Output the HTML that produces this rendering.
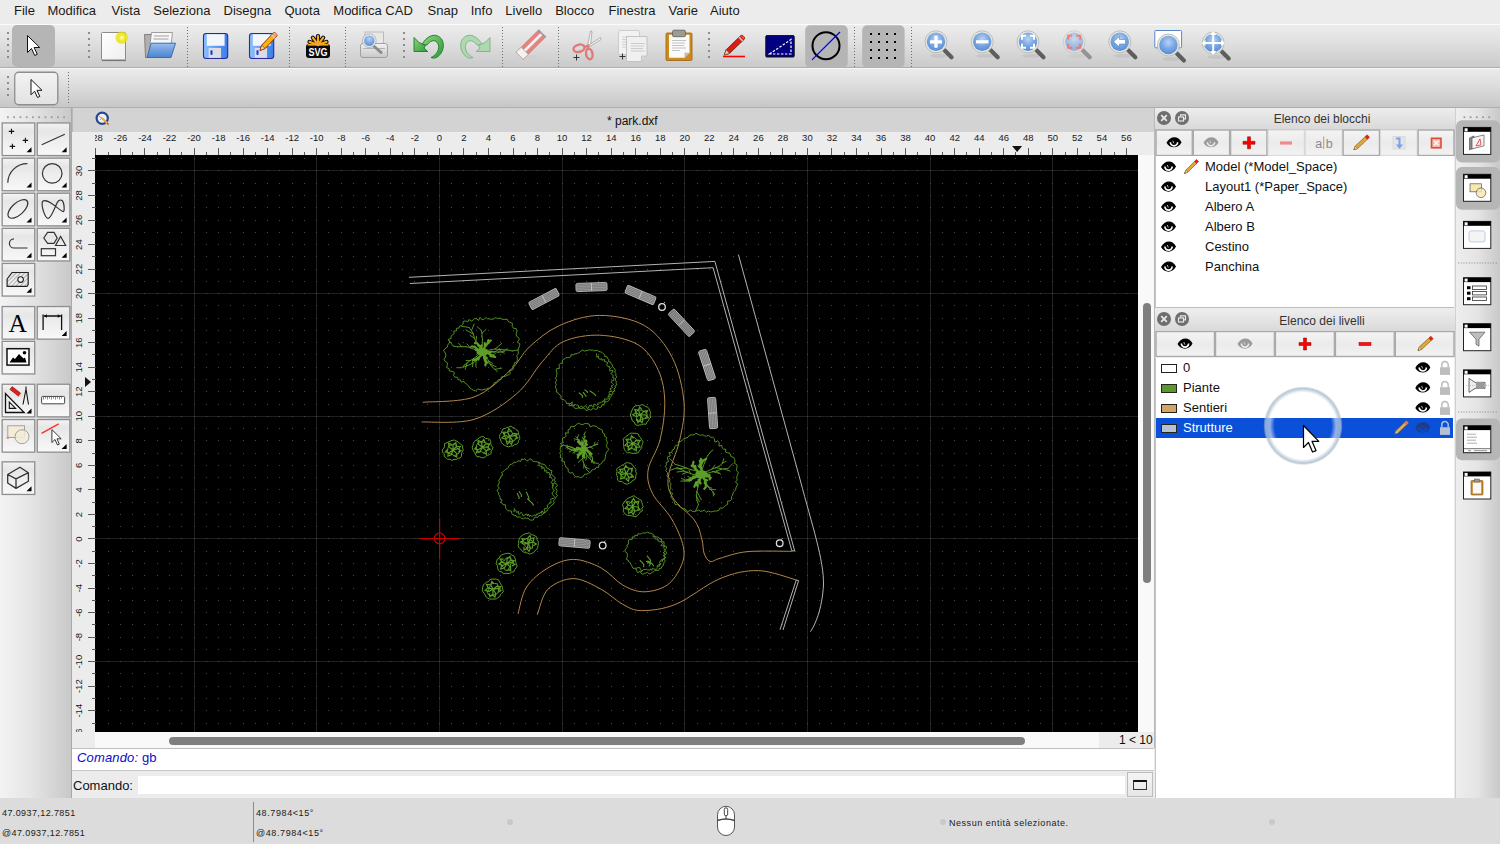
<!DOCTYPE html><html><head><meta charset="utf-8"><style>
*{margin:0;padding:0;box-sizing:border-box}
html,body{width:1500px;height:844px;overflow:hidden;background:#ececec;font-family:"Liberation Sans", sans-serif;color:#000}
.a{position:absolute}
.t{position:absolute;white-space:nowrap;line-height:1}
svg{position:absolute;overflow:visible}
</style></head><body><div class="a" style="left:0;top:0;width:1500px;height:24px;background:#ececec"></div><div class="t" style="left:14px;top:4px;font-size:13px;color:#1a1a1a">File</div><div class="t" style="left:47.5px;top:4px;font-size:13px;color:#1a1a1a">Modifica</div><div class="t" style="left:111.5px;top:4px;font-size:13px;color:#1a1a1a">Vista</div><div class="t" style="left:153.3px;top:4px;font-size:13px;color:#1a1a1a">Seleziona</div><div class="t" style="left:223.5px;top:4px;font-size:13px;color:#1a1a1a">Disegna</div><div class="t" style="left:284.5px;top:4px;font-size:13px;color:#1a1a1a">Quota</div><div class="t" style="left:333.3px;top:4px;font-size:13px;color:#1a1a1a">Modifica CAD</div><div class="t" style="left:427.5px;top:4px;font-size:13px;color:#1a1a1a">Snap</div><div class="t" style="left:470.7px;top:4px;font-size:13px;color:#1a1a1a">Info</div><div class="t" style="left:505.3px;top:4px;font-size:13px;color:#1a1a1a">Livello</div><div class="t" style="left:555.2px;top:4px;font-size:13px;color:#1a1a1a">Blocco</div><div class="t" style="left:608.5px;top:4px;font-size:13px;color:#1a1a1a">Finestra</div><div class="t" style="left:668.5px;top:4px;font-size:13px;color:#1a1a1a">Varie</div><div class="t" style="left:710px;top:4px;font-size:13px;color:#1a1a1a">Aiuto</div><div class="a" style="left:0;top:24px;width:1500px;height:44px;background:linear-gradient(#ececec,#e2e2e2 35%,#cacaca);border-top:1px solid #fbfbfb;border-bottom:1px solid #adadad"></div><div class="a" style="left:0;top:68px;width:1500px;height:40px;background:linear-gradient(#ebebeb,#dedede 40%,#c7c7c7);border-top:1px solid #f8f8f8;border-bottom:1px solid #adadad"></div><svg style="left:0;top:0" width="1500" height="108" viewBox="0 0 1500 108"><defs><linearGradient id="gpage" x1="0" y1="0" x2="1" y2="1"><stop offset="0" stop-color="#ffffff"/><stop offset="1" stop-color="#eeeeee"/></linearGradient><radialGradient id="gglow"><stop offset="0" stop-color="#ffffff"/><stop offset="0.35" stop-color="#f4ee30"/><stop offset="0.75" stop-color="#e8e000" stop-opacity="0.8"/><stop offset="1" stop-color="#e8e000" stop-opacity="0"/></radialGradient><linearGradient id="gblue" x1="0" y1="0" x2="0" y2="1"><stop offset="0" stop-color="#9cc0ec"/><stop offset="0.5" stop-color="#6f9fdc"/><stop offset="1" stop-color="#4f86d0"/></linearGradient><linearGradient id="gfloppy" x1="0" y1="0" x2="1" y2="0"><stop offset="0" stop-color="#8fc0ff"/><stop offset="0.5" stop-color="#5a9cf4"/><stop offset="1" stop-color="#3c7ee8"/></linearGradient><radialGradient id="gmag" cx="0.5" cy="0.35" r="0.7"><stop offset="0" stop-color="#b9d3f3"/><stop offset="0.5" stop-color="#7aa8e4"/><stop offset="1" stop-color="#4f88d6"/></radialGradient><linearGradient id="ggreen" x1="0" y1="0" x2="1" y2="1"><stop offset="0" stop-color="#8fd47a"/><stop offset="1" stop-color="#2e9a3a"/></linearGradient><linearGradient id="gprn" x1="0" y1="0" x2="0" y2="1"><stop offset="0" stop-color="#f2f2f2"/><stop offset="1" stop-color="#c8c8c8"/></linearGradient></defs><rect x="7" y="32" width="2" height="2" fill="#8c8c8c"/><rect x="7" y="38" width="2" height="2" fill="#8c8c8c"/><rect x="7" y="44" width="2" height="2" fill="#8c8c8c"/><rect x="7" y="50" width="2" height="2" fill="#8c8c8c"/><rect x="7" y="56" width="2" height="2" fill="#8c8c8c"/><rect x="403" y="32" width="2" height="2" fill="#8c8c8c"/><rect x="403" y="38" width="2" height="2" fill="#8c8c8c"/><rect x="403" y="44" width="2" height="2" fill="#8c8c8c"/><rect x="403" y="50" width="2" height="2" fill="#8c8c8c"/><rect x="403" y="56" width="2" height="2" fill="#8c8c8c"/><rect x="708" y="32" width="2" height="2" fill="#8c8c8c"/><rect x="708" y="38" width="2" height="2" fill="#8c8c8c"/><rect x="708" y="44" width="2" height="2" fill="#8c8c8c"/><rect x="708" y="50" width="2" height="2" fill="#8c8c8c"/><rect x="708" y="56" width="2" height="2" fill="#8c8c8c"/><rect x="7" y="76" width="2" height="2" fill="#8c8c8c"/><rect x="7" y="82" width="2" height="2" fill="#8c8c8c"/><rect x="7" y="88" width="2" height="2" fill="#8c8c8c"/><rect x="7" y="94" width="2" height="2" fill="#8c8c8c"/><rect x="88" y="32" width="2" height="2" fill="#8c8c8c"/><rect x="88" y="38" width="2" height="2" fill="#8c8c8c"/><rect x="88" y="44" width="2" height="2" fill="#8c8c8c"/><rect x="88" y="50" width="2" height="2" fill="#8c8c8c"/><rect x="88" y="56" width="2" height="2" fill="#8c8c8c"/><path d="M187 27.0h1v1h-1zM187 30.0h1v1h-1zM187 33.0h1v1h-1zM187 36.0h1v1h-1zM187 39.0h1v1h-1zM187 42.0h1v1h-1zM187 45.0h1v1h-1zM187 48.0h1v1h-1zM187 51.0h1v1h-1zM187 54.0h1v1h-1zM187 57.0h1v1h-1zM187 60.0h1v1h-1zM187 63.0h1v1h-1zM187 66.0h1v1h-1z" fill="#6e6e6e"/><path d="M289 27.0h1v1h-1zM289 30.0h1v1h-1zM289 33.0h1v1h-1zM289 36.0h1v1h-1zM289 39.0h1v1h-1zM289 42.0h1v1h-1zM289 45.0h1v1h-1zM289 48.0h1v1h-1zM289 51.0h1v1h-1zM289 54.0h1v1h-1zM289 57.0h1v1h-1zM289 60.0h1v1h-1zM289 63.0h1v1h-1zM289 66.0h1v1h-1z" fill="#6e6e6e"/><path d="M345 27.0h1v1h-1zM345 30.0h1v1h-1zM345 33.0h1v1h-1zM345 36.0h1v1h-1zM345 39.0h1v1h-1zM345 42.0h1v1h-1zM345 45.0h1v1h-1zM345 48.0h1v1h-1zM345 51.0h1v1h-1zM345 54.0h1v1h-1zM345 57.0h1v1h-1zM345 60.0h1v1h-1zM345 63.0h1v1h-1zM345 66.0h1v1h-1z" fill="#6e6e6e"/><path d="M502 27.0h1v1h-1zM502 30.0h1v1h-1zM502 33.0h1v1h-1zM502 36.0h1v1h-1zM502 39.0h1v1h-1zM502 42.0h1v1h-1zM502 45.0h1v1h-1zM502 48.0h1v1h-1zM502 51.0h1v1h-1zM502 54.0h1v1h-1zM502 57.0h1v1h-1zM502 60.0h1v1h-1zM502 63.0h1v1h-1zM502 66.0h1v1h-1z" fill="#6e6e6e"/><path d="M558 27.0h1v1h-1zM558 30.0h1v1h-1zM558 33.0h1v1h-1zM558 36.0h1v1h-1zM558 39.0h1v1h-1zM558 42.0h1v1h-1zM558 45.0h1v1h-1zM558 48.0h1v1h-1zM558 51.0h1v1h-1zM558 54.0h1v1h-1zM558 57.0h1v1h-1zM558 60.0h1v1h-1zM558 63.0h1v1h-1zM558 66.0h1v1h-1z" fill="#6e6e6e"/><path d="M854 27.0h1v1h-1zM854 30.0h1v1h-1zM854 33.0h1v1h-1zM854 36.0h1v1h-1zM854 39.0h1v1h-1zM854 42.0h1v1h-1zM854 45.0h1v1h-1zM854 48.0h1v1h-1zM854 51.0h1v1h-1zM854 54.0h1v1h-1zM854 57.0h1v1h-1zM854 60.0h1v1h-1zM854 63.0h1v1h-1zM854 66.0h1v1h-1z" fill="#6e6e6e"/><path d="M911 27.0h1v1h-1zM911 30.0h1v1h-1zM911 33.0h1v1h-1zM911 36.0h1v1h-1zM911 39.0h1v1h-1zM911 42.0h1v1h-1zM911 45.0h1v1h-1zM911 48.0h1v1h-1zM911 51.0h1v1h-1zM911 54.0h1v1h-1zM911 57.0h1v1h-1zM911 60.0h1v1h-1zM911 63.0h1v1h-1zM911 66.0h1v1h-1z" fill="#6e6e6e"/><path d="M68 72.0h1v1h-1zM68 75.0h1v1h-1zM68 78.0h1v1h-1zM68 81.0h1v1h-1zM68 84.0h1v1h-1zM68 87.0h1v1h-1zM68 90.0h1v1h-1zM68 93.0h1v1h-1zM68 96.0h1v1h-1zM68 99.0h1v1h-1zM68 102.0h1v1h-1z" fill="#6e6e6e"/><rect x="12" y="25" width="43" height="42" rx="5" fill="#b5b5b5"/><path d="M27.5 35.5l0 17.0l4.0 -4.0l3.2 7.0l2.6 -1.2l-3.2 -6.8l5.6 0z" fill="#fff" stroke="#111" stroke-width="1" stroke-linejoin="round"/><rect x="14.8" y="72.3" width="43" height="32.5" rx="4" fill="url(#gprn)" stroke="#8e8e8e" stroke-width="1.4"/><rect x="15.5" y="73" width="41.6" height="31" rx="3.5" fill="#f4f4f4" opacity="0.6"/><path d="M31 79.5l0 15.3l3.6 -3.6l2.8800000000000003 6.3l2.3400000000000003 -1.08l-2.8800000000000003 -6.12l5.04 0z" fill="#fff" stroke="#111" stroke-width="1" stroke-linejoin="round"/><rect x="101.5" y="32.5" width="24" height="27.5" rx="1" fill="url(#gpage)" stroke="#8c8c8c" stroke-width="1"/><path d="M102 60.5h24" stroke="#777" stroke-width="1.2"/><circle cx="121.8" cy="37.7" r="7" fill="url(#gglow)"/><path d="M144.5 34.5h7l5 0v23h-11z" fill="#b0b0b0" stroke="#6e6e6e" stroke-width="0.8"/><path d="M151.5 32.5h21l-3 25h-21z" fill="#f7f7f7" stroke="#8a8a8a" stroke-width="0.8"/><path d="M154 36h15M153.5 39h15" stroke="#bdbdbd" stroke-width="1.5"/><path d="M151.2 43.2h24.3l-4.5 14.3h-24z" fill="url(#gblue)" stroke="#3a6cb4" stroke-width="1"/><rect x="203.5" y="33.5" width="24.2" height="25" rx="2.5" fill="url(#gfloppy)" stroke="#2a2aa0" stroke-width="1.1"/><rect x="206.8" y="34.2" width="17.8" height="11.6" fill="#f4f6fc"/><rect x="208.6" y="47.9" width="12.4" height="10" fill="#dcdce4"/><rect x="210.5" y="50.3" width="2" height="4.5" fill="#0a3ad8"/><rect x="249.5" y="33.5" width="24.2" height="25" rx="2.5" fill="url(#gfloppy)" stroke="#2a2aa0" stroke-width="1.1"/><rect x="252.8" y="34.2" width="17.8" height="11.6" fill="#f4f6fc"/><rect x="254.6" y="47.9" width="12.4" height="10" fill="#dcdce4"/><rect x="256.5" y="50.3" width="2" height="4.5" fill="#0a3ad8"/><g transform="translate(260 50.5) rotate(-46.7)"><path d="M0 0L5 -2.4H21.845235059857504Q23.345235059857504 -2.4 23.345235059857504 0Q23.345235059857504 2.4 21.845235059857504 2.4H5Z" fill="#f7b500" stroke="#9a2200" stroke-width="0.9"/><path d="M0 0L5 -2.4V2.4Z" fill="#f0d8b0" stroke="#9a2200" stroke-width="0.6"/><path d="M19.345235059857504 -2.4V2.4" stroke="#c8c8c8" stroke-width="1.6"/><path d="M21.145235059857505 -2.0Q23.345235059857504 -2.4 23.345235059857504 0Q23.345235059857504 2.4 21.145235059857505 2.0Z" fill="#e8a0a0"/></g><rect x="306" y="43.7" width="24" height="14.2" rx="3" fill="#0a0a0a"/><path d="M318 45L309.5 41.9M318 45L312.8 37.6M318 45L318.0 36.0M318 45L323.2 37.6M318 45L326.5 41.9" stroke="#0a0a0a" stroke-width="4.2" stroke-linecap="round"/><path d="M318 45L309.5 41.9M318 45L312.8 37.6M318 45L318.0 36.0M318 45L323.2 37.6M318 45L326.5 41.9" stroke="#f5a623" stroke-width="2.2" stroke-linecap="round"/><path d="M307.5 44.8H328.5" stroke="#f5a623" stroke-width="1.6"/><text x="318" y="56.3" font-size="10" font-weight="bold" text-anchor="middle" fill="#fff" font-family="Liberation Sans" textLength="19" lengthAdjust="spacingAndGlyphs">SVG</text><rect x="365" y="32" width="18.5" height="13" fill="#e8e8e8" stroke="#b0b0b0" stroke-width="0.8"/><rect x="360.5" y="43.5" width="27" height="14" rx="2.5" fill="url(#gprn)" stroke="#9a9a9a" stroke-width="0.9"/><path d="M363 48.5h22" stroke="#a8a8a8" stroke-width="0.8"/><path d="M372.5 45L381 52.5" stroke="#8a8a8a" stroke-width="3" stroke-linecap="round"/><circle cx="369.3" cy="40.7" r="6" fill="url(#gmag)" stroke="#e8e8e8" stroke-width="1.6"/><circle cx="369.3" cy="40.7" r="6.9" fill="none" stroke="#9a9a9a" stroke-width="0.6"/><g transform="translate(428.5 0) scale(1 1)" opacity="1.0"><path d="M-6.5 44.5C-2 36 6 33 11 37C17 41 16 53 8 57.5C6 58.5 3.5 58 2.5 57.5C7 55.5 11 51 10 45.5C9 40 3 38.5 -1.5 45Z" fill="url(#ggreen)" stroke="#1a7a2a" stroke-width="0.9"/><path d="M-14.5 37.5V51.5H-0.8L-4.5 48L-3 45.5L-9.5 42.5Z" fill="url(#ggreen)" stroke="#1a7a2a" stroke-width="0.9"/></g><g transform="translate(475.5 0) scale(-1 1)" opacity="0.85"><path d="M-6.5 44.5C-2 36 6 33 11 37C17 41 16 53 8 57.5C6 58.5 3.5 58 2.5 57.5C7 55.5 11 51 10 45.5C9 40 3 38.5 -1.5 45Z" fill="#a8d8a8" stroke="#6aaa7a" stroke-width="0.9"/><path d="M-14.5 37.5V51.5H-0.8L-4.5 48L-3 45.5L-9.5 42.5Z" fill="#a8d8a8" stroke="#6aaa7a" stroke-width="0.9"/></g><ellipse cx="531" cy="57" rx="12" ry="1.8" fill="#cfcfcf" opacity="0.8"/><g transform="translate(531 44.5) rotate(-45)"><rect x="-16" y="-5" width="32" height="10" fill="#e58282" stroke="#cc6a6a" stroke-width="0.6"/><rect x="-9" y="-1.4" width="25" height="2.8" fill="#f0f0f0"/><rect x="-16" y="-5" width="7" height="10" fill="#f2f2f2" stroke="#aaa" stroke-width="0.6"/><rect x="14.5" y="-5" width="1.5" height="10" fill="#9a9a9a"/></g><path d="M587.5 46L590.5 31L592 31.5L590.5 46Z" fill="#f4f4f4" stroke="#9a9a9a" stroke-width="0.7"/><path d="M589 45L600.5 37.5L601 39.5L590 46.5Z" fill="#f4f4f4" stroke="#9a9a9a" stroke-width="0.7"/><ellipse cx="579" cy="48.3" rx="5.6" ry="3.6" transform="rotate(-15 579 48.3)" fill="none" stroke="#e07a7a" stroke-width="2.4"/><ellipse cx="589.3" cy="54" rx="3.2" ry="5.3" transform="rotate(-10 589.3 54)" fill="none" stroke="#e07a7a" stroke-width="2.4"/><path d="M584 47.5L588 45.5L588.5 49" fill="none" stroke="#e07a7a" stroke-width="2"/><path d="M573.5 57.5h6M576.5 54.5v6" stroke="#333" stroke-width="1"/><rect x="618.5" y="30.5" width="21" height="24" rx="1" fill="#f2f2f2" stroke="#c4c4c4" stroke-width="0.8"/><path d="M622 37h9M622 39.5h9M622 42h9M622 44.5h9M622 47h9" stroke="#d0d0d0" stroke-width="1"/><path d="M626.5 36.5h20.5v19.5l-5.5 5.5h-15z" fill="#f0f0f0" stroke="#bdbdbd" stroke-width="0.9"/><path d="M641.5 61.5v-5.5h5.5" fill="#d8d8d8" stroke="#bdbdbd" stroke-width="0.8"/><path d="M631 43.5h14M631 46h13M631 48.5h12M631 51h14" stroke="#cacaca" stroke-width="1"/><path d="M619.5 56.5h6M622.5 53.5v6" stroke="#333" stroke-width="1"/><rect x="666" y="33" width="26" height="27.5" rx="1.2" fill="#cf8a1c" stroke="#9a6010" stroke-width="0.8"/><path d="M669 34.8h20.5v18l-5 5h-15.5z" fill="#fafafa"/><path d="M684.5 57.8v-5h5" fill="#bbb"/><rect x="672.5" y="30.2" width="13" height="6.5" rx="1.5" fill="#9c9c90" stroke="#5e5e58" stroke-width="0.8"/><path d="M672 40.5h14M672 43h13M672 45.5h12M672 48h14M672 50.5h8" stroke="#bcbcbc" stroke-width="0.9"/><path d="M723 56.5H745" stroke="#ff0000" stroke-width="1.6"/><g transform="translate(724.3 55) rotate(-43.9)"><path d="M0 0L5 -2.5H25.4453149916642Q26.9453149916642 -2.5 26.9453149916642 0Q26.9453149916642 2.5 25.4453149916642 2.5H5Z" fill="#e01818" stroke="#6a3a10" stroke-width="0.9"/><path d="M0 0L5 -2.5V2.5Z" fill="#f0d0b0" stroke="#6a3a10" stroke-width="0.6"/><path d="M22.9453149916642 -2.5V2.5" stroke="#c8c8c8" stroke-width="1.6"/><path d="M24.745314991664202 -2.1Q26.9453149916642 -2.5 26.9453149916642 0Q26.9453149916642 2.5 24.745314991664202 2.1Z" fill="#ff4040"/></g><rect x="765.8" y="35.6" width="28.4" height="21.4" rx="1" fill="#000080" stroke="#111" stroke-width="1"/><path d="M769.5 54L791 39.5V54Z" fill="none" stroke="#fff" stroke-width="1.2" stroke-dasharray="2.5 1.5"/><rect x="805.2" y="25.2" width="42.6" height="42.4" rx="5" fill="#b5b5b5"/><circle cx="826" cy="45.7" r="13.5" fill="none" stroke="#000" stroke-width="2"/><path d="M812 59.9L840 32" stroke="#0000f0" stroke-width="1.2"/><rect x="862.2" y="25.2" width="42.4" height="42.4" rx="5" fill="#b5b5b5"/><path d="M870 33h2v2h-2zM870 41h2v2h-2zM870 49h2v2h-2zM870 57h2v2h-2zM878 33h2v2h-2zM878 41h2v2h-2zM878 49h2v2h-2zM878 57h2v2h-2zM886 33h2v2h-2zM886 41h2v2h-2zM886 49h2v2h-2zM886 57h2v2h-2zM894 33h2v2h-2zM894 41h2v2h-2zM894 49h2v2h-2zM894 57h2v2h-2z" fill="#000"/><g><ellipse cx="939" cy="55.8" rx="9" ry="2" fill="#b8b8b8" opacity="0.5"/><path d="M944.5 50.3L951.5 57.3" stroke="#5e5e5e" stroke-width="4.2" stroke-linecap="round"/><circle cx="936" cy="41.8" r="11" fill="#e6e6e0" stroke="#b4b4aa" stroke-width="0.8"/><circle cx="936" cy="41.8" r="9.2" fill="url(#gmag)"/><path d="M930 41.8h12M936 35.8v12" stroke="#fff" stroke-width="3.2"/></g><g><ellipse cx="985.2" cy="55.8" rx="9" ry="2" fill="#b8b8b8" opacity="0.5"/><path d="M990.7 50.3L997.7 57.3" stroke="#5e5e5e" stroke-width="4.2" stroke-linecap="round"/><circle cx="982.2" cy="41.8" r="11" fill="#e6e6e0" stroke="#b4b4aa" stroke-width="0.8"/><circle cx="982.2" cy="41.8" r="9.2" fill="url(#gmag)"/><path d="M976 41.8h12.5" stroke="#fff" stroke-width="3.2"/></g><g><ellipse cx="1031" cy="55.8" rx="9" ry="2" fill="#b8b8b8" opacity="0.5"/><path d="M1036.5 50.3L1043.5 57.3" stroke="#5e5e5e" stroke-width="4.2" stroke-linecap="round"/><circle cx="1028" cy="41.8" r="11" fill="#e6e6e0" stroke="#b4b4aa" stroke-width="0.8"/><circle cx="1028" cy="41.8" r="9.2" fill="url(#gmag)"/><path d="M1022 39.8v-4h4M1030 35.8h4v4M1034 43.8v4h-4M1026 47.8h-4v-4" fill="none" stroke="#fff" stroke-width="2"/></g><g opacity="0.55"><ellipse cx="1077.2" cy="55.8" rx="9" ry="2" fill="#b8b8b8" opacity="0.5"/><path d="M1082.7 50.3L1089.7 57.3" stroke="#5e5e5e" stroke-width="4.2" stroke-linecap="round"/><circle cx="1074.2" cy="41.8" r="11" fill="#e6e6e0" stroke="#b4b4aa" stroke-width="0.8"/><circle cx="1074.2" cy="41.8" r="9.2" fill="url(#gmag)"/><path d="M1068.2 39.8v-4h4M1076.2 35.8h4v4M1080.2 43.8v4h-4M1072.2 47.8h-4v-4" fill="none" stroke="#ff2a2a" stroke-width="2"/></g><g><ellipse cx="1122.8" cy="55.8" rx="9" ry="2" fill="#b8b8b8" opacity="0.5"/><path d="M1128.3 50.3L1135.3 57.3" stroke="#5e5e5e" stroke-width="4.2" stroke-linecap="round"/><circle cx="1119.8" cy="41.8" r="11" fill="#e6e6e0" stroke="#b4b4aa" stroke-width="0.8"/><circle cx="1119.8" cy="41.8" r="9.2" fill="url(#gmag)"/><path d="M1113.5 41.8L1119.5 36.5V39.5H1125.5V44H1119.5V47Z" fill="#fff" stroke="#3a6cb4" stroke-width="0.5"/></g><rect x="1154.8" y="30.5" width="26.8" height="17.3" rx="1" fill="#fff" stroke="#5a86c8" stroke-width="1"/><g><ellipse cx="1171.4" cy="59" rx="9" ry="2" fill="#b8b8b8" opacity="0.5"/><path d="M1176.9 53.5L1183.9 60.5" stroke="#5e5e5e" stroke-width="4.2" stroke-linecap="round"/><circle cx="1168.4" cy="45" r="11" fill="#e6e6e0" stroke="#b4b4aa" stroke-width="0.8"/><circle cx="1168.4" cy="45" r="9.2" fill="url(#gmag)"/></g><g><ellipse cx="1216.2" cy="57" rx="9" ry="2" fill="#b8b8b8" opacity="0.5"/><path d="M1221.7 51.5L1228.7 58.5" stroke="#5e5e5e" stroke-width="4.2" stroke-linecap="round"/><circle cx="1213.2" cy="43" r="11" fill="#e6e6e0" stroke="#b4b4aa" stroke-width="0.8"/><circle cx="1213.2" cy="43" r="9.2" fill="url(#gmag)"/><path d="M1213.2 33v20M1203.5 43h19.5" stroke="#fff" stroke-width="2"/><path d="M1213.2 31l-3 4h6zM1213.2 55l-3-4h6zM1201.5 43l4-3v6zM1225 43l-4-3v6z" fill="#fff"/></g></svg><div class="a" style="left:0;top:108px;width:72px;height:690px;background:linear-gradient(90deg,#f3f3f3,#e6e6e6 40%,#c9c9c9);border-right:1px solid #a9a9a9"></div><svg style="left:0;top:108px" width="72" height="400" viewBox="0 108 72 400"><defs><linearGradient id="gbtn" x1="0" y1="0" x2="0" y2="1"><stop offset="0" stop-color="#f3f3f3"/><stop offset="0.25" stop-color="#e6e6e6"/><stop offset="0.5" stop-color="#ededed"/><stop offset="1" stop-color="#f8f8f8"/></linearGradient></defs><rect x="7.0" y="116.3" width="1.8" height="1.8" fill="#9c9c9c"/><rect x="13.2" y="116.3" width="1.8" height="1.8" fill="#9c9c9c"/><rect x="19.5" y="116.3" width="1.8" height="1.8" fill="#9c9c9c"/><rect x="25.8" y="116.3" width="1.8" height="1.8" fill="#9c9c9c"/><rect x="32.0" y="116.3" width="1.8" height="1.8" fill="#9c9c9c"/><rect x="38.2" y="116.3" width="1.8" height="1.8" fill="#9c9c9c"/><rect x="44.5" y="116.3" width="1.8" height="1.8" fill="#9c9c9c"/><rect x="50.8" y="116.3" width="1.8" height="1.8" fill="#9c9c9c"/><rect x="57.0" y="116.3" width="1.8" height="1.8" fill="#9c9c9c"/><rect x="63.2" y="116.3" width="1.8" height="1.8" fill="#9c9c9c"/><rect x="2.15" y="122.95" width="32.6" height="32.6" fill="url(#gbtn)" stroke="#8e8e8e" stroke-width="1.3"/><path d="M26.5 152.3H31.5V147.3Z" fill="#000"/><path d="M8.8 131.4h5.4M11.5 128.7v5.4M22.7 140.4h5.4M25.4 137.7v5.4M9.7 146.4h5.4M12.4 143.7v5.4" stroke="#111" stroke-width="1.1"/><rect x="37.25" y="122.95" width="32.6" height="32.6" fill="url(#gbtn)" stroke="#8e8e8e" stroke-width="1.3"/><path d="M61.6 152.3H66.6V147.3Z" fill="#000"/><path d="M41.7 144.7L64.8 134.3" stroke="#333" fill="none" stroke-width="1.2"/><rect x="2.15" y="158.15" width="32.6" height="32.6" fill="url(#gbtn)" stroke="#8e8e8e" stroke-width="1.3"/><path d="M26.5 187.5H31.5V182.5Z" fill="#000"/><rect x="37.25" y="158.15" width="32.6" height="32.6" fill="url(#gbtn)" stroke="#8e8e8e" stroke-width="1.3"/><path d="M61.6 187.5H66.6V182.5Z" fill="#000"/><path d="M7.8 182.8A19.5 19.5 0 0 1 27.4 163.6" stroke="#333" fill="none" stroke-width="1.2"/><circle cx="52.2" cy="173.4" r="9.8" stroke="#333" fill="none" stroke-width="1.2"/><rect x="2.15" y="193.25" width="32.6" height="32.6" fill="url(#gbtn)" stroke="#8e8e8e" stroke-width="1.3"/><path d="M26.5 222.6H31.5V217.6Z" fill="#000"/><rect x="37.25" y="193.25" width="32.6" height="32.6" fill="url(#gbtn)" stroke="#8e8e8e" stroke-width="1.3"/><path d="M61.6 222.6H66.6V217.6Z" fill="#000"/><ellipse cx="17.9" cy="208.9" rx="12.2" ry="6" transform="rotate(-42 17.9 208.9)" stroke="#333" fill="none" stroke-width="1.2"/><path d="M42.5 201.5C41 206 45 218.5 48.2 218.4C51 218.3 55 207 57 203C59 199 62.5 199 63.5 203C64.5 207 64.5 212 63 211.5C58 209.5 47 197 42.5 201.5Z" stroke="#333" fill="none" stroke-width="1.2"/><rect x="2.15" y="228.35" width="32.6" height="32.6" fill="url(#gbtn)" stroke="#8e8e8e" stroke-width="1.3"/><path d="M26.5 257.7H31.5V252.7Z" fill="#000"/><rect x="37.25" y="228.35" width="32.6" height="32.6" fill="url(#gbtn)" stroke="#8e8e8e" stroke-width="1.3"/><path d="M61.6 257.7H66.6V252.7Z" fill="#000"/><path d="M27.5 248H14A4.6 4.6 0 0 1 14 238.8" stroke="#333" fill="none" stroke-width="1.2"/><path d="M43.8 238L47.6 232.4H54L57.2 238L54 243.4H47.6Z" stroke="#333" fill="none" stroke-width="1.2"/><path d="M55.5 245.5H65.7L60.6 236.4Z" stroke="#333" fill="none" stroke-width="1.2"/><rect x="41.3" y="248.7" width="14.2" height="7" stroke="#333" fill="none" stroke-width="1.2"/><rect x="2.15" y="263.45" width="32.6" height="32.6" fill="url(#gbtn)" stroke="#8e8e8e" stroke-width="1.3"/><path d="M26.5 292.8H31.5V287.8Z" fill="#000"/><defs><pattern id="hatch" width="3" height="3" patternUnits="userSpaceOnUse" patternTransform="rotate(45)"><path d="M0 0V3" stroke="#555" stroke-width="0.8"/></pattern></defs><path d="M7.1 279L12.1 272.5H28.2V284.6L27 286.3H7.1Z" fill="url(#hatch)" stroke="#222" stroke-width="1.2"/><circle cx="20.6" cy="279.6" r="2.8" fill="#f2f2f2" stroke="#222" stroke-width="1.1"/><rect x="2.15" y="306.54999999999995" width="32.6" height="32.6" fill="url(#gbtn)" stroke="#8e8e8e" stroke-width="1.3"/><rect x="37.25" y="306.54999999999995" width="32.6" height="32.6" fill="url(#gbtn)" stroke="#8e8e8e" stroke-width="1.3"/><path d="M61.6 335.9H66.6V330.9Z" fill="#000"/><text x="17.8" y="331.5" font-size="25.5" text-anchor="middle" font-family="Liberation Serif" fill="#000">A</text><path d="M43.1 314.5V330.1M61.6 314.5V330.1M44 316H60.7" stroke="#111" stroke-width="1.3" fill="none"/><path d="M43.6 316L47 314.2V317.8ZM61.1 316L57.7 314.2V317.8Z" fill="#111"/><rect x="2.15" y="341.34999999999997" width="32.6" height="32.6" fill="url(#gbtn)" stroke="#8e8e8e" stroke-width="1.3"/><rect x="7" y="348.7" width="22" height="16.4" fill="#fff" stroke="#111" stroke-width="1.5"/><path d="M9.5 362.5L13 357.5L15 359L19 354L23.5 358.5L25 357.5L26.5 362.5Z" fill="#000"/><circle cx="24.5" cy="352.8" r="1.8" fill="#000"/><rect x="2.15" y="384.25" width="32.6" height="32.6" fill="url(#gbtn)" stroke="#8e8e8e" stroke-width="1.3"/><path d="M26.5 413.6H31.5V408.6Z" fill="#000"/><rect x="37.25" y="384.25" width="32.6" height="32.6" fill="url(#gbtn)" stroke="#8e8e8e" stroke-width="1.3"/><path d="M5.5 393.5V412.5H24.2Z" fill="none" stroke="#111" stroke-width="1.3"/><path d="M9.3 402V408.4H15.6Z" fill="none" stroke="#111" stroke-width="1.1"/><g transform="translate(11 388) rotate(38)"><rect x="0" y="-1.8" width="11" height="3.6" fill="#e02020" stroke="#700" stroke-width="0.5"/><path d="M11 -1.8L14 0L11 1.8Z" fill="#f0d0a0"/></g><path d="M26 386.5V389M26 389L23 404.5M26 389L28.5 404.5" stroke="#111" stroke-width="1.1" fill="none"/><rect x="41.6" y="396.4" width="23" height="7.4" rx="1" fill="#fff" stroke="#444" stroke-width="1"/><path d="M43.5 396.8V399.6M45.5 396.8V398.6M47.5 396.8V399.6M49.5 396.8V398.6M51.5 396.8V399.6M53.5 396.8V398.6M55.5 396.8V399.6M57.5 396.8V398.6M59.5 396.8V399.6M61.5 396.8V398.6" stroke="#444" stroke-width="0.6"/><rect x="2.15" y="419.54999999999995" width="32.6" height="32.6" fill="url(#gbtn)" stroke="#8e8e8e" stroke-width="1.3"/><rect x="37.25" y="419.54999999999995" width="32.6" height="32.6" fill="url(#gbtn)" stroke="#8e8e8e" stroke-width="1.3"/><path d="M61.6 448.9H66.6V443.9Z" fill="#000"/><rect x="7.8" y="425.8" width="16.7" height="11.6" fill="#f2ecd8" stroke="#9a9a9a" stroke-width="0.9"/><circle cx="22" cy="436.7" r="7" fill="#f2ecd8" fill-opacity="0.85" stroke="#9a9a9a" stroke-width="0.9"/><circle cx="7.8" cy="437.7" r="1.2" fill="#f08080"/><path d="M41.5 433.4L58.7 423.9" stroke="#f03030" stroke-width="1.3"/><path d="M51.9 429.6V442.5L55 439.5L57.5 445L59.3 444.2L57 438.8H61.2Z" fill="#fff" stroke="#222" stroke-width="0.9" stroke-linejoin="round"/><rect x="2.15" y="461.84999999999997" width="32.6" height="32.6" fill="url(#gbtn)" stroke="#8e8e8e" stroke-width="1.3"/><path d="M26.5 491.2H31.5V486.2Z" fill="#000"/><path d="M19.9 467.2L7.7 474.5V483L16 488.4L28.4 481.3V472.7ZM7.7 474.5L16 478.8L28.4 472.7M16 478.8V488.4" fill="none" stroke="#333" stroke-width="1.3" stroke-linejoin="round"/></svg><div class="a" style="left:72px;top:108px;width:1083px;height:24px;background:#d3d3d3;border-left:1px solid #b8b8b8"></div><div class="t" style="left:607px;top:115px;font-size:12px;color:#111">* park.dxf</div><svg style="left:90px;top:108px" width="30" height="24" viewBox="90 108 30 24"><circle cx="102.2" cy="118.3" r="5.6" fill="#eef2f8" stroke="#2c4590" stroke-width="2.2"/><path d="M99 116.5l3 1.5M100 120l2-2" stroke="#c05050" stroke-width="0.6"/><path d="M102 118L107.5 123.5" stroke="#e8b020" stroke-width="2.2"/><path d="M107 123L108.6 124.6" stroke="#e05050" stroke-width="1.6"/></svg><div class="a" style="left:72px;top:132px;width:1083px;height:23px;background:#ececec"></div><div class="a" style="left:72px;top:155px;width:23px;height:593px;background:#ececec"></div><div class="a" style="left:95px;top:155px;width:1043px;height:577px;background:#000"></div><div class="a" style="left:1138px;top:155px;width:16px;height:577px;background:#f9f9f9"></div><div class="a" style="left:1143px;top:303px;width:8px;height:280px;background:#7f7f7f;border-radius:4px"></div><div class="a" style="left:95px;top:732px;width:1004px;height:16px;background:#f9f9f9"></div><div class="a" style="left:169px;top:737px;width:856px;height:8px;background:#7f7f7f;border-radius:4px"></div><div class="a" style="left:1099px;top:732px;width:55px;height:16px;background:#ececec"></div><div class="t" style="left:1119px;top:734px;font-size:12px;color:#111">1 &lt; 10</div><div class="a" style="left:1154px;top:108px;width:1px;height:690px;background:#b9b9b9"></div><svg style="left:95px;top:132px;overflow:hidden" width="1043" height="23" viewBox="95 132 1043 23"><path d="M95.5 148V155 M108.5 152V155 M120.5 148V155 M132.5 152V155 M144.5 148V155 M157.5 152V155 M169.5 148V155 M181.5 152V155 M194.5 148V155 M206.5 152V155 M218.5 148V155 M230.5 152V155 M243.5 148V155 M255.5 152V155 M267.5 148V155 M279.5 152V155 M292.5 148V155 M304.5 152V155 M316.5 148V155 M328.5 152V155 M341.5 148V155 M353.5 152V155 M365.5 148V155 M378.5 152V155 M390.5 148V155 M402.5 152V155 M414.5 148V155 M427.5 152V155 M439.5 148V155 M451.5 152V155 M463.5 148V155 M476.5 152V155 M488.5 148V155 M500.5 152V155 M513.5 148V155 M525.5 152V155 M537.5 148V155 M549.5 152V155 M562.5 148V155 M574.5 152V155 M586.5 148V155 M598.5 152V155 M611.5 148V155 M623.5 152V155 M635.5 148V155 M647.5 152V155 M660.5 148V155 M672.5 152V155 M684.5 148V155 M697.5 152V155 M709.5 148V155 M721.5 152V155 M733.5 148V155 M746.5 152V155 M758.5 148V155 M770.5 152V155 M782.5 148V155 M795.5 152V155 M807.5 148V155 M819.5 152V155 M831.5 148V155 M844.5 152V155 M856.5 148V155 M868.5 152V155 M881.5 148V155 M893.5 152V155 M905.5 148V155 M917.5 152V155 M930.5 148V155 M942.5 152V155 M954.5 148V155 M966.5 152V155 M979.5 148V155 M991.5 152V155 M1003.5 148V155 M1015.5 152V155 M1028.5 148V155 M1040.5 152V155 M1052.5 148V155 M1065.5 152V155 M1077.5 148V155 M1089.5 152V155 M1101.5 148V155 M1114.5 152V155 M1126.5 148V155" stroke="#5a5a5a" stroke-width="1"/><text x="95.9" y="141" font-size="9.5" text-anchor="middle" fill="#1a1a1a" font-family="Liberation Sans">-28</text><text x="120.4" y="141" font-size="9.5" text-anchor="middle" fill="#1a1a1a" font-family="Liberation Sans">-26</text><text x="145.0" y="141" font-size="9.5" text-anchor="middle" fill="#1a1a1a" font-family="Liberation Sans">-24</text><text x="169.5" y="141" font-size="9.5" text-anchor="middle" fill="#1a1a1a" font-family="Liberation Sans">-22</text><text x="194.0" y="141" font-size="9.5" text-anchor="middle" fill="#1a1a1a" font-family="Liberation Sans">-20</text><text x="218.6" y="141" font-size="9.5" text-anchor="middle" fill="#1a1a1a" font-family="Liberation Sans">-18</text><text x="243.1" y="141" font-size="9.5" text-anchor="middle" fill="#1a1a1a" font-family="Liberation Sans">-16</text><text x="267.6" y="141" font-size="9.5" text-anchor="middle" fill="#1a1a1a" font-family="Liberation Sans">-14</text><text x="292.2" y="141" font-size="9.5" text-anchor="middle" fill="#1a1a1a" font-family="Liberation Sans">-12</text><text x="316.7" y="141" font-size="9.5" text-anchor="middle" fill="#1a1a1a" font-family="Liberation Sans">-10</text><text x="341.3" y="141" font-size="9.5" text-anchor="middle" fill="#1a1a1a" font-family="Liberation Sans">-8</text><text x="365.8" y="141" font-size="9.5" text-anchor="middle" fill="#1a1a1a" font-family="Liberation Sans">-6</text><text x="390.3" y="141" font-size="9.5" text-anchor="middle" fill="#1a1a1a" font-family="Liberation Sans">-4</text><text x="414.9" y="141" font-size="9.5" text-anchor="middle" fill="#1a1a1a" font-family="Liberation Sans">-2</text><text x="439.4" y="141" font-size="9.5" text-anchor="middle" fill="#1a1a1a" font-family="Liberation Sans">0</text><text x="463.9" y="141" font-size="9.5" text-anchor="middle" fill="#1a1a1a" font-family="Liberation Sans">2</text><text x="488.5" y="141" font-size="9.5" text-anchor="middle" fill="#1a1a1a" font-family="Liberation Sans">4</text><text x="513.0" y="141" font-size="9.5" text-anchor="middle" fill="#1a1a1a" font-family="Liberation Sans">6</text><text x="537.5" y="141" font-size="9.5" text-anchor="middle" fill="#1a1a1a" font-family="Liberation Sans">8</text><text x="562.1" y="141" font-size="9.5" text-anchor="middle" fill="#1a1a1a" font-family="Liberation Sans">10</text><text x="586.6" y="141" font-size="9.5" text-anchor="middle" fill="#1a1a1a" font-family="Liberation Sans">12</text><text x="611.2" y="141" font-size="9.5" text-anchor="middle" fill="#1a1a1a" font-family="Liberation Sans">14</text><text x="635.7" y="141" font-size="9.5" text-anchor="middle" fill="#1a1a1a" font-family="Liberation Sans">16</text><text x="660.2" y="141" font-size="9.5" text-anchor="middle" fill="#1a1a1a" font-family="Liberation Sans">18</text><text x="684.8" y="141" font-size="9.5" text-anchor="middle" fill="#1a1a1a" font-family="Liberation Sans">20</text><text x="709.3" y="141" font-size="9.5" text-anchor="middle" fill="#1a1a1a" font-family="Liberation Sans">22</text><text x="733.8" y="141" font-size="9.5" text-anchor="middle" fill="#1a1a1a" font-family="Liberation Sans">24</text><text x="758.4" y="141" font-size="9.5" text-anchor="middle" fill="#1a1a1a" font-family="Liberation Sans">26</text><text x="782.9" y="141" font-size="9.5" text-anchor="middle" fill="#1a1a1a" font-family="Liberation Sans">28</text><text x="807.4" y="141" font-size="9.5" text-anchor="middle" fill="#1a1a1a" font-family="Liberation Sans">30</text><text x="832.0" y="141" font-size="9.5" text-anchor="middle" fill="#1a1a1a" font-family="Liberation Sans">32</text><text x="856.5" y="141" font-size="9.5" text-anchor="middle" fill="#1a1a1a" font-family="Liberation Sans">34</text><text x="881.0" y="141" font-size="9.5" text-anchor="middle" fill="#1a1a1a" font-family="Liberation Sans">36</text><text x="905.6" y="141" font-size="9.5" text-anchor="middle" fill="#1a1a1a" font-family="Liberation Sans">38</text><text x="930.1" y="141" font-size="9.5" text-anchor="middle" fill="#1a1a1a" font-family="Liberation Sans">40</text><text x="954.7" y="141" font-size="9.5" text-anchor="middle" fill="#1a1a1a" font-family="Liberation Sans">42</text><text x="979.2" y="141" font-size="9.5" text-anchor="middle" fill="#1a1a1a" font-family="Liberation Sans">44</text><text x="1003.7" y="141" font-size="9.5" text-anchor="middle" fill="#1a1a1a" font-family="Liberation Sans">46</text><text x="1028.3" y="141" font-size="9.5" text-anchor="middle" fill="#1a1a1a" font-family="Liberation Sans">48</text><text x="1052.8" y="141" font-size="9.5" text-anchor="middle" fill="#1a1a1a" font-family="Liberation Sans">50</text><text x="1077.3" y="141" font-size="9.5" text-anchor="middle" fill="#1a1a1a" font-family="Liberation Sans">52</text><text x="1101.9" y="141" font-size="9.5" text-anchor="middle" fill="#1a1a1a" font-family="Liberation Sans">54</text><text x="1126.4" y="141" font-size="9.5" text-anchor="middle" fill="#1a1a1a" font-family="Liberation Sans">56</text><path d="M1012.1 146H1022.1L1017.1 152Z" fill="#111"/></svg><svg style="left:72px;top:155px;overflow:hidden" width="23" height="577" viewBox="72 155 23 577"><path d="M92 723.5H95 M88 710.5H95 M92 698.5H95 M88 686.5H95 M92 673.5H95 M88 661.5H95 M92 649.5H95 M88 637.5H95 M92 624.5H95 M88 612.5H95 M92 600.5H95 M88 588.5H95 M92 575.5H95 M88 563.5H95 M92 551.5H95 M88 538.5H95 M92 526.5H95 M88 514.5H95 M92 502.5H95 M88 489.5H95 M92 477.5H95 M88 465.5H95 M92 453.5H95 M88 440.5H95 M92 428.5H95 M88 416.5H95 M92 404.5H95 M88 391.5H95 M92 379.5H95 M88 367.5H95 M92 354.5H95 M88 342.5H95 M92 330.5H95 M88 318.5H95 M92 305.5H95 M88 293.5H95 M92 281.5H95 M88 269.5H95 M92 256.5H95 M88 244.5H95 M92 232.5H95 M88 220.5H95 M92 207.5H95 M88 195.5H95 M92 183.5H95 M88 170.5H95 M92 158.5H95" stroke="#5a5a5a" stroke-width="1"/><text x="0" y="0" transform="translate(81.5 735.3) rotate(-90)" font-size="9.5" text-anchor="middle" fill="#1a1a1a" font-family="Liberation Sans">-16</text><text x="0" y="0" transform="translate(81.5 710.7) rotate(-90)" font-size="9.5" text-anchor="middle" fill="#1a1a1a" font-family="Liberation Sans">-14</text><text x="0" y="0" transform="translate(81.5 686.2) rotate(-90)" font-size="9.5" text-anchor="middle" fill="#1a1a1a" font-family="Liberation Sans">-12</text><text x="0" y="0" transform="translate(81.5 661.7) rotate(-90)" font-size="9.5" text-anchor="middle" fill="#1a1a1a" font-family="Liberation Sans">-10</text><text x="0" y="0" transform="translate(81.5 637.1) rotate(-90)" font-size="9.5" text-anchor="middle" fill="#1a1a1a" font-family="Liberation Sans">-8</text><text x="0" y="0" transform="translate(81.5 612.6) rotate(-90)" font-size="9.5" text-anchor="middle" fill="#1a1a1a" font-family="Liberation Sans">-6</text><text x="0" y="0" transform="translate(81.5 588.1) rotate(-90)" font-size="9.5" text-anchor="middle" fill="#1a1a1a" font-family="Liberation Sans">-4</text><text x="0" y="0" transform="translate(81.5 563.5) rotate(-90)" font-size="9.5" text-anchor="middle" fill="#1a1a1a" font-family="Liberation Sans">-2</text><text x="0" y="0" transform="translate(81.5 539.0) rotate(-90)" font-size="9.5" text-anchor="middle" fill="#1a1a1a" font-family="Liberation Sans">0</text><text x="0" y="0" transform="translate(81.5 514.5) rotate(-90)" font-size="9.5" text-anchor="middle" fill="#1a1a1a" font-family="Liberation Sans">2</text><text x="0" y="0" transform="translate(81.5 489.9) rotate(-90)" font-size="9.5" text-anchor="middle" fill="#1a1a1a" font-family="Liberation Sans">4</text><text x="0" y="0" transform="translate(81.5 465.4) rotate(-90)" font-size="9.5" text-anchor="middle" fill="#1a1a1a" font-family="Liberation Sans">6</text><text x="0" y="0" transform="translate(81.5 440.9) rotate(-90)" font-size="9.5" text-anchor="middle" fill="#1a1a1a" font-family="Liberation Sans">8</text><text x="0" y="0" transform="translate(81.5 416.3) rotate(-90)" font-size="9.5" text-anchor="middle" fill="#1a1a1a" font-family="Liberation Sans">10</text><text x="0" y="0" transform="translate(81.5 391.8) rotate(-90)" font-size="9.5" text-anchor="middle" fill="#1a1a1a" font-family="Liberation Sans">12</text><text x="0" y="0" transform="translate(81.5 367.2) rotate(-90)" font-size="9.5" text-anchor="middle" fill="#1a1a1a" font-family="Liberation Sans">14</text><text x="0" y="0" transform="translate(81.5 342.7) rotate(-90)" font-size="9.5" text-anchor="middle" fill="#1a1a1a" font-family="Liberation Sans">16</text><text x="0" y="0" transform="translate(81.5 318.2) rotate(-90)" font-size="9.5" text-anchor="middle" fill="#1a1a1a" font-family="Liberation Sans">18</text><text x="0" y="0" transform="translate(81.5 293.6) rotate(-90)" font-size="9.5" text-anchor="middle" fill="#1a1a1a" font-family="Liberation Sans">20</text><text x="0" y="0" transform="translate(81.5 269.1) rotate(-90)" font-size="9.5" text-anchor="middle" fill="#1a1a1a" font-family="Liberation Sans">22</text><text x="0" y="0" transform="translate(81.5 244.6) rotate(-90)" font-size="9.5" text-anchor="middle" fill="#1a1a1a" font-family="Liberation Sans">24</text><text x="0" y="0" transform="translate(81.5 220.0) rotate(-90)" font-size="9.5" text-anchor="middle" fill="#1a1a1a" font-family="Liberation Sans">26</text><text x="0" y="0" transform="translate(81.5 195.5) rotate(-90)" font-size="9.5" text-anchor="middle" fill="#1a1a1a" font-family="Liberation Sans">28</text><text x="0" y="0" transform="translate(81.5 171.0) rotate(-90)" font-size="9.5" text-anchor="middle" fill="#1a1a1a" font-family="Liberation Sans">30</text><path d="M85 377.1V387.1L91 382.1Z" fill="#111"/></svg><svg style="left:95px;top:155px;overflow:hidden" width="1043" height="577" viewBox="95 155 1043 577"><path d="M194.5 155V732 M316.5 155V732 M439.5 155V732 M562.5 155V732 M684.5 155V732 M807.5 155V732 M930.5 155V732 M1052.5 155V732 M95 661.5H1138 M95 538.5H1138 M95 416.5H1138 M95 293.5H1138 M95 170.5H1138" stroke="#202020" stroke-width="1"/><path d="M95 723h1v1h-1zM95 710h1v1h-1zM95 698h1v1h-1zM95 686h1v1h-1zM95 673h1v1h-1zM95 661h1v1h-1zM95 649h1v1h-1zM95 637h1v1h-1zM95 624h1v1h-1zM95 612h1v1h-1zM95 600h1v1h-1zM95 588h1v1h-1zM95 575h1v1h-1zM95 563h1v1h-1zM95 551h1v1h-1zM95 538h1v1h-1zM95 526h1v1h-1zM95 514h1v1h-1zM95 502h1v1h-1zM95 489h1v1h-1zM95 477h1v1h-1zM95 465h1v1h-1zM95 453h1v1h-1zM95 440h1v1h-1zM95 428h1v1h-1zM95 416h1v1h-1zM95 404h1v1h-1zM95 391h1v1h-1zM95 379h1v1h-1zM95 367h1v1h-1zM95 354h1v1h-1zM95 342h1v1h-1zM95 330h1v1h-1zM95 318h1v1h-1zM95 305h1v1h-1zM95 293h1v1h-1zM95 281h1v1h-1zM95 269h1v1h-1zM95 256h1v1h-1zM95 244h1v1h-1zM95 232h1v1h-1zM95 220h1v1h-1zM95 207h1v1h-1zM95 195h1v1h-1zM95 183h1v1h-1zM95 170h1v1h-1zM95 158h1v1h-1zM108 723h1v1h-1zM108 710h1v1h-1zM108 698h1v1h-1zM108 686h1v1h-1zM108 673h1v1h-1zM108 661h1v1h-1zM108 649h1v1h-1zM108 637h1v1h-1zM108 624h1v1h-1zM108 612h1v1h-1zM108 600h1v1h-1zM108 588h1v1h-1zM108 575h1v1h-1zM108 563h1v1h-1zM108 551h1v1h-1zM108 538h1v1h-1zM108 526h1v1h-1zM108 514h1v1h-1zM108 502h1v1h-1zM108 489h1v1h-1zM108 477h1v1h-1zM108 465h1v1h-1zM108 453h1v1h-1zM108 440h1v1h-1zM108 428h1v1h-1zM108 416h1v1h-1zM108 404h1v1h-1zM108 391h1v1h-1zM108 379h1v1h-1zM108 367h1v1h-1zM108 354h1v1h-1zM108 342h1v1h-1zM108 330h1v1h-1zM108 318h1v1h-1zM108 305h1v1h-1zM108 293h1v1h-1zM108 281h1v1h-1zM108 269h1v1h-1zM108 256h1v1h-1zM108 244h1v1h-1zM108 232h1v1h-1zM108 220h1v1h-1zM108 207h1v1h-1zM108 195h1v1h-1zM108 183h1v1h-1zM108 170h1v1h-1zM108 158h1v1h-1zM120 723h1v1h-1zM120 710h1v1h-1zM120 698h1v1h-1zM120 686h1v1h-1zM120 673h1v1h-1zM120 661h1v1h-1zM120 649h1v1h-1zM120 637h1v1h-1zM120 624h1v1h-1zM120 612h1v1h-1zM120 600h1v1h-1zM120 588h1v1h-1zM120 575h1v1h-1zM120 563h1v1h-1zM120 551h1v1h-1zM120 538h1v1h-1zM120 526h1v1h-1zM120 514h1v1h-1zM120 502h1v1h-1zM120 489h1v1h-1zM120 477h1v1h-1zM120 465h1v1h-1zM120 453h1v1h-1zM120 440h1v1h-1zM120 428h1v1h-1zM120 416h1v1h-1zM120 404h1v1h-1zM120 391h1v1h-1zM120 379h1v1h-1zM120 367h1v1h-1zM120 354h1v1h-1zM120 342h1v1h-1zM120 330h1v1h-1zM120 318h1v1h-1zM120 305h1v1h-1zM120 293h1v1h-1zM120 281h1v1h-1zM120 269h1v1h-1zM120 256h1v1h-1zM120 244h1v1h-1zM120 232h1v1h-1zM120 220h1v1h-1zM120 207h1v1h-1zM120 195h1v1h-1zM120 183h1v1h-1zM120 170h1v1h-1zM120 158h1v1h-1zM132 723h1v1h-1zM132 710h1v1h-1zM132 698h1v1h-1zM132 686h1v1h-1zM132 673h1v1h-1zM132 661h1v1h-1zM132 649h1v1h-1zM132 637h1v1h-1zM132 624h1v1h-1zM132 612h1v1h-1zM132 600h1v1h-1zM132 588h1v1h-1zM132 575h1v1h-1zM132 563h1v1h-1zM132 551h1v1h-1zM132 538h1v1h-1zM132 526h1v1h-1zM132 514h1v1h-1zM132 502h1v1h-1zM132 489h1v1h-1zM132 477h1v1h-1zM132 465h1v1h-1zM132 453h1v1h-1zM132 440h1v1h-1zM132 428h1v1h-1zM132 416h1v1h-1zM132 404h1v1h-1zM132 391h1v1h-1zM132 379h1v1h-1zM132 367h1v1h-1zM132 354h1v1h-1zM132 342h1v1h-1zM132 330h1v1h-1zM132 318h1v1h-1zM132 305h1v1h-1zM132 293h1v1h-1zM132 281h1v1h-1zM132 269h1v1h-1zM132 256h1v1h-1zM132 244h1v1h-1zM132 232h1v1h-1zM132 220h1v1h-1zM132 207h1v1h-1zM132 195h1v1h-1zM132 183h1v1h-1zM132 170h1v1h-1zM132 158h1v1h-1zM144 723h1v1h-1zM144 710h1v1h-1zM144 698h1v1h-1zM144 686h1v1h-1zM144 673h1v1h-1zM144 661h1v1h-1zM144 649h1v1h-1zM144 637h1v1h-1zM144 624h1v1h-1zM144 612h1v1h-1zM144 600h1v1h-1zM144 588h1v1h-1zM144 575h1v1h-1zM144 563h1v1h-1zM144 551h1v1h-1zM144 538h1v1h-1zM144 526h1v1h-1zM144 514h1v1h-1zM144 502h1v1h-1zM144 489h1v1h-1zM144 477h1v1h-1zM144 465h1v1h-1zM144 453h1v1h-1zM144 440h1v1h-1zM144 428h1v1h-1zM144 416h1v1h-1zM144 404h1v1h-1zM144 391h1v1h-1zM144 379h1v1h-1zM144 367h1v1h-1zM144 354h1v1h-1zM144 342h1v1h-1zM144 330h1v1h-1zM144 318h1v1h-1zM144 305h1v1h-1zM144 293h1v1h-1zM144 281h1v1h-1zM144 269h1v1h-1zM144 256h1v1h-1zM144 244h1v1h-1zM144 232h1v1h-1zM144 220h1v1h-1zM144 207h1v1h-1zM144 195h1v1h-1zM144 183h1v1h-1zM144 170h1v1h-1zM144 158h1v1h-1zM157 723h1v1h-1zM157 710h1v1h-1zM157 698h1v1h-1zM157 686h1v1h-1zM157 673h1v1h-1zM157 661h1v1h-1zM157 649h1v1h-1zM157 637h1v1h-1zM157 624h1v1h-1zM157 612h1v1h-1zM157 600h1v1h-1zM157 588h1v1h-1zM157 575h1v1h-1zM157 563h1v1h-1zM157 551h1v1h-1zM157 538h1v1h-1zM157 526h1v1h-1zM157 514h1v1h-1zM157 502h1v1h-1zM157 489h1v1h-1zM157 477h1v1h-1zM157 465h1v1h-1zM157 453h1v1h-1zM157 440h1v1h-1zM157 428h1v1h-1zM157 416h1v1h-1zM157 404h1v1h-1zM157 391h1v1h-1zM157 379h1v1h-1zM157 367h1v1h-1zM157 354h1v1h-1zM157 342h1v1h-1zM157 330h1v1h-1zM157 318h1v1h-1zM157 305h1v1h-1zM157 293h1v1h-1zM157 281h1v1h-1zM157 269h1v1h-1zM157 256h1v1h-1zM157 244h1v1h-1zM157 232h1v1h-1zM157 220h1v1h-1zM157 207h1v1h-1zM157 195h1v1h-1zM157 183h1v1h-1zM157 170h1v1h-1zM157 158h1v1h-1zM169 723h1v1h-1zM169 710h1v1h-1zM169 698h1v1h-1zM169 686h1v1h-1zM169 673h1v1h-1zM169 661h1v1h-1zM169 649h1v1h-1zM169 637h1v1h-1zM169 624h1v1h-1zM169 612h1v1h-1zM169 600h1v1h-1zM169 588h1v1h-1zM169 575h1v1h-1zM169 563h1v1h-1zM169 551h1v1h-1zM169 538h1v1h-1zM169 526h1v1h-1zM169 514h1v1h-1zM169 502h1v1h-1zM169 489h1v1h-1zM169 477h1v1h-1zM169 465h1v1h-1zM169 453h1v1h-1zM169 440h1v1h-1zM169 428h1v1h-1zM169 416h1v1h-1zM169 404h1v1h-1zM169 391h1v1h-1zM169 379h1v1h-1zM169 367h1v1h-1zM169 354h1v1h-1zM169 342h1v1h-1zM169 330h1v1h-1zM169 318h1v1h-1zM169 305h1v1h-1zM169 293h1v1h-1zM169 281h1v1h-1zM169 269h1v1h-1zM169 256h1v1h-1zM169 244h1v1h-1zM169 232h1v1h-1zM169 220h1v1h-1zM169 207h1v1h-1zM169 195h1v1h-1zM169 183h1v1h-1zM169 170h1v1h-1zM169 158h1v1h-1zM181 723h1v1h-1zM181 710h1v1h-1zM181 698h1v1h-1zM181 686h1v1h-1zM181 673h1v1h-1zM181 661h1v1h-1zM181 649h1v1h-1zM181 637h1v1h-1zM181 624h1v1h-1zM181 612h1v1h-1zM181 600h1v1h-1zM181 588h1v1h-1zM181 575h1v1h-1zM181 563h1v1h-1zM181 551h1v1h-1zM181 538h1v1h-1zM181 526h1v1h-1zM181 514h1v1h-1zM181 502h1v1h-1zM181 489h1v1h-1zM181 477h1v1h-1zM181 465h1v1h-1zM181 453h1v1h-1zM181 440h1v1h-1zM181 428h1v1h-1zM181 416h1v1h-1zM181 404h1v1h-1zM181 391h1v1h-1zM181 379h1v1h-1zM181 367h1v1h-1zM181 354h1v1h-1zM181 342h1v1h-1zM181 330h1v1h-1zM181 318h1v1h-1zM181 305h1v1h-1zM181 293h1v1h-1zM181 281h1v1h-1zM181 269h1v1h-1zM181 256h1v1h-1zM181 244h1v1h-1zM181 232h1v1h-1zM181 220h1v1h-1zM181 207h1v1h-1zM181 195h1v1h-1zM181 183h1v1h-1zM181 170h1v1h-1zM181 158h1v1h-1zM194 723h1v1h-1zM194 710h1v1h-1zM194 698h1v1h-1zM194 686h1v1h-1zM194 673h1v1h-1zM194 661h1v1h-1zM194 649h1v1h-1zM194 637h1v1h-1zM194 624h1v1h-1zM194 612h1v1h-1zM194 600h1v1h-1zM194 588h1v1h-1zM194 575h1v1h-1zM194 563h1v1h-1zM194 551h1v1h-1zM194 538h1v1h-1zM194 526h1v1h-1zM194 514h1v1h-1zM194 502h1v1h-1zM194 489h1v1h-1zM194 477h1v1h-1zM194 465h1v1h-1zM194 453h1v1h-1zM194 440h1v1h-1zM194 428h1v1h-1zM194 416h1v1h-1zM194 404h1v1h-1zM194 391h1v1h-1zM194 379h1v1h-1zM194 367h1v1h-1zM194 354h1v1h-1zM194 342h1v1h-1zM194 330h1v1h-1zM194 318h1v1h-1zM194 305h1v1h-1zM194 293h1v1h-1zM194 281h1v1h-1zM194 269h1v1h-1zM194 256h1v1h-1zM194 244h1v1h-1zM194 232h1v1h-1zM194 220h1v1h-1zM194 207h1v1h-1zM194 195h1v1h-1zM194 183h1v1h-1zM194 170h1v1h-1zM194 158h1v1h-1zM206 723h1v1h-1zM206 710h1v1h-1zM206 698h1v1h-1zM206 686h1v1h-1zM206 673h1v1h-1zM206 661h1v1h-1zM206 649h1v1h-1zM206 637h1v1h-1zM206 624h1v1h-1zM206 612h1v1h-1zM206 600h1v1h-1zM206 588h1v1h-1zM206 575h1v1h-1zM206 563h1v1h-1zM206 551h1v1h-1zM206 538h1v1h-1zM206 526h1v1h-1zM206 514h1v1h-1zM206 502h1v1h-1zM206 489h1v1h-1zM206 477h1v1h-1zM206 465h1v1h-1zM206 453h1v1h-1zM206 440h1v1h-1zM206 428h1v1h-1zM206 416h1v1h-1zM206 404h1v1h-1zM206 391h1v1h-1zM206 379h1v1h-1zM206 367h1v1h-1zM206 354h1v1h-1zM206 342h1v1h-1zM206 330h1v1h-1zM206 318h1v1h-1zM206 305h1v1h-1zM206 293h1v1h-1zM206 281h1v1h-1zM206 269h1v1h-1zM206 256h1v1h-1zM206 244h1v1h-1zM206 232h1v1h-1zM206 220h1v1h-1zM206 207h1v1h-1zM206 195h1v1h-1zM206 183h1v1h-1zM206 170h1v1h-1zM206 158h1v1h-1zM218 723h1v1h-1zM218 710h1v1h-1zM218 698h1v1h-1zM218 686h1v1h-1zM218 673h1v1h-1zM218 661h1v1h-1zM218 649h1v1h-1zM218 637h1v1h-1zM218 624h1v1h-1zM218 612h1v1h-1zM218 600h1v1h-1zM218 588h1v1h-1zM218 575h1v1h-1zM218 563h1v1h-1zM218 551h1v1h-1zM218 538h1v1h-1zM218 526h1v1h-1zM218 514h1v1h-1zM218 502h1v1h-1zM218 489h1v1h-1zM218 477h1v1h-1zM218 465h1v1h-1zM218 453h1v1h-1zM218 440h1v1h-1zM218 428h1v1h-1zM218 416h1v1h-1zM218 404h1v1h-1zM218 391h1v1h-1zM218 379h1v1h-1zM218 367h1v1h-1zM218 354h1v1h-1zM218 342h1v1h-1zM218 330h1v1h-1zM218 318h1v1h-1zM218 305h1v1h-1zM218 293h1v1h-1zM218 281h1v1h-1zM218 269h1v1h-1zM218 256h1v1h-1zM218 244h1v1h-1zM218 232h1v1h-1zM218 220h1v1h-1zM218 207h1v1h-1zM218 195h1v1h-1zM218 183h1v1h-1zM218 170h1v1h-1zM218 158h1v1h-1zM230 723h1v1h-1zM230 710h1v1h-1zM230 698h1v1h-1zM230 686h1v1h-1zM230 673h1v1h-1zM230 661h1v1h-1zM230 649h1v1h-1zM230 637h1v1h-1zM230 624h1v1h-1zM230 612h1v1h-1zM230 600h1v1h-1zM230 588h1v1h-1zM230 575h1v1h-1zM230 563h1v1h-1zM230 551h1v1h-1zM230 538h1v1h-1zM230 526h1v1h-1zM230 514h1v1h-1zM230 502h1v1h-1zM230 489h1v1h-1zM230 477h1v1h-1zM230 465h1v1h-1zM230 453h1v1h-1zM230 440h1v1h-1zM230 428h1v1h-1zM230 416h1v1h-1zM230 404h1v1h-1zM230 391h1v1h-1zM230 379h1v1h-1zM230 367h1v1h-1zM230 354h1v1h-1zM230 342h1v1h-1zM230 330h1v1h-1zM230 318h1v1h-1zM230 305h1v1h-1zM230 293h1v1h-1zM230 281h1v1h-1zM230 269h1v1h-1zM230 256h1v1h-1zM230 244h1v1h-1zM230 232h1v1h-1zM230 220h1v1h-1zM230 207h1v1h-1zM230 195h1v1h-1zM230 183h1v1h-1zM230 170h1v1h-1zM230 158h1v1h-1zM243 723h1v1h-1zM243 710h1v1h-1zM243 698h1v1h-1zM243 686h1v1h-1zM243 673h1v1h-1zM243 661h1v1h-1zM243 649h1v1h-1zM243 637h1v1h-1zM243 624h1v1h-1zM243 612h1v1h-1zM243 600h1v1h-1zM243 588h1v1h-1zM243 575h1v1h-1zM243 563h1v1h-1zM243 551h1v1h-1zM243 538h1v1h-1zM243 526h1v1h-1zM243 514h1v1h-1zM243 502h1v1h-1zM243 489h1v1h-1zM243 477h1v1h-1zM243 465h1v1h-1zM243 453h1v1h-1zM243 440h1v1h-1zM243 428h1v1h-1zM243 416h1v1h-1zM243 404h1v1h-1zM243 391h1v1h-1zM243 379h1v1h-1zM243 367h1v1h-1zM243 354h1v1h-1zM243 342h1v1h-1zM243 330h1v1h-1zM243 318h1v1h-1zM243 305h1v1h-1zM243 293h1v1h-1zM243 281h1v1h-1zM243 269h1v1h-1zM243 256h1v1h-1zM243 244h1v1h-1zM243 232h1v1h-1zM243 220h1v1h-1zM243 207h1v1h-1zM243 195h1v1h-1zM243 183h1v1h-1zM243 170h1v1h-1zM243 158h1v1h-1zM255 723h1v1h-1zM255 710h1v1h-1zM255 698h1v1h-1zM255 686h1v1h-1zM255 673h1v1h-1zM255 661h1v1h-1zM255 649h1v1h-1zM255 637h1v1h-1zM255 624h1v1h-1zM255 612h1v1h-1zM255 600h1v1h-1zM255 588h1v1h-1zM255 575h1v1h-1zM255 563h1v1h-1zM255 551h1v1h-1zM255 538h1v1h-1zM255 526h1v1h-1zM255 514h1v1h-1zM255 502h1v1h-1zM255 489h1v1h-1zM255 477h1v1h-1zM255 465h1v1h-1zM255 453h1v1h-1zM255 440h1v1h-1zM255 428h1v1h-1zM255 416h1v1h-1zM255 404h1v1h-1zM255 391h1v1h-1zM255 379h1v1h-1zM255 367h1v1h-1zM255 354h1v1h-1zM255 342h1v1h-1zM255 330h1v1h-1zM255 318h1v1h-1zM255 305h1v1h-1zM255 293h1v1h-1zM255 281h1v1h-1zM255 269h1v1h-1zM255 256h1v1h-1zM255 244h1v1h-1zM255 232h1v1h-1zM255 220h1v1h-1zM255 207h1v1h-1zM255 195h1v1h-1zM255 183h1v1h-1zM255 170h1v1h-1zM255 158h1v1h-1zM267 723h1v1h-1zM267 710h1v1h-1zM267 698h1v1h-1zM267 686h1v1h-1zM267 673h1v1h-1zM267 661h1v1h-1zM267 649h1v1h-1zM267 637h1v1h-1zM267 624h1v1h-1zM267 612h1v1h-1zM267 600h1v1h-1zM267 588h1v1h-1zM267 575h1v1h-1zM267 563h1v1h-1zM267 551h1v1h-1zM267 538h1v1h-1zM267 526h1v1h-1zM267 514h1v1h-1zM267 502h1v1h-1zM267 489h1v1h-1zM267 477h1v1h-1zM267 465h1v1h-1zM267 453h1v1h-1zM267 440h1v1h-1zM267 428h1v1h-1zM267 416h1v1h-1zM267 404h1v1h-1zM267 391h1v1h-1zM267 379h1v1h-1zM267 367h1v1h-1zM267 354h1v1h-1zM267 342h1v1h-1zM267 330h1v1h-1zM267 318h1v1h-1zM267 305h1v1h-1zM267 293h1v1h-1zM267 281h1v1h-1zM267 269h1v1h-1zM267 256h1v1h-1zM267 244h1v1h-1zM267 232h1v1h-1zM267 220h1v1h-1zM267 207h1v1h-1zM267 195h1v1h-1zM267 183h1v1h-1zM267 170h1v1h-1zM267 158h1v1h-1zM279 723h1v1h-1zM279 710h1v1h-1zM279 698h1v1h-1zM279 686h1v1h-1zM279 673h1v1h-1zM279 661h1v1h-1zM279 649h1v1h-1zM279 637h1v1h-1zM279 624h1v1h-1zM279 612h1v1h-1zM279 600h1v1h-1zM279 588h1v1h-1zM279 575h1v1h-1zM279 563h1v1h-1zM279 551h1v1h-1zM279 538h1v1h-1zM279 526h1v1h-1zM279 514h1v1h-1zM279 502h1v1h-1zM279 489h1v1h-1zM279 477h1v1h-1zM279 465h1v1h-1zM279 453h1v1h-1zM279 440h1v1h-1zM279 428h1v1h-1zM279 416h1v1h-1zM279 404h1v1h-1zM279 391h1v1h-1zM279 379h1v1h-1zM279 367h1v1h-1zM279 354h1v1h-1zM279 342h1v1h-1zM279 330h1v1h-1zM279 318h1v1h-1zM279 305h1v1h-1zM279 293h1v1h-1zM279 281h1v1h-1zM279 269h1v1h-1zM279 256h1v1h-1zM279 244h1v1h-1zM279 232h1v1h-1zM279 220h1v1h-1zM279 207h1v1h-1zM279 195h1v1h-1zM279 183h1v1h-1zM279 170h1v1h-1zM279 158h1v1h-1zM292 723h1v1h-1zM292 710h1v1h-1zM292 698h1v1h-1zM292 686h1v1h-1zM292 673h1v1h-1zM292 661h1v1h-1zM292 649h1v1h-1zM292 637h1v1h-1zM292 624h1v1h-1zM292 612h1v1h-1zM292 600h1v1h-1zM292 588h1v1h-1zM292 575h1v1h-1zM292 563h1v1h-1zM292 551h1v1h-1zM292 538h1v1h-1zM292 526h1v1h-1zM292 514h1v1h-1zM292 502h1v1h-1zM292 489h1v1h-1zM292 477h1v1h-1zM292 465h1v1h-1zM292 453h1v1h-1zM292 440h1v1h-1zM292 428h1v1h-1zM292 416h1v1h-1zM292 404h1v1h-1zM292 391h1v1h-1zM292 379h1v1h-1zM292 367h1v1h-1zM292 354h1v1h-1zM292 342h1v1h-1zM292 330h1v1h-1zM292 318h1v1h-1zM292 305h1v1h-1zM292 293h1v1h-1zM292 281h1v1h-1zM292 269h1v1h-1zM292 256h1v1h-1zM292 244h1v1h-1zM292 232h1v1h-1zM292 220h1v1h-1zM292 207h1v1h-1zM292 195h1v1h-1zM292 183h1v1h-1zM292 170h1v1h-1zM292 158h1v1h-1zM304 723h1v1h-1zM304 710h1v1h-1zM304 698h1v1h-1zM304 686h1v1h-1zM304 673h1v1h-1zM304 661h1v1h-1zM304 649h1v1h-1zM304 637h1v1h-1zM304 624h1v1h-1zM304 612h1v1h-1zM304 600h1v1h-1zM304 588h1v1h-1zM304 575h1v1h-1zM304 563h1v1h-1zM304 551h1v1h-1zM304 538h1v1h-1zM304 526h1v1h-1zM304 514h1v1h-1zM304 502h1v1h-1zM304 489h1v1h-1zM304 477h1v1h-1zM304 465h1v1h-1zM304 453h1v1h-1zM304 440h1v1h-1zM304 428h1v1h-1zM304 416h1v1h-1zM304 404h1v1h-1zM304 391h1v1h-1zM304 379h1v1h-1zM304 367h1v1h-1zM304 354h1v1h-1zM304 342h1v1h-1zM304 330h1v1h-1zM304 318h1v1h-1zM304 305h1v1h-1zM304 293h1v1h-1zM304 281h1v1h-1zM304 269h1v1h-1zM304 256h1v1h-1zM304 244h1v1h-1zM304 232h1v1h-1zM304 220h1v1h-1zM304 207h1v1h-1zM304 195h1v1h-1zM304 183h1v1h-1zM304 170h1v1h-1zM304 158h1v1h-1zM316 723h1v1h-1zM316 710h1v1h-1zM316 698h1v1h-1zM316 686h1v1h-1zM316 673h1v1h-1zM316 661h1v1h-1zM316 649h1v1h-1zM316 637h1v1h-1zM316 624h1v1h-1zM316 612h1v1h-1zM316 600h1v1h-1zM316 588h1v1h-1zM316 575h1v1h-1zM316 563h1v1h-1zM316 551h1v1h-1zM316 538h1v1h-1zM316 526h1v1h-1zM316 514h1v1h-1zM316 502h1v1h-1zM316 489h1v1h-1zM316 477h1v1h-1zM316 465h1v1h-1zM316 453h1v1h-1zM316 440h1v1h-1zM316 428h1v1h-1zM316 416h1v1h-1zM316 404h1v1h-1zM316 391h1v1h-1zM316 379h1v1h-1zM316 367h1v1h-1zM316 354h1v1h-1zM316 342h1v1h-1zM316 330h1v1h-1zM316 318h1v1h-1zM316 305h1v1h-1zM316 293h1v1h-1zM316 281h1v1h-1zM316 269h1v1h-1zM316 256h1v1h-1zM316 244h1v1h-1zM316 232h1v1h-1zM316 220h1v1h-1zM316 207h1v1h-1zM316 195h1v1h-1zM316 183h1v1h-1zM316 170h1v1h-1zM316 158h1v1h-1zM328 723h1v1h-1zM328 710h1v1h-1zM328 698h1v1h-1zM328 686h1v1h-1zM328 673h1v1h-1zM328 661h1v1h-1zM328 649h1v1h-1zM328 637h1v1h-1zM328 624h1v1h-1zM328 612h1v1h-1zM328 600h1v1h-1zM328 588h1v1h-1zM328 575h1v1h-1zM328 563h1v1h-1zM328 551h1v1h-1zM328 538h1v1h-1zM328 526h1v1h-1zM328 514h1v1h-1zM328 502h1v1h-1zM328 489h1v1h-1zM328 477h1v1h-1zM328 465h1v1h-1zM328 453h1v1h-1zM328 440h1v1h-1zM328 428h1v1h-1zM328 416h1v1h-1zM328 404h1v1h-1zM328 391h1v1h-1zM328 379h1v1h-1zM328 367h1v1h-1zM328 354h1v1h-1zM328 342h1v1h-1zM328 330h1v1h-1zM328 318h1v1h-1zM328 305h1v1h-1zM328 293h1v1h-1zM328 281h1v1h-1zM328 269h1v1h-1zM328 256h1v1h-1zM328 244h1v1h-1zM328 232h1v1h-1zM328 220h1v1h-1zM328 207h1v1h-1zM328 195h1v1h-1zM328 183h1v1h-1zM328 170h1v1h-1zM328 158h1v1h-1zM341 723h1v1h-1zM341 710h1v1h-1zM341 698h1v1h-1zM341 686h1v1h-1zM341 673h1v1h-1zM341 661h1v1h-1zM341 649h1v1h-1zM341 637h1v1h-1zM341 624h1v1h-1zM341 612h1v1h-1zM341 600h1v1h-1zM341 588h1v1h-1zM341 575h1v1h-1zM341 563h1v1h-1zM341 551h1v1h-1zM341 538h1v1h-1zM341 526h1v1h-1zM341 514h1v1h-1zM341 502h1v1h-1zM341 489h1v1h-1zM341 477h1v1h-1zM341 465h1v1h-1zM341 453h1v1h-1zM341 440h1v1h-1zM341 428h1v1h-1zM341 416h1v1h-1zM341 404h1v1h-1zM341 391h1v1h-1zM341 379h1v1h-1zM341 367h1v1h-1zM341 354h1v1h-1zM341 342h1v1h-1zM341 330h1v1h-1zM341 318h1v1h-1zM341 305h1v1h-1zM341 293h1v1h-1zM341 281h1v1h-1zM341 269h1v1h-1zM341 256h1v1h-1zM341 244h1v1h-1zM341 232h1v1h-1zM341 220h1v1h-1zM341 207h1v1h-1zM341 195h1v1h-1zM341 183h1v1h-1zM341 170h1v1h-1zM341 158h1v1h-1zM353 723h1v1h-1zM353 710h1v1h-1zM353 698h1v1h-1zM353 686h1v1h-1zM353 673h1v1h-1zM353 661h1v1h-1zM353 649h1v1h-1zM353 637h1v1h-1zM353 624h1v1h-1zM353 612h1v1h-1zM353 600h1v1h-1zM353 588h1v1h-1zM353 575h1v1h-1zM353 563h1v1h-1zM353 551h1v1h-1zM353 538h1v1h-1zM353 526h1v1h-1zM353 514h1v1h-1zM353 502h1v1h-1zM353 489h1v1h-1zM353 477h1v1h-1zM353 465h1v1h-1zM353 453h1v1h-1zM353 440h1v1h-1zM353 428h1v1h-1zM353 416h1v1h-1zM353 404h1v1h-1zM353 391h1v1h-1zM353 379h1v1h-1zM353 367h1v1h-1zM353 354h1v1h-1zM353 342h1v1h-1zM353 330h1v1h-1zM353 318h1v1h-1zM353 305h1v1h-1zM353 293h1v1h-1zM353 281h1v1h-1zM353 269h1v1h-1zM353 256h1v1h-1zM353 244h1v1h-1zM353 232h1v1h-1zM353 220h1v1h-1zM353 207h1v1h-1zM353 195h1v1h-1zM353 183h1v1h-1zM353 170h1v1h-1zM353 158h1v1h-1zM365 723h1v1h-1zM365 710h1v1h-1zM365 698h1v1h-1zM365 686h1v1h-1zM365 673h1v1h-1zM365 661h1v1h-1zM365 649h1v1h-1zM365 637h1v1h-1zM365 624h1v1h-1zM365 612h1v1h-1zM365 600h1v1h-1zM365 588h1v1h-1zM365 575h1v1h-1zM365 563h1v1h-1zM365 551h1v1h-1zM365 538h1v1h-1zM365 526h1v1h-1zM365 514h1v1h-1zM365 502h1v1h-1zM365 489h1v1h-1zM365 477h1v1h-1zM365 465h1v1h-1zM365 453h1v1h-1zM365 440h1v1h-1zM365 428h1v1h-1zM365 416h1v1h-1zM365 404h1v1h-1zM365 391h1v1h-1zM365 379h1v1h-1zM365 367h1v1h-1zM365 354h1v1h-1zM365 342h1v1h-1zM365 330h1v1h-1zM365 318h1v1h-1zM365 305h1v1h-1zM365 293h1v1h-1zM365 281h1v1h-1zM365 269h1v1h-1zM365 256h1v1h-1zM365 244h1v1h-1zM365 232h1v1h-1zM365 220h1v1h-1zM365 207h1v1h-1zM365 195h1v1h-1zM365 183h1v1h-1zM365 170h1v1h-1zM365 158h1v1h-1zM378 723h1v1h-1zM378 710h1v1h-1zM378 698h1v1h-1zM378 686h1v1h-1zM378 673h1v1h-1zM378 661h1v1h-1zM378 649h1v1h-1zM378 637h1v1h-1zM378 624h1v1h-1zM378 612h1v1h-1zM378 600h1v1h-1zM378 588h1v1h-1zM378 575h1v1h-1zM378 563h1v1h-1zM378 551h1v1h-1zM378 538h1v1h-1zM378 526h1v1h-1zM378 514h1v1h-1zM378 502h1v1h-1zM378 489h1v1h-1zM378 477h1v1h-1zM378 465h1v1h-1zM378 453h1v1h-1zM378 440h1v1h-1zM378 428h1v1h-1zM378 416h1v1h-1zM378 404h1v1h-1zM378 391h1v1h-1zM378 379h1v1h-1zM378 367h1v1h-1zM378 354h1v1h-1zM378 342h1v1h-1zM378 330h1v1h-1zM378 318h1v1h-1zM378 305h1v1h-1zM378 293h1v1h-1zM378 281h1v1h-1zM378 269h1v1h-1zM378 256h1v1h-1zM378 244h1v1h-1zM378 232h1v1h-1zM378 220h1v1h-1zM378 207h1v1h-1zM378 195h1v1h-1zM378 183h1v1h-1zM378 170h1v1h-1zM378 158h1v1h-1zM390 723h1v1h-1zM390 710h1v1h-1zM390 698h1v1h-1zM390 686h1v1h-1zM390 673h1v1h-1zM390 661h1v1h-1zM390 649h1v1h-1zM390 637h1v1h-1zM390 624h1v1h-1zM390 612h1v1h-1zM390 600h1v1h-1zM390 588h1v1h-1zM390 575h1v1h-1zM390 563h1v1h-1zM390 551h1v1h-1zM390 538h1v1h-1zM390 526h1v1h-1zM390 514h1v1h-1zM390 502h1v1h-1zM390 489h1v1h-1zM390 477h1v1h-1zM390 465h1v1h-1zM390 453h1v1h-1zM390 440h1v1h-1zM390 428h1v1h-1zM390 416h1v1h-1zM390 404h1v1h-1zM390 391h1v1h-1zM390 379h1v1h-1zM390 367h1v1h-1zM390 354h1v1h-1zM390 342h1v1h-1zM390 330h1v1h-1zM390 318h1v1h-1zM390 305h1v1h-1zM390 293h1v1h-1zM390 281h1v1h-1zM390 269h1v1h-1zM390 256h1v1h-1zM390 244h1v1h-1zM390 232h1v1h-1zM390 220h1v1h-1zM390 207h1v1h-1zM390 195h1v1h-1zM390 183h1v1h-1zM390 170h1v1h-1zM390 158h1v1h-1zM402 723h1v1h-1zM402 710h1v1h-1zM402 698h1v1h-1zM402 686h1v1h-1zM402 673h1v1h-1zM402 661h1v1h-1zM402 649h1v1h-1zM402 637h1v1h-1zM402 624h1v1h-1zM402 612h1v1h-1zM402 600h1v1h-1zM402 588h1v1h-1zM402 575h1v1h-1zM402 563h1v1h-1zM402 551h1v1h-1zM402 538h1v1h-1zM402 526h1v1h-1zM402 514h1v1h-1zM402 502h1v1h-1zM402 489h1v1h-1zM402 477h1v1h-1zM402 465h1v1h-1zM402 453h1v1h-1zM402 440h1v1h-1zM402 428h1v1h-1zM402 416h1v1h-1zM402 404h1v1h-1zM402 391h1v1h-1zM402 379h1v1h-1zM402 367h1v1h-1zM402 354h1v1h-1zM402 342h1v1h-1zM402 330h1v1h-1zM402 318h1v1h-1zM402 305h1v1h-1zM402 293h1v1h-1zM402 281h1v1h-1zM402 269h1v1h-1zM402 256h1v1h-1zM402 244h1v1h-1zM402 232h1v1h-1zM402 220h1v1h-1zM402 207h1v1h-1zM402 195h1v1h-1zM402 183h1v1h-1zM402 170h1v1h-1zM402 158h1v1h-1zM414 723h1v1h-1zM414 710h1v1h-1zM414 698h1v1h-1zM414 686h1v1h-1zM414 673h1v1h-1zM414 661h1v1h-1zM414 649h1v1h-1zM414 637h1v1h-1zM414 624h1v1h-1zM414 612h1v1h-1zM414 600h1v1h-1zM414 588h1v1h-1zM414 575h1v1h-1zM414 563h1v1h-1zM414 551h1v1h-1zM414 538h1v1h-1zM414 526h1v1h-1zM414 514h1v1h-1zM414 502h1v1h-1zM414 489h1v1h-1zM414 477h1v1h-1zM414 465h1v1h-1zM414 453h1v1h-1zM414 440h1v1h-1zM414 428h1v1h-1zM414 416h1v1h-1zM414 404h1v1h-1zM414 391h1v1h-1zM414 379h1v1h-1zM414 367h1v1h-1zM414 354h1v1h-1zM414 342h1v1h-1zM414 330h1v1h-1zM414 318h1v1h-1zM414 305h1v1h-1zM414 293h1v1h-1zM414 281h1v1h-1zM414 269h1v1h-1zM414 256h1v1h-1zM414 244h1v1h-1zM414 232h1v1h-1zM414 220h1v1h-1zM414 207h1v1h-1zM414 195h1v1h-1zM414 183h1v1h-1zM414 170h1v1h-1zM414 158h1v1h-1zM427 723h1v1h-1zM427 710h1v1h-1zM427 698h1v1h-1zM427 686h1v1h-1zM427 673h1v1h-1zM427 661h1v1h-1zM427 649h1v1h-1zM427 637h1v1h-1zM427 624h1v1h-1zM427 612h1v1h-1zM427 600h1v1h-1zM427 588h1v1h-1zM427 575h1v1h-1zM427 563h1v1h-1zM427 551h1v1h-1zM427 538h1v1h-1zM427 526h1v1h-1zM427 514h1v1h-1zM427 502h1v1h-1zM427 489h1v1h-1zM427 477h1v1h-1zM427 465h1v1h-1zM427 453h1v1h-1zM427 440h1v1h-1zM427 428h1v1h-1zM427 416h1v1h-1zM427 404h1v1h-1zM427 391h1v1h-1zM427 379h1v1h-1zM427 367h1v1h-1zM427 354h1v1h-1zM427 342h1v1h-1zM427 330h1v1h-1zM427 318h1v1h-1zM427 305h1v1h-1zM427 293h1v1h-1zM427 281h1v1h-1zM427 269h1v1h-1zM427 256h1v1h-1zM427 244h1v1h-1zM427 232h1v1h-1zM427 220h1v1h-1zM427 207h1v1h-1zM427 195h1v1h-1zM427 183h1v1h-1zM427 170h1v1h-1zM427 158h1v1h-1zM439 723h1v1h-1zM439 710h1v1h-1zM439 698h1v1h-1zM439 686h1v1h-1zM439 673h1v1h-1zM439 661h1v1h-1zM439 649h1v1h-1zM439 637h1v1h-1zM439 624h1v1h-1zM439 612h1v1h-1zM439 600h1v1h-1zM439 588h1v1h-1zM439 575h1v1h-1zM439 563h1v1h-1zM439 551h1v1h-1zM439 538h1v1h-1zM439 526h1v1h-1zM439 514h1v1h-1zM439 502h1v1h-1zM439 489h1v1h-1zM439 477h1v1h-1zM439 465h1v1h-1zM439 453h1v1h-1zM439 440h1v1h-1zM439 428h1v1h-1zM439 416h1v1h-1zM439 404h1v1h-1zM439 391h1v1h-1zM439 379h1v1h-1zM439 367h1v1h-1zM439 354h1v1h-1zM439 342h1v1h-1zM439 330h1v1h-1zM439 318h1v1h-1zM439 305h1v1h-1zM439 293h1v1h-1zM439 281h1v1h-1zM439 269h1v1h-1zM439 256h1v1h-1zM439 244h1v1h-1zM439 232h1v1h-1zM439 220h1v1h-1zM439 207h1v1h-1zM439 195h1v1h-1zM439 183h1v1h-1zM439 170h1v1h-1zM439 158h1v1h-1zM451 723h1v1h-1zM451 710h1v1h-1zM451 698h1v1h-1zM451 686h1v1h-1zM451 673h1v1h-1zM451 661h1v1h-1zM451 649h1v1h-1zM451 637h1v1h-1zM451 624h1v1h-1zM451 612h1v1h-1zM451 600h1v1h-1zM451 588h1v1h-1zM451 575h1v1h-1zM451 563h1v1h-1zM451 551h1v1h-1zM451 538h1v1h-1zM451 526h1v1h-1zM451 514h1v1h-1zM451 502h1v1h-1zM451 489h1v1h-1zM451 477h1v1h-1zM451 465h1v1h-1zM451 453h1v1h-1zM451 440h1v1h-1zM451 428h1v1h-1zM451 416h1v1h-1zM451 404h1v1h-1zM451 391h1v1h-1zM451 379h1v1h-1zM451 367h1v1h-1zM451 354h1v1h-1zM451 342h1v1h-1zM451 330h1v1h-1zM451 318h1v1h-1zM451 305h1v1h-1zM451 293h1v1h-1zM451 281h1v1h-1zM451 269h1v1h-1zM451 256h1v1h-1zM451 244h1v1h-1zM451 232h1v1h-1zM451 220h1v1h-1zM451 207h1v1h-1zM451 195h1v1h-1zM451 183h1v1h-1zM451 170h1v1h-1zM451 158h1v1h-1zM463 723h1v1h-1zM463 710h1v1h-1zM463 698h1v1h-1zM463 686h1v1h-1zM463 673h1v1h-1zM463 661h1v1h-1zM463 649h1v1h-1zM463 637h1v1h-1zM463 624h1v1h-1zM463 612h1v1h-1zM463 600h1v1h-1zM463 588h1v1h-1zM463 575h1v1h-1zM463 563h1v1h-1zM463 551h1v1h-1zM463 538h1v1h-1zM463 526h1v1h-1zM463 514h1v1h-1zM463 502h1v1h-1zM463 489h1v1h-1zM463 477h1v1h-1zM463 465h1v1h-1zM463 453h1v1h-1zM463 440h1v1h-1zM463 428h1v1h-1zM463 416h1v1h-1zM463 404h1v1h-1zM463 391h1v1h-1zM463 379h1v1h-1zM463 367h1v1h-1zM463 354h1v1h-1zM463 342h1v1h-1zM463 330h1v1h-1zM463 318h1v1h-1zM463 305h1v1h-1zM463 293h1v1h-1zM463 281h1v1h-1zM463 269h1v1h-1zM463 256h1v1h-1zM463 244h1v1h-1zM463 232h1v1h-1zM463 220h1v1h-1zM463 207h1v1h-1zM463 195h1v1h-1zM463 183h1v1h-1zM463 170h1v1h-1zM463 158h1v1h-1zM476 723h1v1h-1zM476 710h1v1h-1zM476 698h1v1h-1zM476 686h1v1h-1zM476 673h1v1h-1zM476 661h1v1h-1zM476 649h1v1h-1zM476 637h1v1h-1zM476 624h1v1h-1zM476 612h1v1h-1zM476 600h1v1h-1zM476 588h1v1h-1zM476 575h1v1h-1zM476 563h1v1h-1zM476 551h1v1h-1zM476 538h1v1h-1zM476 526h1v1h-1zM476 514h1v1h-1zM476 502h1v1h-1zM476 489h1v1h-1zM476 477h1v1h-1zM476 465h1v1h-1zM476 453h1v1h-1zM476 440h1v1h-1zM476 428h1v1h-1zM476 416h1v1h-1zM476 404h1v1h-1zM476 391h1v1h-1zM476 379h1v1h-1zM476 367h1v1h-1zM476 354h1v1h-1zM476 342h1v1h-1zM476 330h1v1h-1zM476 318h1v1h-1zM476 305h1v1h-1zM476 293h1v1h-1zM476 281h1v1h-1zM476 269h1v1h-1zM476 256h1v1h-1zM476 244h1v1h-1zM476 232h1v1h-1zM476 220h1v1h-1zM476 207h1v1h-1zM476 195h1v1h-1zM476 183h1v1h-1zM476 170h1v1h-1zM476 158h1v1h-1zM488 723h1v1h-1zM488 710h1v1h-1zM488 698h1v1h-1zM488 686h1v1h-1zM488 673h1v1h-1zM488 661h1v1h-1zM488 649h1v1h-1zM488 637h1v1h-1zM488 624h1v1h-1zM488 612h1v1h-1zM488 600h1v1h-1zM488 588h1v1h-1zM488 575h1v1h-1zM488 563h1v1h-1zM488 551h1v1h-1zM488 538h1v1h-1zM488 526h1v1h-1zM488 514h1v1h-1zM488 502h1v1h-1zM488 489h1v1h-1zM488 477h1v1h-1zM488 465h1v1h-1zM488 453h1v1h-1zM488 440h1v1h-1zM488 428h1v1h-1zM488 416h1v1h-1zM488 404h1v1h-1zM488 391h1v1h-1zM488 379h1v1h-1zM488 367h1v1h-1zM488 354h1v1h-1zM488 342h1v1h-1zM488 330h1v1h-1zM488 318h1v1h-1zM488 305h1v1h-1zM488 293h1v1h-1zM488 281h1v1h-1zM488 269h1v1h-1zM488 256h1v1h-1zM488 244h1v1h-1zM488 232h1v1h-1zM488 220h1v1h-1zM488 207h1v1h-1zM488 195h1v1h-1zM488 183h1v1h-1zM488 170h1v1h-1zM488 158h1v1h-1zM500 723h1v1h-1zM500 710h1v1h-1zM500 698h1v1h-1zM500 686h1v1h-1zM500 673h1v1h-1zM500 661h1v1h-1zM500 649h1v1h-1zM500 637h1v1h-1zM500 624h1v1h-1zM500 612h1v1h-1zM500 600h1v1h-1zM500 588h1v1h-1zM500 575h1v1h-1zM500 563h1v1h-1zM500 551h1v1h-1zM500 538h1v1h-1zM500 526h1v1h-1zM500 514h1v1h-1zM500 502h1v1h-1zM500 489h1v1h-1zM500 477h1v1h-1zM500 465h1v1h-1zM500 453h1v1h-1zM500 440h1v1h-1zM500 428h1v1h-1zM500 416h1v1h-1zM500 404h1v1h-1zM500 391h1v1h-1zM500 379h1v1h-1zM500 367h1v1h-1zM500 354h1v1h-1zM500 342h1v1h-1zM500 330h1v1h-1zM500 318h1v1h-1zM500 305h1v1h-1zM500 293h1v1h-1zM500 281h1v1h-1zM500 269h1v1h-1zM500 256h1v1h-1zM500 244h1v1h-1zM500 232h1v1h-1zM500 220h1v1h-1zM500 207h1v1h-1zM500 195h1v1h-1zM500 183h1v1h-1zM500 170h1v1h-1zM500 158h1v1h-1zM513 723h1v1h-1zM513 710h1v1h-1zM513 698h1v1h-1zM513 686h1v1h-1zM513 673h1v1h-1zM513 661h1v1h-1zM513 649h1v1h-1zM513 637h1v1h-1zM513 624h1v1h-1zM513 612h1v1h-1zM513 600h1v1h-1zM513 588h1v1h-1zM513 575h1v1h-1zM513 563h1v1h-1zM513 551h1v1h-1zM513 538h1v1h-1zM513 526h1v1h-1zM513 514h1v1h-1zM513 502h1v1h-1zM513 489h1v1h-1zM513 477h1v1h-1zM513 465h1v1h-1zM513 453h1v1h-1zM513 440h1v1h-1zM513 428h1v1h-1zM513 416h1v1h-1zM513 404h1v1h-1zM513 391h1v1h-1zM513 379h1v1h-1zM513 367h1v1h-1zM513 354h1v1h-1zM513 342h1v1h-1zM513 330h1v1h-1zM513 318h1v1h-1zM513 305h1v1h-1zM513 293h1v1h-1zM513 281h1v1h-1zM513 269h1v1h-1zM513 256h1v1h-1zM513 244h1v1h-1zM513 232h1v1h-1zM513 220h1v1h-1zM513 207h1v1h-1zM513 195h1v1h-1zM513 183h1v1h-1zM513 170h1v1h-1zM513 158h1v1h-1zM525 723h1v1h-1zM525 710h1v1h-1zM525 698h1v1h-1zM525 686h1v1h-1zM525 673h1v1h-1zM525 661h1v1h-1zM525 649h1v1h-1zM525 637h1v1h-1zM525 624h1v1h-1zM525 612h1v1h-1zM525 600h1v1h-1zM525 588h1v1h-1zM525 575h1v1h-1zM525 563h1v1h-1zM525 551h1v1h-1zM525 538h1v1h-1zM525 526h1v1h-1zM525 514h1v1h-1zM525 502h1v1h-1zM525 489h1v1h-1zM525 477h1v1h-1zM525 465h1v1h-1zM525 453h1v1h-1zM525 440h1v1h-1zM525 428h1v1h-1zM525 416h1v1h-1zM525 404h1v1h-1zM525 391h1v1h-1zM525 379h1v1h-1zM525 367h1v1h-1zM525 354h1v1h-1zM525 342h1v1h-1zM525 330h1v1h-1zM525 318h1v1h-1zM525 305h1v1h-1zM525 293h1v1h-1zM525 281h1v1h-1zM525 269h1v1h-1zM525 256h1v1h-1zM525 244h1v1h-1zM525 232h1v1h-1zM525 220h1v1h-1zM525 207h1v1h-1zM525 195h1v1h-1zM525 183h1v1h-1zM525 170h1v1h-1zM525 158h1v1h-1zM537 723h1v1h-1zM537 710h1v1h-1zM537 698h1v1h-1zM537 686h1v1h-1zM537 673h1v1h-1zM537 661h1v1h-1zM537 649h1v1h-1zM537 637h1v1h-1zM537 624h1v1h-1zM537 612h1v1h-1zM537 600h1v1h-1zM537 588h1v1h-1zM537 575h1v1h-1zM537 563h1v1h-1zM537 551h1v1h-1zM537 538h1v1h-1zM537 526h1v1h-1zM537 514h1v1h-1zM537 502h1v1h-1zM537 489h1v1h-1zM537 477h1v1h-1zM537 465h1v1h-1zM537 453h1v1h-1zM537 440h1v1h-1zM537 428h1v1h-1zM537 416h1v1h-1zM537 404h1v1h-1zM537 391h1v1h-1zM537 379h1v1h-1zM537 367h1v1h-1zM537 354h1v1h-1zM537 342h1v1h-1zM537 330h1v1h-1zM537 318h1v1h-1zM537 305h1v1h-1zM537 293h1v1h-1zM537 281h1v1h-1zM537 269h1v1h-1zM537 256h1v1h-1zM537 244h1v1h-1zM537 232h1v1h-1zM537 220h1v1h-1zM537 207h1v1h-1zM537 195h1v1h-1zM537 183h1v1h-1zM537 170h1v1h-1zM537 158h1v1h-1zM549 723h1v1h-1zM549 710h1v1h-1zM549 698h1v1h-1zM549 686h1v1h-1zM549 673h1v1h-1zM549 661h1v1h-1zM549 649h1v1h-1zM549 637h1v1h-1zM549 624h1v1h-1zM549 612h1v1h-1zM549 600h1v1h-1zM549 588h1v1h-1zM549 575h1v1h-1zM549 563h1v1h-1zM549 551h1v1h-1zM549 538h1v1h-1zM549 526h1v1h-1zM549 514h1v1h-1zM549 502h1v1h-1zM549 489h1v1h-1zM549 477h1v1h-1zM549 465h1v1h-1zM549 453h1v1h-1zM549 440h1v1h-1zM549 428h1v1h-1zM549 416h1v1h-1zM549 404h1v1h-1zM549 391h1v1h-1zM549 379h1v1h-1zM549 367h1v1h-1zM549 354h1v1h-1zM549 342h1v1h-1zM549 330h1v1h-1zM549 318h1v1h-1zM549 305h1v1h-1zM549 293h1v1h-1zM549 281h1v1h-1zM549 269h1v1h-1zM549 256h1v1h-1zM549 244h1v1h-1zM549 232h1v1h-1zM549 220h1v1h-1zM549 207h1v1h-1zM549 195h1v1h-1zM549 183h1v1h-1zM549 170h1v1h-1zM549 158h1v1h-1zM562 723h1v1h-1zM562 710h1v1h-1zM562 698h1v1h-1zM562 686h1v1h-1zM562 673h1v1h-1zM562 661h1v1h-1zM562 649h1v1h-1zM562 637h1v1h-1zM562 624h1v1h-1zM562 612h1v1h-1zM562 600h1v1h-1zM562 588h1v1h-1zM562 575h1v1h-1zM562 563h1v1h-1zM562 551h1v1h-1zM562 538h1v1h-1zM562 526h1v1h-1zM562 514h1v1h-1zM562 502h1v1h-1zM562 489h1v1h-1zM562 477h1v1h-1zM562 465h1v1h-1zM562 453h1v1h-1zM562 440h1v1h-1zM562 428h1v1h-1zM562 416h1v1h-1zM562 404h1v1h-1zM562 391h1v1h-1zM562 379h1v1h-1zM562 367h1v1h-1zM562 354h1v1h-1zM562 342h1v1h-1zM562 330h1v1h-1zM562 318h1v1h-1zM562 305h1v1h-1zM562 293h1v1h-1zM562 281h1v1h-1zM562 269h1v1h-1zM562 256h1v1h-1zM562 244h1v1h-1zM562 232h1v1h-1zM562 220h1v1h-1zM562 207h1v1h-1zM562 195h1v1h-1zM562 183h1v1h-1zM562 170h1v1h-1zM562 158h1v1h-1zM574 723h1v1h-1zM574 710h1v1h-1zM574 698h1v1h-1zM574 686h1v1h-1zM574 673h1v1h-1zM574 661h1v1h-1zM574 649h1v1h-1zM574 637h1v1h-1zM574 624h1v1h-1zM574 612h1v1h-1zM574 600h1v1h-1zM574 588h1v1h-1zM574 575h1v1h-1zM574 563h1v1h-1zM574 551h1v1h-1zM574 538h1v1h-1zM574 526h1v1h-1zM574 514h1v1h-1zM574 502h1v1h-1zM574 489h1v1h-1zM574 477h1v1h-1zM574 465h1v1h-1zM574 453h1v1h-1zM574 440h1v1h-1zM574 428h1v1h-1zM574 416h1v1h-1zM574 404h1v1h-1zM574 391h1v1h-1zM574 379h1v1h-1zM574 367h1v1h-1zM574 354h1v1h-1zM574 342h1v1h-1zM574 330h1v1h-1zM574 318h1v1h-1zM574 305h1v1h-1zM574 293h1v1h-1zM574 281h1v1h-1zM574 269h1v1h-1zM574 256h1v1h-1zM574 244h1v1h-1zM574 232h1v1h-1zM574 220h1v1h-1zM574 207h1v1h-1zM574 195h1v1h-1zM574 183h1v1h-1zM574 170h1v1h-1zM574 158h1v1h-1zM586 723h1v1h-1zM586 710h1v1h-1zM586 698h1v1h-1zM586 686h1v1h-1zM586 673h1v1h-1zM586 661h1v1h-1zM586 649h1v1h-1zM586 637h1v1h-1zM586 624h1v1h-1zM586 612h1v1h-1zM586 600h1v1h-1zM586 588h1v1h-1zM586 575h1v1h-1zM586 563h1v1h-1zM586 551h1v1h-1zM586 538h1v1h-1zM586 526h1v1h-1zM586 514h1v1h-1zM586 502h1v1h-1zM586 489h1v1h-1zM586 477h1v1h-1zM586 465h1v1h-1zM586 453h1v1h-1zM586 440h1v1h-1zM586 428h1v1h-1zM586 416h1v1h-1zM586 404h1v1h-1zM586 391h1v1h-1zM586 379h1v1h-1zM586 367h1v1h-1zM586 354h1v1h-1zM586 342h1v1h-1zM586 330h1v1h-1zM586 318h1v1h-1zM586 305h1v1h-1zM586 293h1v1h-1zM586 281h1v1h-1zM586 269h1v1h-1zM586 256h1v1h-1zM586 244h1v1h-1zM586 232h1v1h-1zM586 220h1v1h-1zM586 207h1v1h-1zM586 195h1v1h-1zM586 183h1v1h-1zM586 170h1v1h-1zM586 158h1v1h-1zM598 723h1v1h-1zM598 710h1v1h-1zM598 698h1v1h-1zM598 686h1v1h-1zM598 673h1v1h-1zM598 661h1v1h-1zM598 649h1v1h-1zM598 637h1v1h-1zM598 624h1v1h-1zM598 612h1v1h-1zM598 600h1v1h-1zM598 588h1v1h-1zM598 575h1v1h-1zM598 563h1v1h-1zM598 551h1v1h-1zM598 538h1v1h-1zM598 526h1v1h-1zM598 514h1v1h-1zM598 502h1v1h-1zM598 489h1v1h-1zM598 477h1v1h-1zM598 465h1v1h-1zM598 453h1v1h-1zM598 440h1v1h-1zM598 428h1v1h-1zM598 416h1v1h-1zM598 404h1v1h-1zM598 391h1v1h-1zM598 379h1v1h-1zM598 367h1v1h-1zM598 354h1v1h-1zM598 342h1v1h-1zM598 330h1v1h-1zM598 318h1v1h-1zM598 305h1v1h-1zM598 293h1v1h-1zM598 281h1v1h-1zM598 269h1v1h-1zM598 256h1v1h-1zM598 244h1v1h-1zM598 232h1v1h-1zM598 220h1v1h-1zM598 207h1v1h-1zM598 195h1v1h-1zM598 183h1v1h-1zM598 170h1v1h-1zM598 158h1v1h-1zM611 723h1v1h-1zM611 710h1v1h-1zM611 698h1v1h-1zM611 686h1v1h-1zM611 673h1v1h-1zM611 661h1v1h-1zM611 649h1v1h-1zM611 637h1v1h-1zM611 624h1v1h-1zM611 612h1v1h-1zM611 600h1v1h-1zM611 588h1v1h-1zM611 575h1v1h-1zM611 563h1v1h-1zM611 551h1v1h-1zM611 538h1v1h-1zM611 526h1v1h-1zM611 514h1v1h-1zM611 502h1v1h-1zM611 489h1v1h-1zM611 477h1v1h-1zM611 465h1v1h-1zM611 453h1v1h-1zM611 440h1v1h-1zM611 428h1v1h-1zM611 416h1v1h-1zM611 404h1v1h-1zM611 391h1v1h-1zM611 379h1v1h-1zM611 367h1v1h-1zM611 354h1v1h-1zM611 342h1v1h-1zM611 330h1v1h-1zM611 318h1v1h-1zM611 305h1v1h-1zM611 293h1v1h-1zM611 281h1v1h-1zM611 269h1v1h-1zM611 256h1v1h-1zM611 244h1v1h-1zM611 232h1v1h-1zM611 220h1v1h-1zM611 207h1v1h-1zM611 195h1v1h-1zM611 183h1v1h-1zM611 170h1v1h-1zM611 158h1v1h-1zM623 723h1v1h-1zM623 710h1v1h-1zM623 698h1v1h-1zM623 686h1v1h-1zM623 673h1v1h-1zM623 661h1v1h-1zM623 649h1v1h-1zM623 637h1v1h-1zM623 624h1v1h-1zM623 612h1v1h-1zM623 600h1v1h-1zM623 588h1v1h-1zM623 575h1v1h-1zM623 563h1v1h-1zM623 551h1v1h-1zM623 538h1v1h-1zM623 526h1v1h-1zM623 514h1v1h-1zM623 502h1v1h-1zM623 489h1v1h-1zM623 477h1v1h-1zM623 465h1v1h-1zM623 453h1v1h-1zM623 440h1v1h-1zM623 428h1v1h-1zM623 416h1v1h-1zM623 404h1v1h-1zM623 391h1v1h-1zM623 379h1v1h-1zM623 367h1v1h-1zM623 354h1v1h-1zM623 342h1v1h-1zM623 330h1v1h-1zM623 318h1v1h-1zM623 305h1v1h-1zM623 293h1v1h-1zM623 281h1v1h-1zM623 269h1v1h-1zM623 256h1v1h-1zM623 244h1v1h-1zM623 232h1v1h-1zM623 220h1v1h-1zM623 207h1v1h-1zM623 195h1v1h-1zM623 183h1v1h-1zM623 170h1v1h-1zM623 158h1v1h-1zM635 723h1v1h-1zM635 710h1v1h-1zM635 698h1v1h-1zM635 686h1v1h-1zM635 673h1v1h-1zM635 661h1v1h-1zM635 649h1v1h-1zM635 637h1v1h-1zM635 624h1v1h-1zM635 612h1v1h-1zM635 600h1v1h-1zM635 588h1v1h-1zM635 575h1v1h-1zM635 563h1v1h-1zM635 551h1v1h-1zM635 538h1v1h-1zM635 526h1v1h-1zM635 514h1v1h-1zM635 502h1v1h-1zM635 489h1v1h-1zM635 477h1v1h-1zM635 465h1v1h-1zM635 453h1v1h-1zM635 440h1v1h-1zM635 428h1v1h-1zM635 416h1v1h-1zM635 404h1v1h-1zM635 391h1v1h-1zM635 379h1v1h-1zM635 367h1v1h-1zM635 354h1v1h-1zM635 342h1v1h-1zM635 330h1v1h-1zM635 318h1v1h-1zM635 305h1v1h-1zM635 293h1v1h-1zM635 281h1v1h-1zM635 269h1v1h-1zM635 256h1v1h-1zM635 244h1v1h-1zM635 232h1v1h-1zM635 220h1v1h-1zM635 207h1v1h-1zM635 195h1v1h-1zM635 183h1v1h-1zM635 170h1v1h-1zM635 158h1v1h-1zM647 723h1v1h-1zM647 710h1v1h-1zM647 698h1v1h-1zM647 686h1v1h-1zM647 673h1v1h-1zM647 661h1v1h-1zM647 649h1v1h-1zM647 637h1v1h-1zM647 624h1v1h-1zM647 612h1v1h-1zM647 600h1v1h-1zM647 588h1v1h-1zM647 575h1v1h-1zM647 563h1v1h-1zM647 551h1v1h-1zM647 538h1v1h-1zM647 526h1v1h-1zM647 514h1v1h-1zM647 502h1v1h-1zM647 489h1v1h-1zM647 477h1v1h-1zM647 465h1v1h-1zM647 453h1v1h-1zM647 440h1v1h-1zM647 428h1v1h-1zM647 416h1v1h-1zM647 404h1v1h-1zM647 391h1v1h-1zM647 379h1v1h-1zM647 367h1v1h-1zM647 354h1v1h-1zM647 342h1v1h-1zM647 330h1v1h-1zM647 318h1v1h-1zM647 305h1v1h-1zM647 293h1v1h-1zM647 281h1v1h-1zM647 269h1v1h-1zM647 256h1v1h-1zM647 244h1v1h-1zM647 232h1v1h-1zM647 220h1v1h-1zM647 207h1v1h-1zM647 195h1v1h-1zM647 183h1v1h-1zM647 170h1v1h-1zM647 158h1v1h-1zM660 723h1v1h-1zM660 710h1v1h-1zM660 698h1v1h-1zM660 686h1v1h-1zM660 673h1v1h-1zM660 661h1v1h-1zM660 649h1v1h-1zM660 637h1v1h-1zM660 624h1v1h-1zM660 612h1v1h-1zM660 600h1v1h-1zM660 588h1v1h-1zM660 575h1v1h-1zM660 563h1v1h-1zM660 551h1v1h-1zM660 538h1v1h-1zM660 526h1v1h-1zM660 514h1v1h-1zM660 502h1v1h-1zM660 489h1v1h-1zM660 477h1v1h-1zM660 465h1v1h-1zM660 453h1v1h-1zM660 440h1v1h-1zM660 428h1v1h-1zM660 416h1v1h-1zM660 404h1v1h-1zM660 391h1v1h-1zM660 379h1v1h-1zM660 367h1v1h-1zM660 354h1v1h-1zM660 342h1v1h-1zM660 330h1v1h-1zM660 318h1v1h-1zM660 305h1v1h-1zM660 293h1v1h-1zM660 281h1v1h-1zM660 269h1v1h-1zM660 256h1v1h-1zM660 244h1v1h-1zM660 232h1v1h-1zM660 220h1v1h-1zM660 207h1v1h-1zM660 195h1v1h-1zM660 183h1v1h-1zM660 170h1v1h-1zM660 158h1v1h-1zM672 723h1v1h-1zM672 710h1v1h-1zM672 698h1v1h-1zM672 686h1v1h-1zM672 673h1v1h-1zM672 661h1v1h-1zM672 649h1v1h-1zM672 637h1v1h-1zM672 624h1v1h-1zM672 612h1v1h-1zM672 600h1v1h-1zM672 588h1v1h-1zM672 575h1v1h-1zM672 563h1v1h-1zM672 551h1v1h-1zM672 538h1v1h-1zM672 526h1v1h-1zM672 514h1v1h-1zM672 502h1v1h-1zM672 489h1v1h-1zM672 477h1v1h-1zM672 465h1v1h-1zM672 453h1v1h-1zM672 440h1v1h-1zM672 428h1v1h-1zM672 416h1v1h-1zM672 404h1v1h-1zM672 391h1v1h-1zM672 379h1v1h-1zM672 367h1v1h-1zM672 354h1v1h-1zM672 342h1v1h-1zM672 330h1v1h-1zM672 318h1v1h-1zM672 305h1v1h-1zM672 293h1v1h-1zM672 281h1v1h-1zM672 269h1v1h-1zM672 256h1v1h-1zM672 244h1v1h-1zM672 232h1v1h-1zM672 220h1v1h-1zM672 207h1v1h-1zM672 195h1v1h-1zM672 183h1v1h-1zM672 170h1v1h-1zM672 158h1v1h-1zM684 723h1v1h-1zM684 710h1v1h-1zM684 698h1v1h-1zM684 686h1v1h-1zM684 673h1v1h-1zM684 661h1v1h-1zM684 649h1v1h-1zM684 637h1v1h-1zM684 624h1v1h-1zM684 612h1v1h-1zM684 600h1v1h-1zM684 588h1v1h-1zM684 575h1v1h-1zM684 563h1v1h-1zM684 551h1v1h-1zM684 538h1v1h-1zM684 526h1v1h-1zM684 514h1v1h-1zM684 502h1v1h-1zM684 489h1v1h-1zM684 477h1v1h-1zM684 465h1v1h-1zM684 453h1v1h-1zM684 440h1v1h-1zM684 428h1v1h-1zM684 416h1v1h-1zM684 404h1v1h-1zM684 391h1v1h-1zM684 379h1v1h-1zM684 367h1v1h-1zM684 354h1v1h-1zM684 342h1v1h-1zM684 330h1v1h-1zM684 318h1v1h-1zM684 305h1v1h-1zM684 293h1v1h-1zM684 281h1v1h-1zM684 269h1v1h-1zM684 256h1v1h-1zM684 244h1v1h-1zM684 232h1v1h-1zM684 220h1v1h-1zM684 207h1v1h-1zM684 195h1v1h-1zM684 183h1v1h-1zM684 170h1v1h-1zM684 158h1v1h-1zM697 723h1v1h-1zM697 710h1v1h-1zM697 698h1v1h-1zM697 686h1v1h-1zM697 673h1v1h-1zM697 661h1v1h-1zM697 649h1v1h-1zM697 637h1v1h-1zM697 624h1v1h-1zM697 612h1v1h-1zM697 600h1v1h-1zM697 588h1v1h-1zM697 575h1v1h-1zM697 563h1v1h-1zM697 551h1v1h-1zM697 538h1v1h-1zM697 526h1v1h-1zM697 514h1v1h-1zM697 502h1v1h-1zM697 489h1v1h-1zM697 477h1v1h-1zM697 465h1v1h-1zM697 453h1v1h-1zM697 440h1v1h-1zM697 428h1v1h-1zM697 416h1v1h-1zM697 404h1v1h-1zM697 391h1v1h-1zM697 379h1v1h-1zM697 367h1v1h-1zM697 354h1v1h-1zM697 342h1v1h-1zM697 330h1v1h-1zM697 318h1v1h-1zM697 305h1v1h-1zM697 293h1v1h-1zM697 281h1v1h-1zM697 269h1v1h-1zM697 256h1v1h-1zM697 244h1v1h-1zM697 232h1v1h-1zM697 220h1v1h-1zM697 207h1v1h-1zM697 195h1v1h-1zM697 183h1v1h-1zM697 170h1v1h-1zM697 158h1v1h-1zM709 723h1v1h-1zM709 710h1v1h-1zM709 698h1v1h-1zM709 686h1v1h-1zM709 673h1v1h-1zM709 661h1v1h-1zM709 649h1v1h-1zM709 637h1v1h-1zM709 624h1v1h-1zM709 612h1v1h-1zM709 600h1v1h-1zM709 588h1v1h-1zM709 575h1v1h-1zM709 563h1v1h-1zM709 551h1v1h-1zM709 538h1v1h-1zM709 526h1v1h-1zM709 514h1v1h-1zM709 502h1v1h-1zM709 489h1v1h-1zM709 477h1v1h-1zM709 465h1v1h-1zM709 453h1v1h-1zM709 440h1v1h-1zM709 428h1v1h-1zM709 416h1v1h-1zM709 404h1v1h-1zM709 391h1v1h-1zM709 379h1v1h-1zM709 367h1v1h-1zM709 354h1v1h-1zM709 342h1v1h-1zM709 330h1v1h-1zM709 318h1v1h-1zM709 305h1v1h-1zM709 293h1v1h-1zM709 281h1v1h-1zM709 269h1v1h-1zM709 256h1v1h-1zM709 244h1v1h-1zM709 232h1v1h-1zM709 220h1v1h-1zM709 207h1v1h-1zM709 195h1v1h-1zM709 183h1v1h-1zM709 170h1v1h-1zM709 158h1v1h-1zM721 723h1v1h-1zM721 710h1v1h-1zM721 698h1v1h-1zM721 686h1v1h-1zM721 673h1v1h-1zM721 661h1v1h-1zM721 649h1v1h-1zM721 637h1v1h-1zM721 624h1v1h-1zM721 612h1v1h-1zM721 600h1v1h-1zM721 588h1v1h-1zM721 575h1v1h-1zM721 563h1v1h-1zM721 551h1v1h-1zM721 538h1v1h-1zM721 526h1v1h-1zM721 514h1v1h-1zM721 502h1v1h-1zM721 489h1v1h-1zM721 477h1v1h-1zM721 465h1v1h-1zM721 453h1v1h-1zM721 440h1v1h-1zM721 428h1v1h-1zM721 416h1v1h-1zM721 404h1v1h-1zM721 391h1v1h-1zM721 379h1v1h-1zM721 367h1v1h-1zM721 354h1v1h-1zM721 342h1v1h-1zM721 330h1v1h-1zM721 318h1v1h-1zM721 305h1v1h-1zM721 293h1v1h-1zM721 281h1v1h-1zM721 269h1v1h-1zM721 256h1v1h-1zM721 244h1v1h-1zM721 232h1v1h-1zM721 220h1v1h-1zM721 207h1v1h-1zM721 195h1v1h-1zM721 183h1v1h-1zM721 170h1v1h-1zM721 158h1v1h-1zM733 723h1v1h-1zM733 710h1v1h-1zM733 698h1v1h-1zM733 686h1v1h-1zM733 673h1v1h-1zM733 661h1v1h-1zM733 649h1v1h-1zM733 637h1v1h-1zM733 624h1v1h-1zM733 612h1v1h-1zM733 600h1v1h-1zM733 588h1v1h-1zM733 575h1v1h-1zM733 563h1v1h-1zM733 551h1v1h-1zM733 538h1v1h-1zM733 526h1v1h-1zM733 514h1v1h-1zM733 502h1v1h-1zM733 489h1v1h-1zM733 477h1v1h-1zM733 465h1v1h-1zM733 453h1v1h-1zM733 440h1v1h-1zM733 428h1v1h-1zM733 416h1v1h-1zM733 404h1v1h-1zM733 391h1v1h-1zM733 379h1v1h-1zM733 367h1v1h-1zM733 354h1v1h-1zM733 342h1v1h-1zM733 330h1v1h-1zM733 318h1v1h-1zM733 305h1v1h-1zM733 293h1v1h-1zM733 281h1v1h-1zM733 269h1v1h-1zM733 256h1v1h-1zM733 244h1v1h-1zM733 232h1v1h-1zM733 220h1v1h-1zM733 207h1v1h-1zM733 195h1v1h-1zM733 183h1v1h-1zM733 170h1v1h-1zM733 158h1v1h-1zM746 723h1v1h-1zM746 710h1v1h-1zM746 698h1v1h-1zM746 686h1v1h-1zM746 673h1v1h-1zM746 661h1v1h-1zM746 649h1v1h-1zM746 637h1v1h-1zM746 624h1v1h-1zM746 612h1v1h-1zM746 600h1v1h-1zM746 588h1v1h-1zM746 575h1v1h-1zM746 563h1v1h-1zM746 551h1v1h-1zM746 538h1v1h-1zM746 526h1v1h-1zM746 514h1v1h-1zM746 502h1v1h-1zM746 489h1v1h-1zM746 477h1v1h-1zM746 465h1v1h-1zM746 453h1v1h-1zM746 440h1v1h-1zM746 428h1v1h-1zM746 416h1v1h-1zM746 404h1v1h-1zM746 391h1v1h-1zM746 379h1v1h-1zM746 367h1v1h-1zM746 354h1v1h-1zM746 342h1v1h-1zM746 330h1v1h-1zM746 318h1v1h-1zM746 305h1v1h-1zM746 293h1v1h-1zM746 281h1v1h-1zM746 269h1v1h-1zM746 256h1v1h-1zM746 244h1v1h-1zM746 232h1v1h-1zM746 220h1v1h-1zM746 207h1v1h-1zM746 195h1v1h-1zM746 183h1v1h-1zM746 170h1v1h-1zM746 158h1v1h-1zM758 723h1v1h-1zM758 710h1v1h-1zM758 698h1v1h-1zM758 686h1v1h-1zM758 673h1v1h-1zM758 661h1v1h-1zM758 649h1v1h-1zM758 637h1v1h-1zM758 624h1v1h-1zM758 612h1v1h-1zM758 600h1v1h-1zM758 588h1v1h-1zM758 575h1v1h-1zM758 563h1v1h-1zM758 551h1v1h-1zM758 538h1v1h-1zM758 526h1v1h-1zM758 514h1v1h-1zM758 502h1v1h-1zM758 489h1v1h-1zM758 477h1v1h-1zM758 465h1v1h-1zM758 453h1v1h-1zM758 440h1v1h-1zM758 428h1v1h-1zM758 416h1v1h-1zM758 404h1v1h-1zM758 391h1v1h-1zM758 379h1v1h-1zM758 367h1v1h-1zM758 354h1v1h-1zM758 342h1v1h-1zM758 330h1v1h-1zM758 318h1v1h-1zM758 305h1v1h-1zM758 293h1v1h-1zM758 281h1v1h-1zM758 269h1v1h-1zM758 256h1v1h-1zM758 244h1v1h-1zM758 232h1v1h-1zM758 220h1v1h-1zM758 207h1v1h-1zM758 195h1v1h-1zM758 183h1v1h-1zM758 170h1v1h-1zM758 158h1v1h-1zM770 723h1v1h-1zM770 710h1v1h-1zM770 698h1v1h-1zM770 686h1v1h-1zM770 673h1v1h-1zM770 661h1v1h-1zM770 649h1v1h-1zM770 637h1v1h-1zM770 624h1v1h-1zM770 612h1v1h-1zM770 600h1v1h-1zM770 588h1v1h-1zM770 575h1v1h-1zM770 563h1v1h-1zM770 551h1v1h-1zM770 538h1v1h-1zM770 526h1v1h-1zM770 514h1v1h-1zM770 502h1v1h-1zM770 489h1v1h-1zM770 477h1v1h-1zM770 465h1v1h-1zM770 453h1v1h-1zM770 440h1v1h-1zM770 428h1v1h-1zM770 416h1v1h-1zM770 404h1v1h-1zM770 391h1v1h-1zM770 379h1v1h-1zM770 367h1v1h-1zM770 354h1v1h-1zM770 342h1v1h-1zM770 330h1v1h-1zM770 318h1v1h-1zM770 305h1v1h-1zM770 293h1v1h-1zM770 281h1v1h-1zM770 269h1v1h-1zM770 256h1v1h-1zM770 244h1v1h-1zM770 232h1v1h-1zM770 220h1v1h-1zM770 207h1v1h-1zM770 195h1v1h-1zM770 183h1v1h-1zM770 170h1v1h-1zM770 158h1v1h-1zM782 723h1v1h-1zM782 710h1v1h-1zM782 698h1v1h-1zM782 686h1v1h-1zM782 673h1v1h-1zM782 661h1v1h-1zM782 649h1v1h-1zM782 637h1v1h-1zM782 624h1v1h-1zM782 612h1v1h-1zM782 600h1v1h-1zM782 588h1v1h-1zM782 575h1v1h-1zM782 563h1v1h-1zM782 551h1v1h-1zM782 538h1v1h-1zM782 526h1v1h-1zM782 514h1v1h-1zM782 502h1v1h-1zM782 489h1v1h-1zM782 477h1v1h-1zM782 465h1v1h-1zM782 453h1v1h-1zM782 440h1v1h-1zM782 428h1v1h-1zM782 416h1v1h-1zM782 404h1v1h-1zM782 391h1v1h-1zM782 379h1v1h-1zM782 367h1v1h-1zM782 354h1v1h-1zM782 342h1v1h-1zM782 330h1v1h-1zM782 318h1v1h-1zM782 305h1v1h-1zM782 293h1v1h-1zM782 281h1v1h-1zM782 269h1v1h-1zM782 256h1v1h-1zM782 244h1v1h-1zM782 232h1v1h-1zM782 220h1v1h-1zM782 207h1v1h-1zM782 195h1v1h-1zM782 183h1v1h-1zM782 170h1v1h-1zM782 158h1v1h-1zM795 723h1v1h-1zM795 710h1v1h-1zM795 698h1v1h-1zM795 686h1v1h-1zM795 673h1v1h-1zM795 661h1v1h-1zM795 649h1v1h-1zM795 637h1v1h-1zM795 624h1v1h-1zM795 612h1v1h-1zM795 600h1v1h-1zM795 588h1v1h-1zM795 575h1v1h-1zM795 563h1v1h-1zM795 551h1v1h-1zM795 538h1v1h-1zM795 526h1v1h-1zM795 514h1v1h-1zM795 502h1v1h-1zM795 489h1v1h-1zM795 477h1v1h-1zM795 465h1v1h-1zM795 453h1v1h-1zM795 440h1v1h-1zM795 428h1v1h-1zM795 416h1v1h-1zM795 404h1v1h-1zM795 391h1v1h-1zM795 379h1v1h-1zM795 367h1v1h-1zM795 354h1v1h-1zM795 342h1v1h-1zM795 330h1v1h-1zM795 318h1v1h-1zM795 305h1v1h-1zM795 293h1v1h-1zM795 281h1v1h-1zM795 269h1v1h-1zM795 256h1v1h-1zM795 244h1v1h-1zM795 232h1v1h-1zM795 220h1v1h-1zM795 207h1v1h-1zM795 195h1v1h-1zM795 183h1v1h-1zM795 170h1v1h-1zM795 158h1v1h-1zM807 723h1v1h-1zM807 710h1v1h-1zM807 698h1v1h-1zM807 686h1v1h-1zM807 673h1v1h-1zM807 661h1v1h-1zM807 649h1v1h-1zM807 637h1v1h-1zM807 624h1v1h-1zM807 612h1v1h-1zM807 600h1v1h-1zM807 588h1v1h-1zM807 575h1v1h-1zM807 563h1v1h-1zM807 551h1v1h-1zM807 538h1v1h-1zM807 526h1v1h-1zM807 514h1v1h-1zM807 502h1v1h-1zM807 489h1v1h-1zM807 477h1v1h-1zM807 465h1v1h-1zM807 453h1v1h-1zM807 440h1v1h-1zM807 428h1v1h-1zM807 416h1v1h-1zM807 404h1v1h-1zM807 391h1v1h-1zM807 379h1v1h-1zM807 367h1v1h-1zM807 354h1v1h-1zM807 342h1v1h-1zM807 330h1v1h-1zM807 318h1v1h-1zM807 305h1v1h-1zM807 293h1v1h-1zM807 281h1v1h-1zM807 269h1v1h-1zM807 256h1v1h-1zM807 244h1v1h-1zM807 232h1v1h-1zM807 220h1v1h-1zM807 207h1v1h-1zM807 195h1v1h-1zM807 183h1v1h-1zM807 170h1v1h-1zM807 158h1v1h-1zM819 723h1v1h-1zM819 710h1v1h-1zM819 698h1v1h-1zM819 686h1v1h-1zM819 673h1v1h-1zM819 661h1v1h-1zM819 649h1v1h-1zM819 637h1v1h-1zM819 624h1v1h-1zM819 612h1v1h-1zM819 600h1v1h-1zM819 588h1v1h-1zM819 575h1v1h-1zM819 563h1v1h-1zM819 551h1v1h-1zM819 538h1v1h-1zM819 526h1v1h-1zM819 514h1v1h-1zM819 502h1v1h-1zM819 489h1v1h-1zM819 477h1v1h-1zM819 465h1v1h-1zM819 453h1v1h-1zM819 440h1v1h-1zM819 428h1v1h-1zM819 416h1v1h-1zM819 404h1v1h-1zM819 391h1v1h-1zM819 379h1v1h-1zM819 367h1v1h-1zM819 354h1v1h-1zM819 342h1v1h-1zM819 330h1v1h-1zM819 318h1v1h-1zM819 305h1v1h-1zM819 293h1v1h-1zM819 281h1v1h-1zM819 269h1v1h-1zM819 256h1v1h-1zM819 244h1v1h-1zM819 232h1v1h-1zM819 220h1v1h-1zM819 207h1v1h-1zM819 195h1v1h-1zM819 183h1v1h-1zM819 170h1v1h-1zM819 158h1v1h-1zM831 723h1v1h-1zM831 710h1v1h-1zM831 698h1v1h-1zM831 686h1v1h-1zM831 673h1v1h-1zM831 661h1v1h-1zM831 649h1v1h-1zM831 637h1v1h-1zM831 624h1v1h-1zM831 612h1v1h-1zM831 600h1v1h-1zM831 588h1v1h-1zM831 575h1v1h-1zM831 563h1v1h-1zM831 551h1v1h-1zM831 538h1v1h-1zM831 526h1v1h-1zM831 514h1v1h-1zM831 502h1v1h-1zM831 489h1v1h-1zM831 477h1v1h-1zM831 465h1v1h-1zM831 453h1v1h-1zM831 440h1v1h-1zM831 428h1v1h-1zM831 416h1v1h-1zM831 404h1v1h-1zM831 391h1v1h-1zM831 379h1v1h-1zM831 367h1v1h-1zM831 354h1v1h-1zM831 342h1v1h-1zM831 330h1v1h-1zM831 318h1v1h-1zM831 305h1v1h-1zM831 293h1v1h-1zM831 281h1v1h-1zM831 269h1v1h-1zM831 256h1v1h-1zM831 244h1v1h-1zM831 232h1v1h-1zM831 220h1v1h-1zM831 207h1v1h-1zM831 195h1v1h-1zM831 183h1v1h-1zM831 170h1v1h-1zM831 158h1v1h-1zM844 723h1v1h-1zM844 710h1v1h-1zM844 698h1v1h-1zM844 686h1v1h-1zM844 673h1v1h-1zM844 661h1v1h-1zM844 649h1v1h-1zM844 637h1v1h-1zM844 624h1v1h-1zM844 612h1v1h-1zM844 600h1v1h-1zM844 588h1v1h-1zM844 575h1v1h-1zM844 563h1v1h-1zM844 551h1v1h-1zM844 538h1v1h-1zM844 526h1v1h-1zM844 514h1v1h-1zM844 502h1v1h-1zM844 489h1v1h-1zM844 477h1v1h-1zM844 465h1v1h-1zM844 453h1v1h-1zM844 440h1v1h-1zM844 428h1v1h-1zM844 416h1v1h-1zM844 404h1v1h-1zM844 391h1v1h-1zM844 379h1v1h-1zM844 367h1v1h-1zM844 354h1v1h-1zM844 342h1v1h-1zM844 330h1v1h-1zM844 318h1v1h-1zM844 305h1v1h-1zM844 293h1v1h-1zM844 281h1v1h-1zM844 269h1v1h-1zM844 256h1v1h-1zM844 244h1v1h-1zM844 232h1v1h-1zM844 220h1v1h-1zM844 207h1v1h-1zM844 195h1v1h-1zM844 183h1v1h-1zM844 170h1v1h-1zM844 158h1v1h-1zM856 723h1v1h-1zM856 710h1v1h-1zM856 698h1v1h-1zM856 686h1v1h-1zM856 673h1v1h-1zM856 661h1v1h-1zM856 649h1v1h-1zM856 637h1v1h-1zM856 624h1v1h-1zM856 612h1v1h-1zM856 600h1v1h-1zM856 588h1v1h-1zM856 575h1v1h-1zM856 563h1v1h-1zM856 551h1v1h-1zM856 538h1v1h-1zM856 526h1v1h-1zM856 514h1v1h-1zM856 502h1v1h-1zM856 489h1v1h-1zM856 477h1v1h-1zM856 465h1v1h-1zM856 453h1v1h-1zM856 440h1v1h-1zM856 428h1v1h-1zM856 416h1v1h-1zM856 404h1v1h-1zM856 391h1v1h-1zM856 379h1v1h-1zM856 367h1v1h-1zM856 354h1v1h-1zM856 342h1v1h-1zM856 330h1v1h-1zM856 318h1v1h-1zM856 305h1v1h-1zM856 293h1v1h-1zM856 281h1v1h-1zM856 269h1v1h-1zM856 256h1v1h-1zM856 244h1v1h-1zM856 232h1v1h-1zM856 220h1v1h-1zM856 207h1v1h-1zM856 195h1v1h-1zM856 183h1v1h-1zM856 170h1v1h-1zM856 158h1v1h-1zM868 723h1v1h-1zM868 710h1v1h-1zM868 698h1v1h-1zM868 686h1v1h-1zM868 673h1v1h-1zM868 661h1v1h-1zM868 649h1v1h-1zM868 637h1v1h-1zM868 624h1v1h-1zM868 612h1v1h-1zM868 600h1v1h-1zM868 588h1v1h-1zM868 575h1v1h-1zM868 563h1v1h-1zM868 551h1v1h-1zM868 538h1v1h-1zM868 526h1v1h-1zM868 514h1v1h-1zM868 502h1v1h-1zM868 489h1v1h-1zM868 477h1v1h-1zM868 465h1v1h-1zM868 453h1v1h-1zM868 440h1v1h-1zM868 428h1v1h-1zM868 416h1v1h-1zM868 404h1v1h-1zM868 391h1v1h-1zM868 379h1v1h-1zM868 367h1v1h-1zM868 354h1v1h-1zM868 342h1v1h-1zM868 330h1v1h-1zM868 318h1v1h-1zM868 305h1v1h-1zM868 293h1v1h-1zM868 281h1v1h-1zM868 269h1v1h-1zM868 256h1v1h-1zM868 244h1v1h-1zM868 232h1v1h-1zM868 220h1v1h-1zM868 207h1v1h-1zM868 195h1v1h-1zM868 183h1v1h-1zM868 170h1v1h-1zM868 158h1v1h-1zM881 723h1v1h-1zM881 710h1v1h-1zM881 698h1v1h-1zM881 686h1v1h-1zM881 673h1v1h-1zM881 661h1v1h-1zM881 649h1v1h-1zM881 637h1v1h-1zM881 624h1v1h-1zM881 612h1v1h-1zM881 600h1v1h-1zM881 588h1v1h-1zM881 575h1v1h-1zM881 563h1v1h-1zM881 551h1v1h-1zM881 538h1v1h-1zM881 526h1v1h-1zM881 514h1v1h-1zM881 502h1v1h-1zM881 489h1v1h-1zM881 477h1v1h-1zM881 465h1v1h-1zM881 453h1v1h-1zM881 440h1v1h-1zM881 428h1v1h-1zM881 416h1v1h-1zM881 404h1v1h-1zM881 391h1v1h-1zM881 379h1v1h-1zM881 367h1v1h-1zM881 354h1v1h-1zM881 342h1v1h-1zM881 330h1v1h-1zM881 318h1v1h-1zM881 305h1v1h-1zM881 293h1v1h-1zM881 281h1v1h-1zM881 269h1v1h-1zM881 256h1v1h-1zM881 244h1v1h-1zM881 232h1v1h-1zM881 220h1v1h-1zM881 207h1v1h-1zM881 195h1v1h-1zM881 183h1v1h-1zM881 170h1v1h-1zM881 158h1v1h-1zM893 723h1v1h-1zM893 710h1v1h-1zM893 698h1v1h-1zM893 686h1v1h-1zM893 673h1v1h-1zM893 661h1v1h-1zM893 649h1v1h-1zM893 637h1v1h-1zM893 624h1v1h-1zM893 612h1v1h-1zM893 600h1v1h-1zM893 588h1v1h-1zM893 575h1v1h-1zM893 563h1v1h-1zM893 551h1v1h-1zM893 538h1v1h-1zM893 526h1v1h-1zM893 514h1v1h-1zM893 502h1v1h-1zM893 489h1v1h-1zM893 477h1v1h-1zM893 465h1v1h-1zM893 453h1v1h-1zM893 440h1v1h-1zM893 428h1v1h-1zM893 416h1v1h-1zM893 404h1v1h-1zM893 391h1v1h-1zM893 379h1v1h-1zM893 367h1v1h-1zM893 354h1v1h-1zM893 342h1v1h-1zM893 330h1v1h-1zM893 318h1v1h-1zM893 305h1v1h-1zM893 293h1v1h-1zM893 281h1v1h-1zM893 269h1v1h-1zM893 256h1v1h-1zM893 244h1v1h-1zM893 232h1v1h-1zM893 220h1v1h-1zM893 207h1v1h-1zM893 195h1v1h-1zM893 183h1v1h-1zM893 170h1v1h-1zM893 158h1v1h-1zM905 723h1v1h-1zM905 710h1v1h-1zM905 698h1v1h-1zM905 686h1v1h-1zM905 673h1v1h-1zM905 661h1v1h-1zM905 649h1v1h-1zM905 637h1v1h-1zM905 624h1v1h-1zM905 612h1v1h-1zM905 600h1v1h-1zM905 588h1v1h-1zM905 575h1v1h-1zM905 563h1v1h-1zM905 551h1v1h-1zM905 538h1v1h-1zM905 526h1v1h-1zM905 514h1v1h-1zM905 502h1v1h-1zM905 489h1v1h-1zM905 477h1v1h-1zM905 465h1v1h-1zM905 453h1v1h-1zM905 440h1v1h-1zM905 428h1v1h-1zM905 416h1v1h-1zM905 404h1v1h-1zM905 391h1v1h-1zM905 379h1v1h-1zM905 367h1v1h-1zM905 354h1v1h-1zM905 342h1v1h-1zM905 330h1v1h-1zM905 318h1v1h-1zM905 305h1v1h-1zM905 293h1v1h-1zM905 281h1v1h-1zM905 269h1v1h-1zM905 256h1v1h-1zM905 244h1v1h-1zM905 232h1v1h-1zM905 220h1v1h-1zM905 207h1v1h-1zM905 195h1v1h-1zM905 183h1v1h-1zM905 170h1v1h-1zM905 158h1v1h-1zM917 723h1v1h-1zM917 710h1v1h-1zM917 698h1v1h-1zM917 686h1v1h-1zM917 673h1v1h-1zM917 661h1v1h-1zM917 649h1v1h-1zM917 637h1v1h-1zM917 624h1v1h-1zM917 612h1v1h-1zM917 600h1v1h-1zM917 588h1v1h-1zM917 575h1v1h-1zM917 563h1v1h-1zM917 551h1v1h-1zM917 538h1v1h-1zM917 526h1v1h-1zM917 514h1v1h-1zM917 502h1v1h-1zM917 489h1v1h-1zM917 477h1v1h-1zM917 465h1v1h-1zM917 453h1v1h-1zM917 440h1v1h-1zM917 428h1v1h-1zM917 416h1v1h-1zM917 404h1v1h-1zM917 391h1v1h-1zM917 379h1v1h-1zM917 367h1v1h-1zM917 354h1v1h-1zM917 342h1v1h-1zM917 330h1v1h-1zM917 318h1v1h-1zM917 305h1v1h-1zM917 293h1v1h-1zM917 281h1v1h-1zM917 269h1v1h-1zM917 256h1v1h-1zM917 244h1v1h-1zM917 232h1v1h-1zM917 220h1v1h-1zM917 207h1v1h-1zM917 195h1v1h-1zM917 183h1v1h-1zM917 170h1v1h-1zM917 158h1v1h-1zM930 723h1v1h-1zM930 710h1v1h-1zM930 698h1v1h-1zM930 686h1v1h-1zM930 673h1v1h-1zM930 661h1v1h-1zM930 649h1v1h-1zM930 637h1v1h-1zM930 624h1v1h-1zM930 612h1v1h-1zM930 600h1v1h-1zM930 588h1v1h-1zM930 575h1v1h-1zM930 563h1v1h-1zM930 551h1v1h-1zM930 538h1v1h-1zM930 526h1v1h-1zM930 514h1v1h-1zM930 502h1v1h-1zM930 489h1v1h-1zM930 477h1v1h-1zM930 465h1v1h-1zM930 453h1v1h-1zM930 440h1v1h-1zM930 428h1v1h-1zM930 416h1v1h-1zM930 404h1v1h-1zM930 391h1v1h-1zM930 379h1v1h-1zM930 367h1v1h-1zM930 354h1v1h-1zM930 342h1v1h-1zM930 330h1v1h-1zM930 318h1v1h-1zM930 305h1v1h-1zM930 293h1v1h-1zM930 281h1v1h-1zM930 269h1v1h-1zM930 256h1v1h-1zM930 244h1v1h-1zM930 232h1v1h-1zM930 220h1v1h-1zM930 207h1v1h-1zM930 195h1v1h-1zM930 183h1v1h-1zM930 170h1v1h-1zM930 158h1v1h-1zM942 723h1v1h-1zM942 710h1v1h-1zM942 698h1v1h-1zM942 686h1v1h-1zM942 673h1v1h-1zM942 661h1v1h-1zM942 649h1v1h-1zM942 637h1v1h-1zM942 624h1v1h-1zM942 612h1v1h-1zM942 600h1v1h-1zM942 588h1v1h-1zM942 575h1v1h-1zM942 563h1v1h-1zM942 551h1v1h-1zM942 538h1v1h-1zM942 526h1v1h-1zM942 514h1v1h-1zM942 502h1v1h-1zM942 489h1v1h-1zM942 477h1v1h-1zM942 465h1v1h-1zM942 453h1v1h-1zM942 440h1v1h-1zM942 428h1v1h-1zM942 416h1v1h-1zM942 404h1v1h-1zM942 391h1v1h-1zM942 379h1v1h-1zM942 367h1v1h-1zM942 354h1v1h-1zM942 342h1v1h-1zM942 330h1v1h-1zM942 318h1v1h-1zM942 305h1v1h-1zM942 293h1v1h-1zM942 281h1v1h-1zM942 269h1v1h-1zM942 256h1v1h-1zM942 244h1v1h-1zM942 232h1v1h-1zM942 220h1v1h-1zM942 207h1v1h-1zM942 195h1v1h-1zM942 183h1v1h-1zM942 170h1v1h-1zM942 158h1v1h-1zM954 723h1v1h-1zM954 710h1v1h-1zM954 698h1v1h-1zM954 686h1v1h-1zM954 673h1v1h-1zM954 661h1v1h-1zM954 649h1v1h-1zM954 637h1v1h-1zM954 624h1v1h-1zM954 612h1v1h-1zM954 600h1v1h-1zM954 588h1v1h-1zM954 575h1v1h-1zM954 563h1v1h-1zM954 551h1v1h-1zM954 538h1v1h-1zM954 526h1v1h-1zM954 514h1v1h-1zM954 502h1v1h-1zM954 489h1v1h-1zM954 477h1v1h-1zM954 465h1v1h-1zM954 453h1v1h-1zM954 440h1v1h-1zM954 428h1v1h-1zM954 416h1v1h-1zM954 404h1v1h-1zM954 391h1v1h-1zM954 379h1v1h-1zM954 367h1v1h-1zM954 354h1v1h-1zM954 342h1v1h-1zM954 330h1v1h-1zM954 318h1v1h-1zM954 305h1v1h-1zM954 293h1v1h-1zM954 281h1v1h-1zM954 269h1v1h-1zM954 256h1v1h-1zM954 244h1v1h-1zM954 232h1v1h-1zM954 220h1v1h-1zM954 207h1v1h-1zM954 195h1v1h-1zM954 183h1v1h-1zM954 170h1v1h-1zM954 158h1v1h-1zM966 723h1v1h-1zM966 710h1v1h-1zM966 698h1v1h-1zM966 686h1v1h-1zM966 673h1v1h-1zM966 661h1v1h-1zM966 649h1v1h-1zM966 637h1v1h-1zM966 624h1v1h-1zM966 612h1v1h-1zM966 600h1v1h-1zM966 588h1v1h-1zM966 575h1v1h-1zM966 563h1v1h-1zM966 551h1v1h-1zM966 538h1v1h-1zM966 526h1v1h-1zM966 514h1v1h-1zM966 502h1v1h-1zM966 489h1v1h-1zM966 477h1v1h-1zM966 465h1v1h-1zM966 453h1v1h-1zM966 440h1v1h-1zM966 428h1v1h-1zM966 416h1v1h-1zM966 404h1v1h-1zM966 391h1v1h-1zM966 379h1v1h-1zM966 367h1v1h-1zM966 354h1v1h-1zM966 342h1v1h-1zM966 330h1v1h-1zM966 318h1v1h-1zM966 305h1v1h-1zM966 293h1v1h-1zM966 281h1v1h-1zM966 269h1v1h-1zM966 256h1v1h-1zM966 244h1v1h-1zM966 232h1v1h-1zM966 220h1v1h-1zM966 207h1v1h-1zM966 195h1v1h-1zM966 183h1v1h-1zM966 170h1v1h-1zM966 158h1v1h-1zM979 723h1v1h-1zM979 710h1v1h-1zM979 698h1v1h-1zM979 686h1v1h-1zM979 673h1v1h-1zM979 661h1v1h-1zM979 649h1v1h-1zM979 637h1v1h-1zM979 624h1v1h-1zM979 612h1v1h-1zM979 600h1v1h-1zM979 588h1v1h-1zM979 575h1v1h-1zM979 563h1v1h-1zM979 551h1v1h-1zM979 538h1v1h-1zM979 526h1v1h-1zM979 514h1v1h-1zM979 502h1v1h-1zM979 489h1v1h-1zM979 477h1v1h-1zM979 465h1v1h-1zM979 453h1v1h-1zM979 440h1v1h-1zM979 428h1v1h-1zM979 416h1v1h-1zM979 404h1v1h-1zM979 391h1v1h-1zM979 379h1v1h-1zM979 367h1v1h-1zM979 354h1v1h-1zM979 342h1v1h-1zM979 330h1v1h-1zM979 318h1v1h-1zM979 305h1v1h-1zM979 293h1v1h-1zM979 281h1v1h-1zM979 269h1v1h-1zM979 256h1v1h-1zM979 244h1v1h-1zM979 232h1v1h-1zM979 220h1v1h-1zM979 207h1v1h-1zM979 195h1v1h-1zM979 183h1v1h-1zM979 170h1v1h-1zM979 158h1v1h-1zM991 723h1v1h-1zM991 710h1v1h-1zM991 698h1v1h-1zM991 686h1v1h-1zM991 673h1v1h-1zM991 661h1v1h-1zM991 649h1v1h-1zM991 637h1v1h-1zM991 624h1v1h-1zM991 612h1v1h-1zM991 600h1v1h-1zM991 588h1v1h-1zM991 575h1v1h-1zM991 563h1v1h-1zM991 551h1v1h-1zM991 538h1v1h-1zM991 526h1v1h-1zM991 514h1v1h-1zM991 502h1v1h-1zM991 489h1v1h-1zM991 477h1v1h-1zM991 465h1v1h-1zM991 453h1v1h-1zM991 440h1v1h-1zM991 428h1v1h-1zM991 416h1v1h-1zM991 404h1v1h-1zM991 391h1v1h-1zM991 379h1v1h-1zM991 367h1v1h-1zM991 354h1v1h-1zM991 342h1v1h-1zM991 330h1v1h-1zM991 318h1v1h-1zM991 305h1v1h-1zM991 293h1v1h-1zM991 281h1v1h-1zM991 269h1v1h-1zM991 256h1v1h-1zM991 244h1v1h-1zM991 232h1v1h-1zM991 220h1v1h-1zM991 207h1v1h-1zM991 195h1v1h-1zM991 183h1v1h-1zM991 170h1v1h-1zM991 158h1v1h-1zM1003 723h1v1h-1zM1003 710h1v1h-1zM1003 698h1v1h-1zM1003 686h1v1h-1zM1003 673h1v1h-1zM1003 661h1v1h-1zM1003 649h1v1h-1zM1003 637h1v1h-1zM1003 624h1v1h-1zM1003 612h1v1h-1zM1003 600h1v1h-1zM1003 588h1v1h-1zM1003 575h1v1h-1zM1003 563h1v1h-1zM1003 551h1v1h-1zM1003 538h1v1h-1zM1003 526h1v1h-1zM1003 514h1v1h-1zM1003 502h1v1h-1zM1003 489h1v1h-1zM1003 477h1v1h-1zM1003 465h1v1h-1zM1003 453h1v1h-1zM1003 440h1v1h-1zM1003 428h1v1h-1zM1003 416h1v1h-1zM1003 404h1v1h-1zM1003 391h1v1h-1zM1003 379h1v1h-1zM1003 367h1v1h-1zM1003 354h1v1h-1zM1003 342h1v1h-1zM1003 330h1v1h-1zM1003 318h1v1h-1zM1003 305h1v1h-1zM1003 293h1v1h-1zM1003 281h1v1h-1zM1003 269h1v1h-1zM1003 256h1v1h-1zM1003 244h1v1h-1zM1003 232h1v1h-1zM1003 220h1v1h-1zM1003 207h1v1h-1zM1003 195h1v1h-1zM1003 183h1v1h-1zM1003 170h1v1h-1zM1003 158h1v1h-1zM1015 723h1v1h-1zM1015 710h1v1h-1zM1015 698h1v1h-1zM1015 686h1v1h-1zM1015 673h1v1h-1zM1015 661h1v1h-1zM1015 649h1v1h-1zM1015 637h1v1h-1zM1015 624h1v1h-1zM1015 612h1v1h-1zM1015 600h1v1h-1zM1015 588h1v1h-1zM1015 575h1v1h-1zM1015 563h1v1h-1zM1015 551h1v1h-1zM1015 538h1v1h-1zM1015 526h1v1h-1zM1015 514h1v1h-1zM1015 502h1v1h-1zM1015 489h1v1h-1zM1015 477h1v1h-1zM1015 465h1v1h-1zM1015 453h1v1h-1zM1015 440h1v1h-1zM1015 428h1v1h-1zM1015 416h1v1h-1zM1015 404h1v1h-1zM1015 391h1v1h-1zM1015 379h1v1h-1zM1015 367h1v1h-1zM1015 354h1v1h-1zM1015 342h1v1h-1zM1015 330h1v1h-1zM1015 318h1v1h-1zM1015 305h1v1h-1zM1015 293h1v1h-1zM1015 281h1v1h-1zM1015 269h1v1h-1zM1015 256h1v1h-1zM1015 244h1v1h-1zM1015 232h1v1h-1zM1015 220h1v1h-1zM1015 207h1v1h-1zM1015 195h1v1h-1zM1015 183h1v1h-1zM1015 170h1v1h-1zM1015 158h1v1h-1zM1028 723h1v1h-1zM1028 710h1v1h-1zM1028 698h1v1h-1zM1028 686h1v1h-1zM1028 673h1v1h-1zM1028 661h1v1h-1zM1028 649h1v1h-1zM1028 637h1v1h-1zM1028 624h1v1h-1zM1028 612h1v1h-1zM1028 600h1v1h-1zM1028 588h1v1h-1zM1028 575h1v1h-1zM1028 563h1v1h-1zM1028 551h1v1h-1zM1028 538h1v1h-1zM1028 526h1v1h-1zM1028 514h1v1h-1zM1028 502h1v1h-1zM1028 489h1v1h-1zM1028 477h1v1h-1zM1028 465h1v1h-1zM1028 453h1v1h-1zM1028 440h1v1h-1zM1028 428h1v1h-1zM1028 416h1v1h-1zM1028 404h1v1h-1zM1028 391h1v1h-1zM1028 379h1v1h-1zM1028 367h1v1h-1zM1028 354h1v1h-1zM1028 342h1v1h-1zM1028 330h1v1h-1zM1028 318h1v1h-1zM1028 305h1v1h-1zM1028 293h1v1h-1zM1028 281h1v1h-1zM1028 269h1v1h-1zM1028 256h1v1h-1zM1028 244h1v1h-1zM1028 232h1v1h-1zM1028 220h1v1h-1zM1028 207h1v1h-1zM1028 195h1v1h-1zM1028 183h1v1h-1zM1028 170h1v1h-1zM1028 158h1v1h-1zM1040 723h1v1h-1zM1040 710h1v1h-1zM1040 698h1v1h-1zM1040 686h1v1h-1zM1040 673h1v1h-1zM1040 661h1v1h-1zM1040 649h1v1h-1zM1040 637h1v1h-1zM1040 624h1v1h-1zM1040 612h1v1h-1zM1040 600h1v1h-1zM1040 588h1v1h-1zM1040 575h1v1h-1zM1040 563h1v1h-1zM1040 551h1v1h-1zM1040 538h1v1h-1zM1040 526h1v1h-1zM1040 514h1v1h-1zM1040 502h1v1h-1zM1040 489h1v1h-1zM1040 477h1v1h-1zM1040 465h1v1h-1zM1040 453h1v1h-1zM1040 440h1v1h-1zM1040 428h1v1h-1zM1040 416h1v1h-1zM1040 404h1v1h-1zM1040 391h1v1h-1zM1040 379h1v1h-1zM1040 367h1v1h-1zM1040 354h1v1h-1zM1040 342h1v1h-1zM1040 330h1v1h-1zM1040 318h1v1h-1zM1040 305h1v1h-1zM1040 293h1v1h-1zM1040 281h1v1h-1zM1040 269h1v1h-1zM1040 256h1v1h-1zM1040 244h1v1h-1zM1040 232h1v1h-1zM1040 220h1v1h-1zM1040 207h1v1h-1zM1040 195h1v1h-1zM1040 183h1v1h-1zM1040 170h1v1h-1zM1040 158h1v1h-1zM1052 723h1v1h-1zM1052 710h1v1h-1zM1052 698h1v1h-1zM1052 686h1v1h-1zM1052 673h1v1h-1zM1052 661h1v1h-1zM1052 649h1v1h-1zM1052 637h1v1h-1zM1052 624h1v1h-1zM1052 612h1v1h-1zM1052 600h1v1h-1zM1052 588h1v1h-1zM1052 575h1v1h-1zM1052 563h1v1h-1zM1052 551h1v1h-1zM1052 538h1v1h-1zM1052 526h1v1h-1zM1052 514h1v1h-1zM1052 502h1v1h-1zM1052 489h1v1h-1zM1052 477h1v1h-1zM1052 465h1v1h-1zM1052 453h1v1h-1zM1052 440h1v1h-1zM1052 428h1v1h-1zM1052 416h1v1h-1zM1052 404h1v1h-1zM1052 391h1v1h-1zM1052 379h1v1h-1zM1052 367h1v1h-1zM1052 354h1v1h-1zM1052 342h1v1h-1zM1052 330h1v1h-1zM1052 318h1v1h-1zM1052 305h1v1h-1zM1052 293h1v1h-1zM1052 281h1v1h-1zM1052 269h1v1h-1zM1052 256h1v1h-1zM1052 244h1v1h-1zM1052 232h1v1h-1zM1052 220h1v1h-1zM1052 207h1v1h-1zM1052 195h1v1h-1zM1052 183h1v1h-1zM1052 170h1v1h-1zM1052 158h1v1h-1zM1065 723h1v1h-1zM1065 710h1v1h-1zM1065 698h1v1h-1zM1065 686h1v1h-1zM1065 673h1v1h-1zM1065 661h1v1h-1zM1065 649h1v1h-1zM1065 637h1v1h-1zM1065 624h1v1h-1zM1065 612h1v1h-1zM1065 600h1v1h-1zM1065 588h1v1h-1zM1065 575h1v1h-1zM1065 563h1v1h-1zM1065 551h1v1h-1zM1065 538h1v1h-1zM1065 526h1v1h-1zM1065 514h1v1h-1zM1065 502h1v1h-1zM1065 489h1v1h-1zM1065 477h1v1h-1zM1065 465h1v1h-1zM1065 453h1v1h-1zM1065 440h1v1h-1zM1065 428h1v1h-1zM1065 416h1v1h-1zM1065 404h1v1h-1zM1065 391h1v1h-1zM1065 379h1v1h-1zM1065 367h1v1h-1zM1065 354h1v1h-1zM1065 342h1v1h-1zM1065 330h1v1h-1zM1065 318h1v1h-1zM1065 305h1v1h-1zM1065 293h1v1h-1zM1065 281h1v1h-1zM1065 269h1v1h-1zM1065 256h1v1h-1zM1065 244h1v1h-1zM1065 232h1v1h-1zM1065 220h1v1h-1zM1065 207h1v1h-1zM1065 195h1v1h-1zM1065 183h1v1h-1zM1065 170h1v1h-1zM1065 158h1v1h-1zM1077 723h1v1h-1zM1077 710h1v1h-1zM1077 698h1v1h-1zM1077 686h1v1h-1zM1077 673h1v1h-1zM1077 661h1v1h-1zM1077 649h1v1h-1zM1077 637h1v1h-1zM1077 624h1v1h-1zM1077 612h1v1h-1zM1077 600h1v1h-1zM1077 588h1v1h-1zM1077 575h1v1h-1zM1077 563h1v1h-1zM1077 551h1v1h-1zM1077 538h1v1h-1zM1077 526h1v1h-1zM1077 514h1v1h-1zM1077 502h1v1h-1zM1077 489h1v1h-1zM1077 477h1v1h-1zM1077 465h1v1h-1zM1077 453h1v1h-1zM1077 440h1v1h-1zM1077 428h1v1h-1zM1077 416h1v1h-1zM1077 404h1v1h-1zM1077 391h1v1h-1zM1077 379h1v1h-1zM1077 367h1v1h-1zM1077 354h1v1h-1zM1077 342h1v1h-1zM1077 330h1v1h-1zM1077 318h1v1h-1zM1077 305h1v1h-1zM1077 293h1v1h-1zM1077 281h1v1h-1zM1077 269h1v1h-1zM1077 256h1v1h-1zM1077 244h1v1h-1zM1077 232h1v1h-1zM1077 220h1v1h-1zM1077 207h1v1h-1zM1077 195h1v1h-1zM1077 183h1v1h-1zM1077 170h1v1h-1zM1077 158h1v1h-1zM1089 723h1v1h-1zM1089 710h1v1h-1zM1089 698h1v1h-1zM1089 686h1v1h-1zM1089 673h1v1h-1zM1089 661h1v1h-1zM1089 649h1v1h-1zM1089 637h1v1h-1zM1089 624h1v1h-1zM1089 612h1v1h-1zM1089 600h1v1h-1zM1089 588h1v1h-1zM1089 575h1v1h-1zM1089 563h1v1h-1zM1089 551h1v1h-1zM1089 538h1v1h-1zM1089 526h1v1h-1zM1089 514h1v1h-1zM1089 502h1v1h-1zM1089 489h1v1h-1zM1089 477h1v1h-1zM1089 465h1v1h-1zM1089 453h1v1h-1zM1089 440h1v1h-1zM1089 428h1v1h-1zM1089 416h1v1h-1zM1089 404h1v1h-1zM1089 391h1v1h-1zM1089 379h1v1h-1zM1089 367h1v1h-1zM1089 354h1v1h-1zM1089 342h1v1h-1zM1089 330h1v1h-1zM1089 318h1v1h-1zM1089 305h1v1h-1zM1089 293h1v1h-1zM1089 281h1v1h-1zM1089 269h1v1h-1zM1089 256h1v1h-1zM1089 244h1v1h-1zM1089 232h1v1h-1zM1089 220h1v1h-1zM1089 207h1v1h-1zM1089 195h1v1h-1zM1089 183h1v1h-1zM1089 170h1v1h-1zM1089 158h1v1h-1zM1101 723h1v1h-1zM1101 710h1v1h-1zM1101 698h1v1h-1zM1101 686h1v1h-1zM1101 673h1v1h-1zM1101 661h1v1h-1zM1101 649h1v1h-1zM1101 637h1v1h-1zM1101 624h1v1h-1zM1101 612h1v1h-1zM1101 600h1v1h-1zM1101 588h1v1h-1zM1101 575h1v1h-1zM1101 563h1v1h-1zM1101 551h1v1h-1zM1101 538h1v1h-1zM1101 526h1v1h-1zM1101 514h1v1h-1zM1101 502h1v1h-1zM1101 489h1v1h-1zM1101 477h1v1h-1zM1101 465h1v1h-1zM1101 453h1v1h-1zM1101 440h1v1h-1zM1101 428h1v1h-1zM1101 416h1v1h-1zM1101 404h1v1h-1zM1101 391h1v1h-1zM1101 379h1v1h-1zM1101 367h1v1h-1zM1101 354h1v1h-1zM1101 342h1v1h-1zM1101 330h1v1h-1zM1101 318h1v1h-1zM1101 305h1v1h-1zM1101 293h1v1h-1zM1101 281h1v1h-1zM1101 269h1v1h-1zM1101 256h1v1h-1zM1101 244h1v1h-1zM1101 232h1v1h-1zM1101 220h1v1h-1zM1101 207h1v1h-1zM1101 195h1v1h-1zM1101 183h1v1h-1zM1101 170h1v1h-1zM1101 158h1v1h-1zM1114 723h1v1h-1zM1114 710h1v1h-1zM1114 698h1v1h-1zM1114 686h1v1h-1zM1114 673h1v1h-1zM1114 661h1v1h-1zM1114 649h1v1h-1zM1114 637h1v1h-1zM1114 624h1v1h-1zM1114 612h1v1h-1zM1114 600h1v1h-1zM1114 588h1v1h-1zM1114 575h1v1h-1zM1114 563h1v1h-1zM1114 551h1v1h-1zM1114 538h1v1h-1zM1114 526h1v1h-1zM1114 514h1v1h-1zM1114 502h1v1h-1zM1114 489h1v1h-1zM1114 477h1v1h-1zM1114 465h1v1h-1zM1114 453h1v1h-1zM1114 440h1v1h-1zM1114 428h1v1h-1zM1114 416h1v1h-1zM1114 404h1v1h-1zM1114 391h1v1h-1zM1114 379h1v1h-1zM1114 367h1v1h-1zM1114 354h1v1h-1zM1114 342h1v1h-1zM1114 330h1v1h-1zM1114 318h1v1h-1zM1114 305h1v1h-1zM1114 293h1v1h-1zM1114 281h1v1h-1zM1114 269h1v1h-1zM1114 256h1v1h-1zM1114 244h1v1h-1zM1114 232h1v1h-1zM1114 220h1v1h-1zM1114 207h1v1h-1zM1114 195h1v1h-1zM1114 183h1v1h-1zM1114 170h1v1h-1zM1114 158h1v1h-1zM1126 723h1v1h-1zM1126 710h1v1h-1zM1126 698h1v1h-1zM1126 686h1v1h-1zM1126 673h1v1h-1zM1126 661h1v1h-1zM1126 649h1v1h-1zM1126 637h1v1h-1zM1126 624h1v1h-1zM1126 612h1v1h-1zM1126 600h1v1h-1zM1126 588h1v1h-1zM1126 575h1v1h-1zM1126 563h1v1h-1zM1126 551h1v1h-1zM1126 538h1v1h-1zM1126 526h1v1h-1zM1126 514h1v1h-1zM1126 502h1v1h-1zM1126 489h1v1h-1zM1126 477h1v1h-1zM1126 465h1v1h-1zM1126 453h1v1h-1zM1126 440h1v1h-1zM1126 428h1v1h-1zM1126 416h1v1h-1zM1126 404h1v1h-1zM1126 391h1v1h-1zM1126 379h1v1h-1zM1126 367h1v1h-1zM1126 354h1v1h-1zM1126 342h1v1h-1zM1126 330h1v1h-1zM1126 318h1v1h-1zM1126 305h1v1h-1zM1126 293h1v1h-1zM1126 281h1v1h-1zM1126 269h1v1h-1zM1126 256h1v1h-1zM1126 244h1v1h-1zM1126 232h1v1h-1zM1126 220h1v1h-1zM1126 207h1v1h-1zM1126 195h1v1h-1zM1126 183h1v1h-1zM1126 170h1v1h-1zM1126 158h1v1h-1z" fill="#484848"/><g fill="none" stroke="#bcbcbc" stroke-width="0.95"><path d="M409 277.3L714.9 261.4L794.7 551L791.8 550.7L713.1 267.7L409.8 283.5"/><path d="M738.4 254.6L800.2 480C812 525 824 560 823.5 585C822 610 815 625 810.4 631.7"/><path d="M780 629.8L796.2 580.1L798.6 580.6L783 630"/></g><g fill="none" stroke="#b08848" stroke-width="1"><path d="M422.8 402.3C431.3 401.4 459.4 402.3 474.0 397.0C488.6 391.7 501.0 378.8 510.2 370.4C519.4 362.0 521.2 354.4 529.4 346.9C537.6 339.4 547.6 330.9 559.3 325.6C571.0 320.4 585.6 315.4 599.8 315.4C614.0 315.4 632.4 318.6 644.5 325.6C656.6 332.6 665.7 344.8 672.3 357.6C678.9 370.4 682.8 388.6 684.0 402.3C685.2 416.0 682.3 427.7 679.7 440.0C677.1 452.3 669.6 466.6 668.4 476.2C667.2 485.8 668.3 490.1 672.7 497.6C677.1 505.1 690.1 513.9 695.0 521.0C699.9 528.1 700.5 534.7 702.0 540.0C703.5 545.3 702.7 549.4 704.0 553.0C705.3 556.6 707.3 560.6 710.0 561.5C712.7 562.4 713.9 559.9 720.0 558.3C726.1 556.7 734.8 552.9 746.9 551.7C759.0 550.5 784.8 551.4 792.4 551.3"/><path d="M421.7 422.0C430.4 421.6 458.2 424.1 474.0 419.4C489.8 414.7 505.2 403.4 516.6 393.8C528.0 384.2 534.4 370.5 542.2 361.8C550.0 353.1 553.9 346.0 563.5 341.6C573.1 337.2 587.4 334.7 599.8 335.2C612.2 335.7 628.3 338.9 638.1 344.8C647.9 350.7 654.0 360.8 658.4 370.4C662.8 380.0 664.5 390.7 664.8 402.3C665.1 413.9 662.8 428.7 660.0 440.0C657.2 451.3 649.4 461.1 648.1 470.0C646.8 478.9 648.5 485.2 652.4 493.3C656.3 501.4 666.5 510.0 671.6 518.9C676.8 527.8 681.7 538.8 683.3 546.6C684.9 554.4 683.9 559.4 681.2 565.8C678.5 572.2 673.5 580.7 667.3 585.0C661.1 589.3 651.3 591.8 643.9 591.8C636.5 591.8 629.7 589.0 622.6 585.0C615.5 581.0 609.4 572.3 601.2 568.0C593.0 563.7 582.4 559.4 573.5 559.4C564.6 559.4 555.7 563.4 547.9 568.0C540.1 572.6 531.6 579.4 526.6 587.0C521.6 594.6 519.4 609.3 518.0 613.8"/><path d="M537.3 614.8C539.1 610.5 541.9 595.3 547.9 589.3C553.9 583.3 564.6 578.6 573.5 578.6C582.4 578.6 593.0 585.0 601.2 589.3C609.4 593.6 615.9 600.7 622.6 604.2C629.4 607.8 632.8 610.6 641.7 610.6C650.6 610.6 662.9 609.5 675.9 604.2C688.9 598.9 706.3 584.2 720.0 578.6C733.7 573.0 745.3 570.3 758.3 570.6C771.3 570.9 791.4 578.9 798.0 580.5"/></g><g transform="translate(544 299) rotate(-28)"><rect x="-15.5" y="-4.1" width="31" height="8.2" rx="1.5" fill="#727272" stroke="#bdbdbd" stroke-width="0.9"/><path d="M-14.5 -2.4H14.5M-14.5 -0.8H14.5M-14.5 0.8H14.5M-14.5 2.4H14.5" stroke="#b4b4b4" stroke-width="0.55"/><path d="M0 -4.1V4.1" stroke="#d0d0d0" stroke-width="0.7"/></g><g transform="translate(591.5 287) rotate(-2)"><rect x="-15.5" y="-4.1" width="31" height="8.2" rx="1.5" fill="#727272" stroke="#bdbdbd" stroke-width="0.9"/><path d="M-14.5 -2.4H14.5M-14.5 -0.8H14.5M-14.5 0.8H14.5M-14.5 2.4H14.5" stroke="#b4b4b4" stroke-width="0.55"/><path d="M0 -4.1V4.1" stroke="#d0d0d0" stroke-width="0.7"/></g><g transform="translate(640.5 295) rotate(23)"><rect x="-15.5" y="-4.1" width="31" height="8.2" rx="1.5" fill="#727272" stroke="#bdbdbd" stroke-width="0.9"/><path d="M-14.5 -2.4H14.5M-14.5 -0.8H14.5M-14.5 0.8H14.5M-14.5 2.4H14.5" stroke="#b4b4b4" stroke-width="0.55"/><path d="M0 -4.1V4.1" stroke="#d0d0d0" stroke-width="0.7"/></g><g transform="translate(681.5 322.8) rotate(47)"><rect x="-15.5" y="-4.1" width="31" height="8.2" rx="1.5" fill="#727272" stroke="#bdbdbd" stroke-width="0.9"/><path d="M-14.5 -2.4H14.5M-14.5 -0.8H14.5M-14.5 0.8H14.5M-14.5 2.4H14.5" stroke="#b4b4b4" stroke-width="0.55"/><path d="M0 -4.1V4.1" stroke="#d0d0d0" stroke-width="0.7"/></g><g transform="translate(707 365) rotate(72)"><rect x="-15.5" y="-4.1" width="31" height="8.2" rx="1.5" fill="#727272" stroke="#bdbdbd" stroke-width="0.9"/><path d="M-14.5 -2.4H14.5M-14.5 -0.8H14.5M-14.5 0.8H14.5M-14.5 2.4H14.5" stroke="#b4b4b4" stroke-width="0.55"/><path d="M0 -4.1V4.1" stroke="#d0d0d0" stroke-width="0.7"/></g><g transform="translate(712.6 413) rotate(-94)"><rect x="-15.5" y="-4.1" width="31" height="8.2" rx="1.5" fill="#727272" stroke="#bdbdbd" stroke-width="0.9"/><path d="M-14.5 -2.4H14.5M-14.5 -0.8H14.5M-14.5 0.8H14.5M-14.5 2.4H14.5" stroke="#b4b4b4" stroke-width="0.55"/><path d="M0 -4.1V4.1" stroke="#d0d0d0" stroke-width="0.7"/></g><g transform="translate(574.5 543) rotate(5)"><rect x="-15.5" y="-4.1" width="31" height="8.2" rx="1.5" fill="#727272" stroke="#bdbdbd" stroke-width="0.9"/><path d="M-14.5 -2.4H14.5M-14.5 -0.8H14.5M-14.5 0.8H14.5M-14.5 2.4H14.5" stroke="#b4b4b4" stroke-width="0.55"/><path d="M0 -4.1V4.1" stroke="#d0d0d0" stroke-width="0.7"/></g><circle cx="662" cy="307" r="3.3" fill="none" stroke="#e0e0e0" stroke-width="1.3"/><path d="M663.5 303.5l1.5-1.5" stroke="#d0d0d0" stroke-width="0.8"/><circle cx="602.7" cy="545.5" r="3.3" fill="none" stroke="#e0e0e0" stroke-width="1.3"/><path d="M604.2 542.0l1.5-1.5" stroke="#d0d0d0" stroke-width="0.8"/><circle cx="779.7" cy="543.2" r="3.3" fill="none" stroke="#e0e0e0" stroke-width="1.3"/><path d="M781.2 539.7l1.5-1.5" stroke="#d0d0d0" stroke-width="0.8"/><g><path d="M518.2 352.0L518.3 354.0L516.7 355.8L517.4 357.8L517.3 359.7L517.2 361.7L514.4 362.8L514.2 364.8L512.7 366.1L513.7 368.7L512.2 370.1L509.2 370.3L510.4 373.4L508.9 374.7L506.8 375.3L505.3 376.4L502.9 376.4L501.3 377.1L500.9 379.6L498.7 379.4L497.5 380.9L496.1 382.2L494.3 382.7L493.2 385.1L491.5 386.0L490.0 388.2L488.0 388.1L486.1 389.2L484.0 389.3L482.0 390.1L479.9 389.6L477.9 388.9L475.5 390.9L473.4 390.3L471.5 389.1L469.8 387.9L468.4 385.7L466.8 384.3L465.2 383.3L464.0 381.5L461.2 382.1L460.4 379.9L458.0 379.7L457.6 377.3L454.8 377.2L453.6 375.5L454.4 372.4L452.5 371.4L449.3 371.0L449.2 368.7L446.6 367.6L447.3 365.0L447.5 362.9L445.1 361.4L444.1 359.4L445.5 357.1L446.0 355.0L445.3 353.0L443.6 350.9L444.7 348.9L447.3 347.2L447.6 345.2L448.8 343.5L449.8 341.9L448.4 339.4L451.2 338.4L451.1 336.3L452.4 334.8L454.1 333.7L453.8 331.1L456.5 330.8L456.4 328.3L458.9 328.1L459.6 326.1L461.5 325.5L462.9 324.3L463.3 321.4L465.4 321.0L467.9 321.7L468.9 319.5L471.5 321.0L473.1 320.1L474.6 318.4L476.6 318.9L478.6 320.4L480.1 317.4L482.1 319.8L483.8 319.4L485.8 317.6L487.5 318.8L489.4 318.8L491.2 319.3L493.2 319.1L495.8 317.6L497.5 318.7L500.1 318.0L501.9 319.1L504.1 319.5L507.1 319.1L508.1 321.4L510.1 322.4L512.4 323.3L512.2 326.4L513.4 328.2L516.4 328.8L517.1 331.0L516.2 334.0L516.5 336.1L518.5 337.5L519.4 339.4L517.3 342.2L519.8 343.7L519.6 345.9L518.7 348.0L518.0 350.1Z" fill="none" stroke="#5c9e28" stroke-width="0.9"/><path d="M482.5 352.0L485.6 352.0M485.6 352.0L488.8 351.5M488.8 351.5L491.9 351.4M491.9 351.4L495.3 353.3M491.9 351.4L495.0 351.7M495.0 351.7L499.7 348.9M495.0 351.7L498.1 352.2M498.1 352.2L501.2 349.7M498.1 352.2L501.2 351.9M501.2 351.9L504.4 353.2M501.2 351.9L504.3 351.1M504.3 351.1L507.2 348.6M482.5 352.0L484.8 354.8M484.8 354.8L487.0 357.6M487.0 357.6L488.4 360.9M488.4 360.9L492.8 363.5M488.4 360.9L490.1 364.1M490.1 364.1L496.1 366.7M490.1 364.1L492.2 367.0M492.2 367.0L495.0 369.3M495.0 369.3L501.5 368.3M495.0 369.3L497.5 371.9M482.5 352.0L481.1 355.3M481.1 355.3L478.9 358.2M478.9 358.2L476.1 360.6M476.1 360.6L475.9 366.6M476.1 360.6L473.2 362.7M473.2 362.7L472.3 366.7M473.2 362.7L470.1 364.6M470.1 364.6L466.7 365.8M466.7 365.8L463.3 367.1M482.5 352.0L479.2 353.9M479.2 353.9L476.6 356.5M476.6 356.5L473.5 358.7M473.5 358.7L472.0 363.4M473.5 358.7L470.2 360.6M470.2 360.6L466.2 360.5M470.2 360.6L467.2 362.8M467.2 362.8L465.2 369.4M467.2 362.8L464.3 365.2M464.3 365.2L461.5 367.7M461.5 367.7L456.8 367.7M482.5 352.0L478.3 351.1M478.3 351.1L474.3 349.3M474.3 349.3L470.3 347.8M470.3 347.8L466.9 343.9M470.3 347.8L466.1 346.7M466.1 346.7L461.8 346.7M461.8 346.7L458.3 343.0M461.8 346.7L457.4 346.8M457.4 346.8L453.2 346.0M453.2 346.0L448.4 339.9M482.5 352.0L480.0 348.8M480.0 348.8L478.3 345.2M478.3 345.2L476.0 341.8M476.0 341.8L476.5 336.2M476.0 341.8L474.4 338.1M474.4 338.1L470.1 335.4M474.4 338.1L473.4 334.2M473.4 334.2L466.0 330.0M473.4 334.2L471.5 330.6M471.5 330.6L474.2 324.0M471.5 330.6L469.0 327.4M469.0 327.4L461.6 326.3M482.5 352.0L482.1 348.9M482.1 348.9L482.1 345.7M482.1 345.7L482.3 342.6M482.3 342.6L482.5 339.5M482.5 339.5L482.0 336.4M482.0 336.4L481.9 333.2M481.9 333.2L486.1 329.4M481.9 333.2L481.1 330.2M481.1 330.2L477.2 326.7M482.5 352.0L486.7 350.9M486.7 350.9L490.8 349.7M490.8 349.7L495.1 349.0M495.1 349.0L501.7 343.5M495.1 349.0L499.4 349.4M499.4 349.4L503.6 349.9M503.6 349.9L508.0 350.0M508.0 350.0L512.2 351.0M512.2 351.0L518.1 349.9" fill="none" stroke="#5c9e28" stroke-width="0.9" stroke-linecap="round"/><path d="M482.5 352.0L484.0 352.3M484.0 352.3L485.6 352.4M485.6 352.4L487.2 352.7M487.2 352.7L489.3 352.2M487.2 352.7L488.6 353.4M488.6 353.4L491.4 351.9M488.6 353.4L490.0 354.0M490.0 354.0L490.7 356.4M490.0 354.0L491.2 355.1M491.2 355.1L493.8 355.3M491.2 355.1L492.2 356.3M492.2 356.3L495.2 357.0M482.5 352.0L483.3 353.4M483.3 353.4L483.9 354.9M483.9 354.9L484.1 356.5M484.1 356.5L486.2 357.9M484.1 356.5L484.2 358.1M484.2 358.1L485.9 360.1M484.2 358.1L484.7 359.6M484.7 359.6L485.2 361.1M485.2 361.1L487.6 362.7M485.2 361.1L486.1 362.4M486.1 362.4L485.3 365.4M482.5 352.0L481.8 353.4M481.8 353.4L481.3 354.9M481.3 354.9L480.4 356.2M480.4 356.2L479.2 357.2M479.2 357.2L478.3 359.7M479.2 357.2L477.8 357.9M477.8 357.9L476.6 359.4M477.8 357.9L476.7 359.0M476.7 359.0L474.3 359.5M476.7 359.0L475.6 360.0M475.6 360.0L472.8 360.0M482.5 352.0L481.2 351.5M481.2 351.5L480.0 350.8M480.0 350.8L478.8 350.0M478.8 350.0L476.1 350.1M478.8 350.0L477.7 349.1M477.7 349.1L476.5 348.4M476.5 348.4L475.4 347.5M475.4 347.5L474.3 346.7M474.3 346.7L471.3 346.5M482.5 352.0L481.9 350.6M481.9 350.6L481.5 349.2M481.5 349.2L480.9 347.9M480.9 347.9L481.6 345.3M480.9 347.9L480.1 346.6M480.1 346.6L478.0 345.4M480.1 346.6L479.1 345.5M479.1 345.5L478.1 344.4M478.1 344.4L477.2 343.3M477.2 343.3L474.9 343.1M482.5 352.0L483.0 350.1M483.0 350.1L483.9 348.5M483.9 348.5L484.8 346.8M484.8 346.8L484.8 343.1M484.8 346.8L486.2 345.4M486.2 345.4L487.2 343.8M487.2 343.8L489.0 342.5M487.2 343.8L488.0 342.1M488.0 342.1L490.9 340.6M488.0 342.1L488.4 340.2" fill="none" stroke="#5c9e28" stroke-width="2.2" stroke-linecap="round"/><ellipse cx="482.5" cy="352" rx="6.1" ry="4.0" fill="#5c9e28"/><path d="M737.8 474.3L737.0 476.2L736.6 478.1L737.4 480.1L735.4 481.7L737.7 484.2L736.8 486.0L735.9 487.8L735.7 489.9L734.3 491.4L733.0 492.9L732.7 495.0L731.5 496.7L731.7 499.4L730.1 500.8L727.6 501.2L727.7 504.3L725.8 505.4L724.2 506.8L722.6 508.1L720.1 508.0L718.9 510.3L716.9 511.0L714.6 511.0L712.7 511.6L710.6 511.9L708.3 511.0L706.5 512.2L704.3 510.1L702.4 511.0L700.4 511.4L698.6 509.9L696.5 510.9L694.4 511.6L692.3 511.4L690.7 509.9L687.9 511.6L686.2 510.2L684.7 508.6L682.4 508.7L680.7 507.4L679.0 506.1L677.7 504.4L675.0 504.4L674.5 501.9L673.3 500.3L672.2 498.5L670.8 497.0L672.7 493.4L670.6 492.5L669.8 490.7L670.9 488.2L670.2 486.5L671.0 484.4L670.3 482.8L669.4 481.2L670.0 479.4L669.2 477.7L666.8 476.1L667.6 474.3L667.4 472.5L665.7 470.5L666.8 468.7L665.3 466.5L666.5 464.8L666.1 462.6L668.6 461.5L667.5 458.9L667.7 456.8L670.4 456.0L668.9 452.7L671.9 452.4L672.3 450.1L674.2 449.2L674.8 446.9L675.9 445.2L678.5 445.1L678.3 441.4L680.9 441.5L682.4 439.9L684.0 438.5L686.1 438.1L688.0 437.3L689.6 435.2L691.7 434.8L694.0 435.0L695.9 433.2L698.2 434.4L700.4 435.3L702.5 434.8L704.5 435.9L706.5 436.2L708.8 435.2L710.4 437.4L712.7 437.0L714.2 438.7L715.0 442.2L717.7 440.8L719.1 442.4L719.0 446.2L721.8 445.3L722.1 447.9L723.5 449.1L725.9 449.2L725.5 452.1L727.4 452.7L729.8 453.2L730.6 455.0L731.2 456.8L733.8 457.4L734.6 459.3L735.0 461.2L734.5 463.4L736.8 464.6L737.0 466.6L736.7 468.6L736.5 470.5L738.2 472.3Z" fill="none" stroke="#5c9e28" stroke-width="0.9"/><path d="M701.4 474.3L705.2 473.7M705.2 473.7L709.0 472.9M709.0 472.9L712.7 471.7M712.7 471.7L719.6 473.4M712.7 471.7L716.5 471.1M716.5 471.1L720.6 474.1M716.5 471.1L720.1 469.7M720.1 469.7L723.9 468.9M723.9 468.9L730.1 471.1M723.9 468.9L727.8 468.7M727.8 468.7L732.8 463.6M701.4 474.3L703.7 477.0M703.7 477.0L705.3 480.2M705.3 480.2L706.2 483.6M706.2 483.6L709.0 487.4M706.2 483.6L708.0 486.7M708.0 486.7L711.7 488.2M708.0 486.7L710.4 489.3M710.4 489.3L715.6 489.7M710.4 489.3L713.0 491.8M713.0 491.8L713.5 496.0M713.0 491.8L714.9 494.8M701.4 474.3L700.7 478.7M700.7 478.7L699.2 483.0M699.2 483.0L697.9 487.2M697.9 487.2L696.9 491.6M696.9 491.6L701.4 499.8M696.9 491.6L696.4 496.0M696.4 496.0L699.4 501.7M696.4 496.0L696.9 500.5M696.9 500.5L698.5 504.6M698.5 504.6L695.6 510.9M701.4 474.3L698.9 476.3M698.9 476.3L696.0 477.6M696.0 477.6L693.0 478.7M693.0 478.7L687.8 476.5M693.0 478.7L690.2 480.3M690.2 480.3L685.9 479.2M690.2 480.3L687.1 481.0M687.1 481.0L681.3 478.3M687.1 481.0L684.0 481.0M684.0 481.0L680.8 481.1M701.4 474.3L697.8 475.0M697.8 475.0L694.1 474.8M694.1 474.8L690.6 473.7M690.6 473.7L688.9 470.1M690.6 473.7L687.2 472.2M687.2 472.2L682.3 474.1M687.2 472.2L683.8 471.0M683.8 471.0L677.1 472.0M683.8 471.0L680.7 469.0M680.7 469.0L676.6 468.8M680.7 469.0L677.3 467.7M677.3 467.7L670.7 470.2M701.4 474.3L698.2 471.8M698.2 471.8L694.5 470.3M694.5 470.3L690.5 469.6M690.5 469.6L686.8 468.1M686.8 468.1L679.1 468.5M686.8 468.1L683.0 466.7M683.0 466.7L679.1 465.4M679.1 465.4L675.2 464.4M675.2 464.4L669.5 458.4M701.4 474.3L702.0 470.4M702.0 470.4L703.0 466.6M703.0 466.6L704.6 462.9M704.6 462.9L705.9 459.2M705.9 459.2L707.6 455.7M707.6 455.7L710.0 452.5M710.0 452.5L713.0 449.9M701.4 474.3L704.8 472.2M704.8 472.2L708.5 470.7M708.5 470.7L712.1 469.0M712.1 469.0L715.0 465.1M712.1 469.0L715.9 467.7M715.9 467.7L721.8 468.6M715.9 467.7L719.5 465.9M719.5 465.9L722.4 463.2M722.4 463.2L723.8 458.5M722.4 463.2L726.0 461.3" fill="none" stroke="#5c9e28" stroke-width="0.9" stroke-linecap="round"/><path d="M701.4 474.3L702.8 474.5M702.8 474.5L704.2 475.0M704.2 475.0L705.6 475.4M705.6 475.4L706.9 476.6M705.6 475.4L706.9 475.9M706.9 475.9L709.7 475.1M706.9 475.9L708.3 476.3M708.3 476.3L709.5 477.1M709.5 477.1L709.9 479.3M709.5 477.1L710.8 477.8M701.4 474.3L702.6 475.9M702.6 475.9L703.4 477.7M703.4 477.7L704.4 479.4M704.4 479.4L707.2 480.2M704.4 479.4L705.3 481.1M705.3 481.1L704.6 483.2M705.3 481.1L705.8 483.1M705.8 483.1L705.8 485.1M705.8 485.1L705.8 487.0M705.8 487.0L704.3 488.9M701.4 474.3L701.2 475.9M701.2 475.9L700.6 477.5M700.6 477.5L700.0 479.0M700.0 479.0L698.4 480.0M700.0 479.0L699.3 480.6M699.3 480.6L700.6 483.5M699.3 480.6L698.4 481.9M698.4 481.9L695.8 482.6M698.4 481.9L697.1 483.0M697.1 483.0L697.2 485.8M697.1 483.0L695.7 483.8M695.7 483.8L694.3 486.8M701.4 474.3L699.6 475.2M699.6 475.2L697.8 476.0M697.8 476.0L695.9 476.9M695.9 476.9L693.0 476.5M695.9 476.9L694.1 477.6M694.1 477.6L692.1 478.2M692.1 478.2L690.9 480.2M692.1 478.2L690.2 478.9M690.2 478.9L689.2 480.8M690.2 478.9L688.4 479.7M701.4 474.3L700.2 472.9M700.2 472.9L698.6 472.0M698.6 472.0L697.4 470.6M697.4 470.6L695.9 469.5M695.9 469.5L695.2 465.9M695.9 469.5L694.7 468.2M694.7 468.2L693.7 466.7M693.7 466.7L691.6 465.7M693.7 466.7L692.8 465.0M692.8 465.0L693.5 461.8M701.4 474.3L701.7 472.3M701.7 472.3L701.6 470.3M701.6 470.3L701.0 468.4M701.0 468.4L698.9 466.3M701.0 468.4L700.8 466.4M700.8 466.4L699.7 464.5M700.8 466.4L701.2 464.4M701.2 464.4L699.8 460.8M701.2 464.4L702.1 462.6M702.1 462.6L700.9 458.9M702.1 462.6L702.9 460.7M702.9 460.7L706.1 459.0" fill="none" stroke="#5c9e28" stroke-width="2.2" stroke-linecap="round"/><ellipse cx="701.4" cy="474.3" rx="6.3" ry="4.1" fill="#5c9e28"/><path d="M609.0 449.3L607.3 451.2L606.2 452.9L605.6 454.7L605.4 456.5L605.2 458.4L604.7 460.3L602.7 461.3L601.9 462.9L600.6 464.2L598.8 464.9L598.6 467.4L596.2 467.3L595.2 469.1L593.3 469.4L591.7 470.2L590.5 472.4L588.7 473.1L586.8 474.3L584.8 474.0L582.7 477.0L580.4 477.6L578.2 476.7L575.8 477.0L574.0 475.2L572.7 472.6L570.1 473.1L568.3 471.8L568.1 468.5L566.2 467.6L565.3 465.7L564.6 463.7L564.4 461.5L561.5 461.0L562.5 458.4L560.1 457.2L560.9 454.9L559.7 453.2L561.1 451.1L560.1 449.3L560.5 447.4L562.4 445.8L560.3 443.5L563.3 442.4L562.3 440.1L562.6 438.2L565.0 437.4L566.2 436.1L565.2 432.8L568.3 433.2L568.0 429.9L569.9 429.1L570.7 426.6L573.0 426.6L575.0 426.2L576.5 424.3L578.5 423.2L580.8 424.3L582.8 424.6L584.8 423.6L586.9 423.6L589.0 423.9L590.2 427.0L592.8 425.7L594.8 426.0L596.9 426.6L598.4 428.2L600.3 429.1L602.3 430.0L602.5 432.8L604.4 433.8L604.5 436.2L606.7 437.3L606.1 439.8L607.2 441.5L607.2 443.5L606.5 445.6L606.8 447.4Z" fill="none" stroke="#5c9e28" stroke-width="0.9"/><path d="M583.8 449.3L585.7 450.3M585.7 450.3L587.5 451.5M587.5 451.5L589.0 453.0M589.0 453.0L589.3 456.3M589.0 453.0L590.6 454.5M590.6 454.5L590.9 457.8M590.6 454.5L591.8 456.3M591.8 456.3L592.5 458.3M592.5 458.3L592.2 460.8M592.5 458.3L592.6 460.5M592.6 460.5L591.4 462.5M583.8 449.3L584.8 451.5M584.8 451.5L585.9 453.6M585.9 453.6L587.1 455.7M587.1 455.7L585.8 460.2M587.1 455.7L588.7 457.5M588.7 457.5L590.5 459.1M590.5 459.1L591.8 461.2M591.8 461.2L594.8 462.2M591.8 461.2L593.3 463.0M593.3 463.0L598.4 463.3M583.8 449.3L583.6 452.3M583.6 452.3L583.2 455.3M583.2 455.3L582.8 458.3M582.8 458.3L578.3 462.3M582.8 458.3L583.0 461.3M583.0 461.3L584.0 464.1M584.0 464.1L583.7 468.1M584.0 464.1L585.3 466.9M585.3 466.9L589.3 469.1M585.3 466.9L586.5 469.6M586.5 469.6L588.9 471.8M583.8 449.3L581.7 450.5M581.7 450.5L579.3 451.1M579.3 451.1L576.9 451.0M576.9 451.0L572.7 453.1M576.9 451.0L574.5 450.6M574.5 450.6L572.6 447.8M574.5 450.6L572.1 450.3M572.1 450.3L569.4 451.9M572.1 450.3L569.9 449.3M569.9 449.3L567.8 448.1M567.8 448.1L567.1 445.0M583.8 449.3L580.8 449.8M580.8 449.8L577.8 449.4M577.8 449.4L574.9 448.6M574.9 448.6L570.9 449.5M574.9 448.6L572.1 447.3M572.1 447.3L567.7 449.0M572.1 447.3L569.2 446.5M569.2 446.5L565.7 448.0M569.2 446.5L566.3 446.0M566.3 446.0L563.4 445.1M563.4 445.1L560.2 446.4M583.8 449.3L583.3 447.2M583.3 447.2L582.1 445.3M582.1 445.3L581.1 443.4M581.1 443.4L581.9 441.0M581.1 443.4L579.8 441.6M579.8 441.6L578.3 440.1M578.3 440.1L574.2 438.8M578.3 440.1L577.3 438.2M577.3 438.2L578.6 434.8M577.3 438.2L575.8 436.6M583.8 449.3L583.5 447.2M583.5 447.2L583.7 445.0M583.7 445.0L583.7 442.8M583.7 442.8L581.6 440.1M583.7 442.8L584.1 440.7M584.1 440.7L582.2 437.2M584.1 440.7L584.1 438.5M584.1 438.5L585.8 436.3M584.1 438.5L584.3 436.4M584.3 436.4L584.2 434.2M584.2 434.2L585.5 431.8M583.8 449.3L585.7 448.3M585.7 448.3L587.8 447.7M587.8 447.7L589.8 447.0M589.8 447.0L592.9 448.4M589.8 447.0L591.9 446.5M591.9 446.5L593.8 445.4M593.8 445.4L595.1 442.2M593.8 445.4L595.8 444.7M595.8 444.7L598.1 442.5M595.8 444.7L597.9 444.3" fill="none" stroke="#5c9e28" stroke-width="0.9" stroke-linecap="round"/><path d="M583.8 449.3L585.0 449.7M585.0 449.7L586.3 450.1M586.3 450.1L587.5 450.7M587.5 450.7L588.4 452.0M587.5 450.7L588.6 451.3M588.6 451.3L589.6 452.2M589.6 452.2L590.2 454.5M589.6 452.2L590.5 453.1M590.5 453.1L591.6 453.9M583.8 449.3L584.1 450.3M584.1 450.3L584.4 451.2M584.4 451.2L584.4 452.2M584.4 452.2L583.5 453.0M584.4 452.2L584.5 453.2M584.5 453.2L583.0 454.7M584.5 453.2L584.4 454.2M584.4 454.2L584.1 455.2M584.1 455.2L582.9 456.3M584.1 455.2L583.9 456.2M583.9 456.2L584.5 457.5M583.8 449.3L583.1 450.3M583.1 450.3L582.5 451.4M582.5 451.4L581.8 452.4M581.8 452.4L579.4 453.1M581.8 452.4L580.9 453.2M580.9 453.2L580.1 454.2M580.1 454.2L579.1 455.0M579.1 455.0L577.6 454.7M579.1 455.0L578.2 455.8M578.2 455.8L577.9 457.6M583.8 449.3L582.5 449.2M582.5 449.2L581.2 449.2M581.2 449.2L579.9 449.0M579.9 449.0L578.4 447.9M579.9 449.0L578.6 449.2M578.6 449.2L577.0 447.7M578.6 449.2L577.3 449.4M577.3 449.4L576.0 449.5M576.0 449.5L574.5 450.7M576.0 449.5L574.8 449.9M583.8 449.3L583.2 448.1M583.2 448.1L582.9 446.9M582.9 446.9L582.2 445.8M582.2 445.8L582.4 443.2M582.2 445.8L581.5 444.7M581.5 444.7L579.5 443.8M581.5 444.7L580.7 443.6M580.7 443.6L579.2 442.7M580.7 443.6L579.9 442.6M579.9 442.6L577.9 442.0M579.9 442.6L579.0 441.6M579.0 441.6L578.5 440.0M583.8 449.3L584.2 448.1M584.2 448.1L584.5 446.8M584.5 446.8L585.1 445.7M585.1 445.7L587.0 444.6M585.1 445.7L585.4 444.4M585.4 444.4L585.9 443.3M585.9 443.3L584.8 440.8M585.9 443.3L586.2 442.0M586.2 442.0L585.5 440.4M586.2 442.0L586.3 440.8" fill="none" stroke="#5c9e28" stroke-width="2.2" stroke-linecap="round"/><ellipse cx="583.8" cy="449.3" rx="4.2" ry="2.7" fill="#5c9e28"/><path d="M615.4 380.0L616.3 381.6L616.1 383.2L616.9 384.9L614.9 386.1L615.5 387.9L613.8 389.0L614.9 391.1L612.5 391.8L613.1 393.8L611.3 394.6L611.3 396.4L610.0 397.4L609.5 399.0L608.8 400.5L607.5 401.5L605.9 402.1L604.3 402.7L604.1 404.9L602.0 404.7L601.5 406.9L600.1 407.6L597.8 406.5L597.1 409.0L595.6 409.5L593.6 408.3L592.1 408.9L590.8 410.3L589.0 409.0L587.6 410.1L586.0 410.5L584.5 408.2L583.1 408.0L581.5 408.5L580.0 408.3L578.6 407.7L576.7 408.6L575.1 408.3L573.9 407.2L572.7 406.0L571.4 405.3L569.2 405.9L569.1 403.3L566.7 403.8L566.2 402.0L565.2 400.8L564.1 399.7L562.1 399.4L560.8 398.3L561.1 396.2L560.2 394.9L558.5 394.0L557.9 392.5L556.0 391.5L557.0 389.4L555.5 388.2L555.5 386.5L556.3 384.7L555.6 383.2L555.6 381.6L556.8 380.0L555.3 378.4L556.4 376.9L556.6 375.3L557.0 373.8L556.7 372.1L556.2 370.3L556.6 368.7L559.6 368.3L559.1 366.3L559.2 364.5L560.3 363.3L562.7 363.1L562.2 360.8L563.3 359.5L564.8 358.8L565.9 357.6L568.0 357.8L569.5 357.3L570.9 356.7L571.2 354.3L573.2 355.0L574.4 353.9L576.0 353.9L577.3 353.3L578.7 352.9L580.1 352.0L581.4 350.7L582.9 350.0L584.5 351.1L586.0 350.6L587.5 350.5L589.2 349.7L590.7 350.2L592.4 350.0L593.8 350.9L595.6 350.5L597.4 350.4L598.7 351.4L600.4 351.8L602.0 352.4L603.1 353.6L604.6 354.5L604.9 356.7L607.0 356.7L607.5 358.5L608.9 359.4L608.6 361.7L610.7 362.0L611.2 363.6L612.2 364.9L612.6 366.4L613.4 367.8L614.9 368.9L615.3 370.5L614.7 372.3L616.1 373.6L615.7 375.3L616.7 376.8L615.5 378.5Z" fill="none" stroke="#5c9e28" stroke-width="0.9"/><path d="M596.3 353.6L596.7 355.2L596.8 357.4L598.6 356.0L598.6 358.0L599.2 358.9L600.1 359.3L601.7 358.7L601.8 360.2L603.3 359.8L604.9 359.7L604.4 361.6L605.7 361.8L606.7 362.3L607.8 362.7L606.6 364.9L607.2 365.7L607.7 366.5L609.5 366.5L609.2 367.9L610.6 368.3L609.3 370.0L609.8 370.8L613.0 370.7L612.9 371.9L610.9 373.5L611.7 374.3L612.5 375.2L613.6 376.0L612.3 377.2L614.1 378.1L613.9 379.2L614.0 380.2L611.5 381.2L611.1 382.1L612.3 383.2L613.7 384.5L612.7 385.4L611.0 386.0L612.6 387.4L611.2 388.1L610.0 388.7L611.2 390.3L611.2 391.4L609.3 391.6L609.1 392.6L610.5 394.6L608.7 394.7L609.3 396.4L607.9 396.7L608.3 398.4L607.6 399.2L605.7 398.9L604.3 398.9L605.3 401.6L603.1 400.6L602.9 402.0L601.5 401.8L600.9 402.7L599.8 403.0L598.5 402.7L597.8 403.5L597.4 405.0L596.5 405.4L595.0 404.4L593.9 404.1L593.7 407.0L592.6 406.9L591.1 404.8L590.3 406.1L589.2 405.5L588.5 408.0L587.5 408.8L586.3 406.8L585.4 405.4L584.3 406.6L583.3 407.3L582.2 407.2L581.4 405.9L580.1 407.2L578.9 407.8L578.4 405.5L577.5 405.1L576.4 405.1L575.5 404.6L573.7 406.0L573.2 404.8L571.6 405.4L572.3 402.1L569.9 403.9L568.9 403.5" fill="none" stroke="#5c9e28" stroke-width="0.9"/><path d="M584.5 389.6l2.8 2.1l0.2 1.1M583.1 392.1l2.2 3.1l1.1 1.5M578.8 392.6l3.5 2.9l0.1 2.3M589.7 390.7l4.8 3.4l1.4 1.8" fill="none" stroke="#5c9e28" stroke-width="1.1"/><path d="M556.1 489.0L557.2 490.6L556.6 492.1L555.9 493.6L557.5 495.5L556.2 496.9L555.4 498.3L554.6 499.6L553.5 500.8L554.2 502.9L553.3 504.2L551.7 505.1L550.7 506.3L549.7 507.5L548.5 508.4L547.6 509.7L546.8 511.1L545.4 512.0L544.4 513.2L542.9 513.8L541.9 515.1L540.3 515.5L538.7 515.8L537.6 517.4L535.8 517.0L534.3 517.6L533.2 520.1L531.5 520.1L529.8 520.0L528.1 518.1L526.5 518.3L525.0 517.8L523.3 518.8L521.7 518.3L520.4 517.1L518.8 516.9L517.0 517.3L516.0 515.5L514.3 515.3L512.9 514.7L511.7 513.6L511.6 511.1L509.9 510.8L507.9 510.8L506.8 509.6L505.9 508.3L505.3 506.8L505.5 504.8L503.0 504.6L502.2 503.2L500.8 502.2L502.1 499.9L500.1 499.0L500.2 497.4L499.5 495.9L498.5 494.6L498.9 492.9L497.3 491.5L497.3 489.8L499.4 488.2L497.9 486.6L498.0 485.0L499.0 483.5L499.3 482.0L498.7 480.2L500.0 478.9L500.8 477.5L501.0 475.9L502.8 475.1L501.6 472.5L503.3 471.6L504.3 470.4L505.6 469.4L507.1 468.7L508.2 467.6L508.9 466.0L509.9 464.6L511.5 464.2L513.0 463.6L514.0 462.1L516.0 462.5L517.2 461.3L518.7 460.7L520.6 461.6L521.6 459.0L523.3 459.4L524.9 458.8L526.6 460.8L528.1 460.6L529.7 458.8L531.3 459.2L532.6 461.1L534.1 461.4L535.6 461.7L537.2 461.8L538.7 462.2L540.0 463.0L541.3 464.0L543.0 464.1L544.6 464.5L545.6 465.9L546.5 467.2L547.3 468.6L549.0 469.0L550.1 470.2L552.0 470.8L551.3 473.2L551.7 474.7L553.1 475.7L554.4 476.8L555.3 478.1L553.8 480.3L555.3 481.4L554.5 483.2L556.9 484.3L557.4 485.8L555.3 487.5Z" fill="none" stroke="#5c9e28" stroke-width="0.9"/><path d="M538.0 462.5L539.1 462.8L538.9 465.7L539.9 466.0L540.9 466.2L542.1 466.2L541.7 468.6L543.9 467.4L544.1 468.7L544.9 469.4L544.5 471.2L546.6 470.5L546.9 471.6L546.8 473.0L549.2 472.4L549.8 473.2L549.1 474.9L550.9 475.0L549.5 477.0L551.3 477.1L551.4 478.2L552.3 478.9L553.0 479.7L552.4 481.0L551.2 482.4L551.6 483.3L553.8 483.8L552.0 485.2L553.7 485.9L551.9 487.1L552.9 488.0L553.0 488.9L553.4 489.9L554.4 491.0L553.2 491.9L552.1 492.7L552.2 493.7L552.6 494.8L554.1 496.3L554.4 497.5L553.7 498.4L551.5 498.6L550.7 499.3L550.9 500.6L550.8 501.6L551.1 503.0L549.6 503.2L548.6 503.8L548.0 504.6L547.4 505.3L547.9 507.1L546.9 507.7L546.4 508.6L544.8 508.4L544.1 509.1L545.0 511.9L544.3 512.8L541.7 510.9L541.9 513.2L540.2 512.4L539.7 513.7L538.4 513.2L537.7 514.4L536.5 514.0L535.9 515.8L534.6 515.1L533.6 515.1L532.7 516.1L531.7 516.5L530.4 515.1L529.5 516.5L528.4 514.0L527.4 516.0L526.5 513.7L525.4 514.8L524.3 515.3L523.2 516.0L522.5 514.0L521.7 513.3L521.0 512.3L519.2 514.6L518.4 513.8L518.4 511.2L516.7 512.6L516.2 511.4L515.7 510.2L513.8 511.5L514.5 508.7L513.7 508.2" fill="none" stroke="#5c9e28" stroke-width="0.9"/><path d="M527.2 498.7l5.0 4.4l1.5 2.3M518.9 491.3l2.5 3.5l-0.1 2.3M517.1 493.1l2.1 4.4l-0.3 1.5M526.3 491.8l2.2 5.0l0.6 2.6" fill="none" stroke="#5c9e28" stroke-width="1.1"/><path d="M666.6 553.0L665.6 554.5L664.3 555.9L665.8 557.8L663.5 558.7L665.4 561.0L664.2 562.3L663.7 563.9L663.2 565.5L661.8 566.5L661.3 568.3L659.3 568.5L658.6 570.4L656.6 570.4L654.9 570.5L653.7 571.6L652.2 572.1L651.0 573.6L649.3 574.0L647.5 572.2L646.0 573.0L644.4 573.3L642.6 574.2L641.1 573.3L640.1 571.2L637.8 572.8L636.8 571.0L636.2 569.0L634.8 568.4L633.0 568.3L632.2 566.8L631.6 565.3L630.7 564.1L630.2 562.7L628.7 561.8L628.3 560.3L626.4 559.4L626.9 557.6L627.5 555.9L627.3 554.5L627.0 553.0L624.9 551.3L625.2 549.7L626.2 548.2L627.4 547.0L626.9 545.1L628.5 544.1L628.3 542.2L628.5 540.3L630.1 539.4L632.3 539.3L632.3 536.9L634.5 537.2L635.0 535.1L637.3 535.8L638.0 533.7L639.8 534.0L641.4 533.8L642.8 532.7L644.4 533.1L646.0 532.9L647.7 532.0L649.1 533.2L650.8 533.1L652.3 533.6L653.4 535.1L654.7 536.0L655.9 536.9L657.6 537.0L659.1 537.7L659.8 539.2L661.9 539.4L661.5 541.7L664.1 541.9L664.0 543.8L663.6 545.7L666.2 546.4L666.5 548.1L664.6 550.1L666.0 551.4Z" fill="none" stroke="#5c9e28" stroke-width="0.9"/><path d="M652.9 535.3L653.3 537.0L654.7 536.5L655.0 538.0L655.4 539.1L656.6 539.1L657.9 539.1L657.8 540.8L659.0 540.9L659.5 541.8L661.6 541.5L661.8 542.7L662.5 543.5L660.9 545.6L662.4 545.9L664.8 546.1L663.7 547.6L664.1 548.6L665.0 549.5L663.9 550.8L664.8 551.7L663.1 552.8L665.1 553.9L663.8 554.8L663.2 555.8L665.5 557.3L664.2 558.1L664.3 559.3L661.7 559.4L663.0 561.1L660.2 560.8L660.1 561.8L659.4 562.4L660.6 564.6L658.8 564.4L659.5 566.4L657.2 565.5L657.3 567.2L657.0 568.5L656.4 569.5L654.9 569.2L653.6 568.8L652.3 568.3L652.0 570.3L650.6 569.0L649.9 570.3L648.8 569.8L647.8 570.0L646.8 569.2L645.9 569.5L645.0 569.4L644.0 569.7L643.1 569.5L641.6 571.8L641.0 569.7L640.2 569.0L639.8 567.7L638.8 567.5L637.6 567.7L636.1 568.4L635.4 567.6" fill="none" stroke="#5c9e28" stroke-width="0.9"/><path d="M646.9 555.7l3.6 4.5l-0.1 1.7M646.1 561.3l4.5 2.5l-1.7 2.4M639.8 560.1l4.0 4.4l-0.2 2.8M647.5 560.7l4.9 3.1l1.3 2.4" fill="none" stroke="#5c9e28" stroke-width="1.1"/><path d="M649.9 415.0L650.9 417.2L649.1 418.7L648.5 420.7L647.0 422.0L646.0 424.3L643.6 424.0L641.7 424.7L639.6 425.0L637.3 425.4L635.2 424.4L634.3 422.1L632.4 421.0L631.8 419.0L631.2 417.0L630.3 415.0L631.0 412.9L631.7 411.0L632.6 409.1L633.6 407.1L635.4 405.9L637.6 405.6L639.7 405.7L641.8 404.5L643.9 405.3L645.6 406.5L647.8 407.2L649.1 408.9L649.8 410.9L650.6 412.9Z" fill="none" stroke="#5c9e28" stroke-width="1"/><path d="M640.7 415.0L645.7 414.9L648.3 417.6L645.0 418.4M640.7 415.0L643.1 419.4L642.0 422.9L639.7 420.4M640.7 415.0L640.6 420.0L637.9 422.5L637.1 419.2M640.7 415.0L636.0 416.6L632.7 414.8L635.6 413.0M640.7 415.0L636.1 413.1L634.8 409.6L638.1 410.1M640.7 415.0L638.4 410.5L639.7 407.1L642.0 409.6M640.7 415.0L643.8 411.1L647.5 410.8L646.1 413.9" fill="none" stroke="#5c9e28" stroke-width="1.2"/><path d="M647.4 415.0L646.0 417.5L643.6 418.6L641.8 419.8L639.6 419.9L636.3 420.5L637.0 416.8L636.5 415.0L636.0 412.7L637.3 410.7L639.5 409.9L641.7 410.5L643.6 411.4L646.1 412.4Z" fill="none" stroke="#5c9e28" stroke-width="1"/><path d="M642.5 443.5L641.9 445.4L641.7 447.5L640.7 449.2L639.3 450.7L638.2 452.8L635.9 453.0L633.8 453.4L631.8 453.3L629.8 452.6L627.4 452.9L625.7 451.4L624.4 449.6L623.9 447.4L623.7 445.4L623.5 443.5L623.7 441.6L623.0 439.1L624.8 437.7L626.2 436.2L628.1 435.4L629.6 433.6L631.7 433.1L633.9 433.3L636.1 433.3L638.3 434.0L639.2 436.4L640.7 437.7L641.4 439.7L643.1 441.3Z" fill="none" stroke="#5c9e28" stroke-width="1"/><path d="M632.8 443.5L637.8 444.0L640.0 447.0L636.6 447.4M632.8 443.5L636.4 447.0L636.3 450.7L633.4 449.0M632.8 443.5L631.5 448.3L628.2 450.1L628.3 446.7M632.8 443.5L628.6 446.3L625.0 445.4L627.3 442.9M632.8 443.5L627.9 442.5L626.0 439.4L629.4 439.2M632.8 443.5L630.4 439.1L631.5 435.6L633.9 438.1M632.8 443.5L636.6 440.2L640.3 440.6L638.3 443.4" fill="none" stroke="#5c9e28" stroke-width="1.2"/><path d="M638.6 443.5L636.9 445.5L635.7 447.1L634.2 449.8L631.8 447.8L628.9 448.4L627.5 446.0L627.4 443.5L627.4 440.9L629.5 439.4L631.5 438.0L634.2 437.3L636.2 439.3L637.6 441.2Z" fill="none" stroke="#5c9e28" stroke-width="1"/><path d="M636.6 473.5L635.7 475.5L635.7 477.6L634.8 479.6L632.6 480.4L631.4 482.2L629.5 483.2L627.5 484.1L625.3 483.8L623.4 482.7L621.8 481.5L619.2 481.5L617.6 479.9L617.6 477.4L616.8 475.5L616.6 473.5L617.1 471.5L616.6 469.1L618.2 467.5L620.2 466.6L621.6 465.2L623.6 464.8L625.3 463.0L627.5 462.7L629.8 463.1L631.8 464.1L633.2 465.9L634.5 467.6L635.9 469.3L635.6 471.5Z" fill="none" stroke="#5c9e28" stroke-width="1"/><path d="M626.4 473.5L631.4 474.1L633.5 477.1L630.2 477.5M626.4 473.5L629.2 477.6L628.4 481.2L625.9 479.0M626.4 473.5L624.1 477.9L620.5 478.9L621.3 475.6M626.4 473.5L621.5 474.6L618.5 472.5L621.5 471.0M626.4 473.5L621.5 472.5L619.6 469.3L623.0 469.2M626.4 473.5L624.3 469.0L625.7 465.5L627.8 468.2M626.4 473.5L628.7 469.1L632.4 468.2L631.5 471.5" fill="none" stroke="#5c9e28" stroke-width="1.2"/><path d="M630.5 473.5L632.4 476.4L629.3 477.2L627.5 478.1L625.3 478.5L623.5 477.1L621.2 476.0L620.1 473.5L622.8 471.8L623.1 469.3L624.9 467.0L627.8 467.6L630.5 468.4L632.3 470.6Z" fill="none" stroke="#5c9e28" stroke-width="1"/><path d="M643.2 506.5L641.9 508.4L642.4 510.8L640.3 511.9L639.2 513.7L637.7 514.9L636.1 516.8L633.8 516.3L631.8 515.8L629.9 515.5L627.7 515.4L625.6 514.5L624.2 512.8L623.3 510.7L623.7 508.4L623.1 506.5L622.4 504.3L624.2 502.7L625.0 500.8L626.5 499.5L628.0 498.2L629.9 497.5L631.8 496.6L633.9 495.7L635.9 497.1L637.5 498.3L639.4 499.2L641.2 500.4L641.9 502.4L642.3 504.5Z" fill="none" stroke="#5c9e28" stroke-width="1"/><path d="M632.8 506.5L637.8 507.0L640.0 509.9L636.7 510.4M632.8 506.5L634.8 511.1L633.3 514.5L631.3 511.8M632.8 506.5L631.9 511.4L628.8 513.4L628.6 510.0M632.8 506.5L628.8 509.4L625.1 508.7L627.3 506.1M632.8 506.5L628.0 505.1L626.3 501.8L629.7 501.9M632.8 506.5L631.5 501.7L633.6 498.5L635.2 501.5M632.8 506.5L635.2 502.1L638.8 501.3L637.9 504.5" fill="none" stroke="#5c9e28" stroke-width="1.2"/><path d="M638.5 506.5L638.2 509.1L636.5 511.1L633.7 510.5L631.7 511.5L630.1 509.8L628.1 508.7L626.8 506.5L628.6 504.5L630.0 503.0L631.6 501.3L633.7 502.4L636.3 502.1L637.6 504.2Z" fill="none" stroke="#5c9e28" stroke-width="1"/><path d="M463.3 450.0L462.1 451.9L461.5 453.8L461.5 456.2L460.2 458.0L457.9 458.4L456.1 459.6L454.0 459.3L451.9 460.6L450.0 459.1L447.6 459.4L446.1 457.7L444.2 456.4L444.4 453.8L442.4 452.3L442.3 450.0L443.9 448.1L444.6 446.3L444.5 443.8L446.6 442.8L448.4 442.0L450.1 441.2L452.0 440.5L454.1 440.0L456.0 440.9L457.9 441.6L459.3 443.0L460.7 444.4L462.7 445.7L462.6 448.0Z" fill="none" stroke="#5c9e28" stroke-width="1"/><path d="M453.0 450.0L457.8 448.6L461.0 450.6L458.0 452.3M453.0 450.0L456.7 453.4L456.7 457.1L453.7 455.5M453.0 450.0L451.3 454.7L447.9 456.1L448.2 452.8M453.0 450.0L448.9 452.9L445.3 452.0L447.5 449.5M453.0 450.0L449.0 446.9L448.7 443.2L451.8 444.6M453.0 450.0L453.0 445.0L455.8 442.5L456.6 445.8M453.0 450.0L456.5 446.4L460.2 446.5L458.5 449.5" fill="none" stroke="#5c9e28" stroke-width="1.2"/><path d="M459.5 450.0L459.2 453.0L456.7 454.6L454.3 455.7L452.0 454.3L450.0 453.8L447.5 452.6L447.7 450.0L448.1 447.6L449.2 445.2L451.9 445.2L454.4 443.9L456.3 445.9L457.1 448.0Z" fill="none" stroke="#5c9e28" stroke-width="1"/><path d="M492.9 447.3L492.4 449.4L491.1 451.2L491.1 453.6L489.2 454.8L487.0 455.3L485.5 456.7L483.5 457.9L481.3 457.5L479.3 456.7L476.9 456.7L475.7 454.8L474.8 452.8L473.7 451.2L472.6 449.4L472.2 447.3L473.0 445.3L473.4 443.3L474.4 441.5L476.0 440.2L477.7 439.2L479.3 437.8L481.3 436.7L483.5 436.5L485.3 438.4L487.4 438.6L489.7 439.2L490.6 441.3L490.8 443.6L491.2 445.4Z" fill="none" stroke="#5c9e28" stroke-width="1"/><path d="M482.4 447.3L487.4 446.8L490.1 449.3L486.9 450.4M482.4 447.3L486.2 450.5L486.4 454.2L483.3 452.7M482.4 447.3L480.0 451.7L476.4 452.5L477.3 449.3M482.4 447.3L478.1 449.9L474.6 448.9L477.0 446.5M482.4 447.3L478.4 444.2L478.1 440.5L481.2 441.9M482.4 447.3L481.5 442.4L483.7 439.4L485.1 442.5M482.4 447.3L485.9 443.8L489.7 443.9L487.9 446.8" fill="none" stroke="#5c9e28" stroke-width="1.2"/><path d="M488.4 447.3L487.7 449.9L485.7 451.4L483.7 452.9L481.4 451.6L478.3 452.4L477.2 449.8L476.1 447.3L476.9 444.7L478.4 442.2L481.2 442.0L483.6 442.1L486.0 442.8L488.4 444.4Z" fill="none" stroke="#5c9e28" stroke-width="1"/><path d="M519.5 436.5L519.8 438.6L518.6 440.4L518.1 442.5L516.7 444.2L514.5 444.6L512.9 446.1L510.8 445.9L508.7 446.8L506.6 446.4L504.7 445.4L502.9 444.2L501.4 442.6L500.8 440.5L500.1 438.6L499.4 436.5L500.1 434.4L501.4 432.8L502.0 430.8L503.0 428.9L505.2 428.5L506.9 427.5L508.8 427.1L510.9 426.2L512.7 427.4L514.7 428.1L516.0 429.7L517.8 430.7L518.6 432.6L518.7 434.6Z" fill="none" stroke="#5c9e28" stroke-width="1"/><path d="M509.8 436.5L514.7 435.6L517.7 437.8L514.6 439.2M509.8 436.5L512.6 440.6L511.7 444.3L509.2 442.0M509.8 436.5L509.9 441.5L507.2 444.1L506.3 440.8M509.8 436.5L505.5 439.1L501.9 438.0L504.4 435.6M509.8 436.5L504.9 435.6L502.9 432.4L506.3 432.2M509.8 436.5L507.5 432.1L508.8 428.6L511.0 431.1M509.8 436.5L513.7 433.3L517.4 433.9L515.3 436.6" fill="none" stroke="#5c9e28" stroke-width="1.2"/><path d="M516.8 436.5L515.4 439.2L513.6 441.2L510.9 441.4L508.7 441.3L506.1 441.1L506.0 438.3L504.8 436.5L504.0 433.7L506.7 432.6L508.7 431.6L511.2 430.6L512.3 433.3L514.9 434.0Z" fill="none" stroke="#5c9e28" stroke-width="1"/><path d="M538.4 543.4L537.9 545.5L537.7 547.6L536.7 549.5L534.9 550.7L533.6 552.6L531.6 553.4L529.4 554.1L527.3 552.9L525.3 552.7L523.4 551.9L521.7 550.7L520.5 549.1L519.0 547.5L518.1 545.6L518.8 543.4L518.4 541.3L519.2 539.3L520.1 537.4L521.5 535.8L523.3 534.7L525.2 533.8L527.2 533.4L529.4 532.9L531.2 534.6L533.1 535.0L535.0 535.9L536.9 537.1L536.9 539.6L538.2 541.3Z" fill="none" stroke="#5c9e28" stroke-width="1"/><path d="M528.3 543.4L533.1 542.0L536.3 544.0L533.3 545.7M528.3 543.4L530.4 547.9L529.0 551.4L526.9 548.7M528.3 543.4L527.2 548.3L524.0 550.1L523.9 546.7M528.3 543.4L523.4 544.2L520.4 541.9L523.6 540.6M528.3 543.4L523.5 542.0L521.9 538.6L525.3 538.8M528.3 543.4L527.5 538.5L529.9 535.6L531.2 538.7M528.3 543.4L530.4 538.9L534.0 537.8L533.3 541.1" fill="none" stroke="#5c9e28" stroke-width="1.2"/><path d="M532.8 543.4L532.7 545.5L532.3 548.4L529.3 547.6L527.2 548.1L525.7 546.7L524.7 545.1L522.6 543.4L522.7 540.7L525.1 539.4L527.1 538.3L529.2 539.6L530.8 540.2L532.8 541.2Z" fill="none" stroke="#5c9e28" stroke-width="1"/><path d="M516.2 563.7L517.2 565.9L516.2 567.9L514.7 569.5L514.0 571.7L511.7 572.2L509.9 573.2L507.8 573.5L505.8 573.3L503.5 573.8L502.0 571.9L499.8 571.5L498.3 569.9L497.6 567.8L497.5 565.7L496.2 563.7L496.7 561.5L497.1 559.4L499.2 558.2L500.0 556.2L501.7 554.9L503.7 554.2L505.7 553.5L507.9 553.3L510.1 553.6L511.8 555.1L513.8 555.9L514.8 557.9L515.6 559.8L515.7 561.8Z" fill="none" stroke="#5c9e28" stroke-width="1"/><path d="M506.8 563.7L511.6 562.5L514.8 564.5L511.7 566.1M506.8 563.7L510.6 566.9L510.7 570.7L507.7 569.1M506.8 563.7L504.3 568.0L500.7 568.9L501.6 565.6M506.8 563.7L502.2 565.6L498.8 563.9L501.6 562.0M506.8 563.7L502.0 562.4L500.2 559.1L503.6 559.2M506.8 563.7L507.1 558.7L510.0 556.4L510.6 559.7M506.8 563.7L510.5 560.4L514.2 560.8L512.3 563.6" fill="none" stroke="#5c9e28" stroke-width="1.2"/><path d="M510.9 563.7L510.4 565.4L509.4 567.0L508.3 570.4L505.3 570.2L503.7 567.6L502.2 565.9L500.4 563.7L502.0 561.4L504.4 560.7L505.6 558.4L508.2 557.5L511.0 558.4L512.9 560.8Z" fill="none" stroke="#5c9e28" stroke-width="1"/><path d="M502.7 589.3L503.4 591.5L502.0 593.2L500.5 594.7L499.8 596.7L497.9 597.6L496.2 599.0L494.1 599.1L492.1 599.0L489.9 599.1L487.9 598.3L486.2 597.0L485.2 595.0L484.2 593.3L482.8 591.5L482.3 589.3L482.8 587.1L483.4 585.0L484.9 583.4L486.7 582.2L488.6 581.5L489.9 579.5L492.0 579.1L494.2 579.1L496.4 579.2L498.5 579.9L499.6 582.1L500.6 583.8L501.7 585.5L502.5 587.3Z" fill="none" stroke="#5c9e28" stroke-width="1"/><path d="M493.1 589.3L498.0 588.4L501.0 590.7L497.9 592.1M493.1 589.3L495.8 593.5L494.9 597.1L492.4 594.8M493.1 589.3L492.9 594.3L490.0 596.7L489.4 593.3M493.1 589.3L488.7 591.6L485.2 590.4L487.7 588.1M493.1 589.3L488.3 587.9L486.6 584.6L490.0 584.7M493.1 589.3L490.7 584.9L491.8 581.4L494.1 583.9M493.1 589.3L497.0 586.2L500.7 586.8L498.6 589.4" fill="none" stroke="#5c9e28" stroke-width="1.2"/><path d="M498.5 589.3L498.4 591.9L496.8 593.9L494.3 594.5L491.6 595.8L488.7 594.8L487.1 592.2L488.9 589.3L489.3 587.5L490.3 585.7L491.7 583.3L494.4 583.5L497.5 583.8L498.0 587.0Z" fill="none" stroke="#5c9e28" stroke-width="1"/></g><g stroke="#c80000" stroke-width="1.2" fill="none"><path d="M419 538.5H460M439.6 518.5V559"/><circle cx="439.6" cy="538.5" r="5.3"/></g></svg><div class="a" style="left:72px;top:748px;width:1083px;height:50px;background:#ececec"></div><div class="a" style="left:72px;top:748px;width:1082px;height:23px;background:#fff;border-top:1px solid #bfbfbf;border-bottom:1px solid #c8c8c8"></div><div class="t" style="left:77px;top:751px;font-size:13px;letter-spacing:0.15px;color:#0c0cc8"><i>Comando:</i> gb</div><div class="t" style="left:73px;top:779px;font-size:13px;color:#111">Comando:</div><div class="a" style="left:138px;top:776px;width:987px;height:18px;background:#fff"></div><div class="a" style="left:1127px;top:772px;width:26px;height:25px;border:1px solid #bcbcbc;background:linear-gradient(#f4f4f4,#e6e6e6)"></div><div class="a" style="left:1133px;top:780px;width:14px;height:10px;border:1px solid #333;border-top:2px solid #111"></div><div class="a" style="left:0;top:798px;width:1500px;height:46px;background:#dcdcdc"></div><div class="t" style="left:2px;top:809px;font-size:9px;letter-spacing:0.4px;color:#1a1a1a">47.0937,12.7851</div><div class="t" style="left:2px;top:829px;font-size:9px;letter-spacing:0.4px;color:#1a1a1a">@47.0937,12.7851</div><div class="a" style="left:253px;top:802px;width:1px;height:40px;background:#8a8a8a"></div><div class="t" style="left:256px;top:809px;font-size:9px;letter-spacing:0.6px;color:#1a1a1a">48.7984&lt;15°</div><div class="t" style="left:256px;top:829px;font-size:9px;letter-spacing:0.6px;color:#1a1a1a">@48.7984&lt;15°</div><div class="t" style="left:949px;top:819px;font-size:9px;letter-spacing:0.54px;color:#1a1a1a">Nessun entità selezionate.</div><svg style="left:710px;top:800px" width="32" height="40" viewBox="710 800 32 40"><rect x="717.5" y="806.3" width="17" height="29.2" rx="8.5" fill="#fff" stroke="#555" stroke-width="1"/><path d="M717.5 820.5Q726 817.5 734.5 820.5" fill="none" stroke="#444" stroke-width="1.6"/><rect x="724.3" y="807.8" width="3.4" height="8" rx="1.7" fill="#fff" stroke="#444" stroke-width="1"/><path d="M726 815.8V819" stroke="#444" stroke-width="1"/></svg><div class="a" style="left:507px;top:819px;width:6px;height:6px;border-radius:3px;background:#c9c9c9"></div><div class="a" style="left:940px;top:819px;width:6px;height:6px;border-radius:3px;background:#c9c9c9"></div><div class="a" style="left:1269px;top:819px;width:6px;height:6px;border-radius:3px;background:#c9c9c9"></div><div class="a" style="left:1155px;top:108px;width:300px;height:690px;background:#ececec"></div><div class="a" style="left:1155px;top:108px;width:300px;height:21px;background:linear-gradient(#ededed,#d9d9d9)"></div><div class="t" style="left:1172px;width:300px;text-align:center;top:113px;font-size:12px;color:#333">Elenco dei blocchi</div><div class="a" style="left:1157px;top:111px;width:14px;height:14px;border-radius:7px;background:#6e6e6e"></div><div class="a" style="left:1175px;top:111px;width:14px;height:14px;border-radius:7px;background:#6e6e6e"></div><svg style="left:1157px;top:111px" width="14" height="14"><path d="M4.2 4.2L9.8 9.8M9.8 4.2L4.2 9.8" stroke="#e8e8e8" stroke-width="1.8"/></svg><svg style="left:1175px;top:111px" width="14" height="14"><rect x="3.5" y="6" width="5" height="4" fill="none" stroke="#e8e8e8" stroke-width="1.2"/><path d="M5.5 5.5V3.8H10.5V7.8H9" fill="none" stroke="#e8e8e8" stroke-width="1.2"/></svg><div class="a" style="left:1155px;top:310px;width:300px;height:21px;background:linear-gradient(#ededed,#d9d9d9)"></div><div class="t" style="left:1172px;width:300px;text-align:center;top:315px;font-size:12px;color:#333">Elenco dei livelli</div><div class="a" style="left:1157px;top:312px;width:14px;height:14px;border-radius:7px;background:#6e6e6e"></div><div class="a" style="left:1175px;top:312px;width:14px;height:14px;border-radius:7px;background:#6e6e6e"></div><svg style="left:1157px;top:312px" width="14" height="14"><path d="M4.2 4.2L9.8 9.8M9.8 4.2L4.2 9.8" stroke="#e8e8e8" stroke-width="1.8"/></svg><svg style="left:1175px;top:312px" width="14" height="14"><rect x="3.5" y="6" width="5" height="4" fill="none" stroke="#e8e8e8" stroke-width="1.2"/><path d="M5.5 5.5V3.8H10.5V7.8H9" fill="none" stroke="#e8e8e8" stroke-width="1.2"/></svg><div class="a" style="left:1155px;top:156px;width:299px;height:152px;background:#fff;border-left:1px solid #c4c4c4;border-bottom:1px solid #bdbdbd"></div><div class="a" style="left:1155px;top:358px;width:299px;height:440px;background:#fff;border-left:1px solid #c4c4c4"></div><div class="t" style="left:1205px;top:160px;font-size:13px;color:#111">Model (*Model_Space)</div><div class="t" style="left:1205px;top:180px;font-size:13px;color:#111">Layout1 (*Paper_Space)</div><div class="t" style="left:1205px;top:200px;font-size:13px;color:#111">Albero A</div><div class="t" style="left:1205px;top:220px;font-size:13px;color:#111">Albero B</div><div class="t" style="left:1205px;top:240px;font-size:13px;color:#111">Cestino</div><div class="t" style="left:1205px;top:260px;font-size:13px;color:#111">Panchina</div><div class="a" style="left:1156px;top:418px;width:297px;height:20px;background:#0b50d8"></div><div class="a" style="left:1161px;top:364px;width:16px;height:9px;background:#ffffff;border:1px solid #222"></div><div class="t" style="left:1183px;top:361px;font-size:13px;color:#111">0</div><div class="a" style="left:1161px;top:384px;width:16px;height:9px;background:#5a9a2a;border:1px solid #222"></div><div class="t" style="left:1183px;top:381px;font-size:13px;color:#111">Piante</div><div class="a" style="left:1161px;top:404px;width:16px;height:9px;background:#d2a766;border:1px solid #222"></div><div class="t" style="left:1183px;top:401px;font-size:13px;color:#111">Sentieri</div><div class="a" style="left:1161px;top:424px;width:16px;height:9px;background:#b4c2d2;border:1px solid #222"></div><div class="t" style="left:1183px;top:421px;font-size:13px;color:#fff">Strutture</div><div class="a" style="left:1455px;top:108px;width:45px;height:690px;background:linear-gradient(90deg,#eeeeee,#e4e4e4 50%,#c8c8c8);border-left:1px solid #d0d0d0"></div><svg style="left:1155px;top:108px" width="345" height="690" viewBox="1155 108 345 690"><defs><linearGradient id="gdock" x1="0" y1="0" x2="0" y2="1"><stop offset="0" stop-color="#f4f4f4"/><stop offset="0.5" stop-color="#ebebeb"/><stop offset="1" stop-color="#f2f2f2"/></linearGradient><linearGradient id="gtitle" x1="0" y1="0" x2="0" y2="1"><stop offset="0" stop-color="#ececec"/><stop offset="1" stop-color="#d6d6d6"/></linearGradient></defs><rect x="1155" y="129" width="300" height="27" fill="#c4c4c4"/><rect x="1156.1" y="130.1" width="36.09999999999995" height="25.3" fill="url(#gdock)" stroke="#a9a9a9" stroke-width="1.2"/><rect x="1193.3999999999999" y="130.1" width="36.09999999999995" height="25.3" fill="url(#gdock)" stroke="#a9a9a9" stroke-width="1.2"/><rect x="1230.6999999999998" y="130.1" width="36.20000000000009" height="25.3" fill="url(#gdock)" stroke="#a9a9a9" stroke-width="1.2"/><rect x="1268.1" y="130.1" width="36.09999999999995" height="25.3" fill="url(#gdock)" stroke="#dcdcdc" stroke-width="1"/><rect x="1305.3999999999999" y="130.1" width="36.59999999999995" height="25.3" fill="url(#gdock)" stroke="#dcdcdc" stroke-width="1"/><rect x="1343.1999999999998" y="130.1" width="36.20000000000009" height="25.3" fill="url(#gdock)" stroke="#a9a9a9" stroke-width="1.2"/><rect x="1380.6" y="130.1" width="36.399999999999906" height="25.3" fill="url(#gdock)" stroke="#dcdcdc" stroke-width="1"/><rect x="1418.1999999999998" y="130.1" width="35.70000000000009" height="25.3" fill="url(#gdock)" stroke="#a9a9a9" stroke-width="1.2"/><path d="M1166.5 142.8C1169.875 135.5 1178.5 135.22 1181.5 142.3C1178.5 148.94 1169.875 148.94 1166.5 142.8Z" fill="#000"/><path d="M1170.4 142.2A3.6 3.6 0 0 0 1177.6 142.2" fill="none" stroke="#fff" stroke-width="1.7"/><path d="M1172.8 140.7L1173.8 143.3" stroke="#fff" stroke-width="0.7"/><path d="M1203.5 142.8C1206.875 135.5 1215.5 135.22 1218.5 142.3C1215.5 148.94 1206.875 148.94 1203.5 142.8Z" fill="#9a9a9a"/><path d="M1207.4 142.2A3.6 3.6 0 0 0 1214.6 142.2" fill="none" stroke="#ececec" stroke-width="1.7"/><path d="M1209.8 140.7L1210.8 143.3" stroke="#ececec" stroke-width="0.7"/><path d="M1243 141.3h4.5v-4.5h3v4.5h4.5v3h-4.5v4.5h-3v-4.5h-4.5z" fill="#ff0000" stroke="#8a0000" stroke-width="0.5"/><rect x="1280.0" y="141.4" width="12" height="3.2" fill="#f08a8a" stroke="none" stroke-width="0.5"/><text x="1324" y="148" font-size="12.5" text-anchor="middle" fill="#8a8a8a" font-family="Liberation Sans">a b</text><path d="M1323.7 136.5V149" stroke="#8a8a8a" stroke-width="0.8"/><g transform="translate(1353.9 149.7) rotate(-43.4)"><path d="M0 0L3.5 -1.7H19.807069445023814V1.7H3.5Z" fill="#e0a838" stroke="#7a5010" stroke-width="0.6"/><path d="M0 0L3.5 -1.7V1.7Z" fill="#f0d8a8" stroke="#7a5010" stroke-width="0.4"/><path d="M0 0L1.3 -0.5V0.5Z" fill="#333"/><rect x="16.807069445023814" y="-1.7" width="3" height="3.4" fill="#e02020"/></g><rect x="1393" y="136.5" width="12" height="12.5" fill="#e4e4e4" stroke="#d0d0d0" stroke-width="0.6"/><path d="M1396 138.5H1399.5V145" fill="none" stroke="#7aa0f0" stroke-width="2"/><path d="M1396 144.5L1399.5 149L1403 144.5Z" fill="#7aa0f0"/><rect x="1431.5" y="138.3" width="9.5" height="9.5" fill="#f4b8a8" stroke="#e04a3a" stroke-width="1.6"/><path d="M1434 140.8L1438.5 145.3M1438.5 140.8L1434 145.3" stroke="#fff" stroke-width="1.4"/><rect x="1155" y="331" width="300" height="26" fill="#c4c4c4"/><rect x="1156.1" y="331.6" width="58.3" height="24.8" fill="url(#gdock)" stroke="#a9a9a9" stroke-width="1.2"/><rect x="1215.6" y="331.6" width="58.70000000000009" height="24.8" fill="url(#gdock)" stroke="#a9a9a9" stroke-width="1.2"/><rect x="1275.5" y="331.6" width="58.8" height="24.8" fill="url(#gdock)" stroke="#a9a9a9" stroke-width="1.2"/><rect x="1335.5" y="331.6" width="58.69999999999986" height="24.8" fill="url(#gdock)" stroke="#a9a9a9" stroke-width="1.2"/><rect x="1395.3999999999999" y="331.6" width="58.50000000000004" height="24.8" fill="url(#gdock)" stroke="#a9a9a9" stroke-width="1.2"/><path d="M1177.5 344.1C1180.875 336.8 1189.5 336.52000000000004 1192.5 343.6C1189.5 350.24 1180.875 350.24 1177.5 344.1Z" fill="#000"/><path d="M1181.4 343.5A3.6 3.6 0 0 0 1188.6 343.5" fill="none" stroke="#fff" stroke-width="1.7"/><path d="M1183.8 342.0L1184.8 344.6" stroke="#fff" stroke-width="0.7"/><path d="M1237.5 344.1C1240.875 336.8 1249.5 336.52000000000004 1252.5 343.6C1249.5 350.24 1240.875 350.24 1237.5 344.1Z" fill="#9a9a9a"/><path d="M1241.4 343.5A3.6 3.6 0 0 0 1248.6 343.5" fill="none" stroke="#ececec" stroke-width="1.7"/><path d="M1243.8 342.0L1244.8 344.6" stroke="#ececec" stroke-width="0.7"/><path d="M1299 342.5h4.5v-4.5h3v4.5h4.5v3h-4.5v4.5h-3v-4.5h-4.5z" fill="#ff0000" stroke="#8a0000" stroke-width="0.5"/><rect x="1359.0" y="342.4" width="12" height="3.2" fill="#ff1010" stroke="#a00000" stroke-width="0.5"/><g transform="translate(1418 350.5) rotate(-42.9)"><path d="M0 0L3.5 -1.7H19.1049731745428V1.7H3.5Z" fill="#e0a838" stroke="#7a5010" stroke-width="0.6"/><path d="M0 0L3.5 -1.7V1.7Z" fill="#f0d8a8" stroke="#7a5010" stroke-width="0.4"/><path d="M0 0L1.3 -0.5V0.5Z" fill="#333"/><rect x="16.1049731745428" y="-1.7" width="3" height="3.4" fill="#e02020"/></g><path d="M1161.0 167.10000000000002C1164.375 159.8 1173.0 159.52 1176.0 166.60000000000002C1173.0 173.24 1164.375 173.24 1161.0 167.10000000000002Z" fill="#000"/><path d="M1164.9 166.5A3.6 3.6 0 0 0 1172.1 166.5" fill="none" stroke="#fff" stroke-width="1.7"/><path d="M1167.3 165.0L1168.3 167.6" stroke="#fff" stroke-width="0.7"/><path d="M1161.0 187.10000000000002C1164.375 179.8 1173.0 179.52 1176.0 186.60000000000002C1173.0 193.24 1164.375 193.24 1161.0 187.10000000000002Z" fill="#000"/><path d="M1164.9 186.5A3.6 3.6 0 0 0 1172.1 186.5" fill="none" stroke="#fff" stroke-width="1.7"/><path d="M1167.3 185.0L1168.3 187.6" stroke="#fff" stroke-width="0.7"/><path d="M1161.0 207.10000000000002C1164.375 199.8 1173.0 199.52 1176.0 206.60000000000002C1173.0 213.24 1164.375 213.24 1161.0 207.10000000000002Z" fill="#000"/><path d="M1164.9 206.5A3.6 3.6 0 0 0 1172.1 206.5" fill="none" stroke="#fff" stroke-width="1.7"/><path d="M1167.3 205.0L1168.3 207.6" stroke="#fff" stroke-width="0.7"/><path d="M1161.0 227.10000000000002C1164.375 219.8 1173.0 219.52 1176.0 226.60000000000002C1173.0 233.24 1164.375 233.24 1161.0 227.10000000000002Z" fill="#000"/><path d="M1164.9 226.5A3.6 3.6 0 0 0 1172.1 226.5" fill="none" stroke="#fff" stroke-width="1.7"/><path d="M1167.3 225.0L1168.3 227.6" stroke="#fff" stroke-width="0.7"/><path d="M1161.0 247.10000000000002C1164.375 239.8 1173.0 239.52 1176.0 246.60000000000002C1173.0 253.24 1164.375 253.24 1161.0 247.10000000000002Z" fill="#000"/><path d="M1164.9 246.5A3.6 3.6 0 0 0 1172.1 246.5" fill="none" stroke="#fff" stroke-width="1.7"/><path d="M1167.3 245.0L1168.3 247.6" stroke="#fff" stroke-width="0.7"/><path d="M1161.0 267.1C1164.375 259.8 1173.0 259.52000000000004 1176.0 266.6C1173.0 273.24 1164.375 273.24 1161.0 267.1Z" fill="#000"/><path d="M1164.9 266.5A3.6 3.6 0 0 0 1172.1 266.5" fill="none" stroke="#fff" stroke-width="1.7"/><path d="M1167.3 265.0L1168.3 267.6" stroke="#fff" stroke-width="0.7"/><g transform="translate(1184.5 173.5) rotate(-45.0)"><path d="M0 0L3.5 -1.5H18.384776310850235V1.5H3.5Z" fill="#e0a838" stroke="#7a5010" stroke-width="0.6"/><path d="M0 0L3.5 -1.5V1.5Z" fill="#f0d8a8" stroke="#7a5010" stroke-width="0.4"/><path d="M0 0L1.3 -0.5V0.5Z" fill="#333"/><rect x="15.384776310850235" y="-1.5" width="3" height="3.0" fill="#e02020"/></g><path d="M1415.3 368.0C1418.675 360.7 1427.3 360.42 1430.3 367.5C1427.3 374.14 1418.675 374.14 1415.3 368.0Z" fill="#000"/><path d="M1419.2 367.4A3.6 3.6 0 0 0 1426.4 367.4" fill="none" stroke="#fff" stroke-width="1.7"/><path d="M1421.6 365.9L1422.6 368.5" stroke="#fff" stroke-width="0.7"/><path d="M1441.8 367.2V364.7A3.2 3.2 0 0 1 1448.2 364.7V367.2" fill="none" stroke="#bdbdbd" stroke-width="1.5"/><rect x="1440" y="367.2" width="10" height="7.7" fill="#bdbdbd"/><path d="M1415.3 388.0C1418.675 380.7 1427.3 380.42 1430.3 387.5C1427.3 394.14 1418.675 394.14 1415.3 388.0Z" fill="#000"/><path d="M1419.2 387.4A3.6 3.6 0 0 0 1426.4 387.4" fill="none" stroke="#fff" stroke-width="1.7"/><path d="M1421.6 385.9L1422.6 388.5" stroke="#fff" stroke-width="0.7"/><path d="M1441.8 387.2V384.7A3.2 3.2 0 0 1 1448.2 384.7V387.2" fill="none" stroke="#bdbdbd" stroke-width="1.5"/><rect x="1440" y="387.2" width="10" height="7.7" fill="#bdbdbd"/><path d="M1415.3 408.0C1418.675 400.7 1427.3 400.42 1430.3 407.5C1427.3 414.14 1418.675 414.14 1415.3 408.0Z" fill="#000"/><path d="M1419.2 407.4A3.6 3.6 0 0 0 1426.4 407.4" fill="none" stroke="#fff" stroke-width="1.7"/><path d="M1421.6 405.9L1422.6 408.5" stroke="#fff" stroke-width="0.7"/><path d="M1441.8 407.2V404.7A3.2 3.2 0 0 1 1448.2 404.7V407.2" fill="none" stroke="#bdbdbd" stroke-width="1.5"/><rect x="1440" y="407.2" width="10" height="7.7" fill="#bdbdbd"/><path d="M1415.3 428.0C1418.675 420.7 1427.3 420.42 1430.3 427.5C1427.3 434.14 1418.675 434.14 1415.3 428.0Z" fill="#1e3c88"/><path d="M1419.2 427.4A3.6 3.6 0 0 0 1426.4 427.4" fill="none" stroke="#0b50d8" stroke-width="1.7"/><path d="M1421.6 425.9L1422.6 428.5" stroke="#0b50d8" stroke-width="0.7"/><path d="M1441.8 427.2V424.7A3.2 3.2 0 0 1 1448.2 424.7V427.2" fill="none" stroke="#b4c0d6" stroke-width="1.5"/><rect x="1440" y="427.2" width="10" height="7.7" fill="#b4c0d6"/><g transform="translate(1394.7 434.1) rotate(-43.8)"><path d="M0 0L3.5 -1.5H17.610508226624304V1.5H3.5Z" fill="#d8b060" stroke="#8a6a30" stroke-width="0.6"/><path d="M0 0L3.5 -1.5V1.5Z" fill="#f0d8a8" stroke="#8a6a30" stroke-width="0.4"/><path d="M0 0L1.3 -0.5V0.5Z" fill="#333"/><rect x="14.610508226624304" y="-1.5" width="3" height="3.0" fill="#e07070"/></g><rect x="1463.5" y="116.3" width="1.8" height="1.8" fill="#9a9a9a"/><rect x="1469.7" y="116.3" width="1.8" height="1.8" fill="#9a9a9a"/><rect x="1475.9" y="116.3" width="1.8" height="1.8" fill="#9a9a9a"/><rect x="1482.1" y="116.3" width="1.8" height="1.8" fill="#9a9a9a"/><rect x="1488.3" y="116.3" width="1.8" height="1.8" fill="#9a9a9a"/><rect x="1456" y="120.3" width="44" height="42.1" rx="6" fill="#b6b6b6"/><rect x="1456" y="167" width="44" height="42.8" rx="6" fill="#b6b6b6"/><rect x="1456" y="418.6" width="44" height="41.7" rx="6" fill="#b6b6b6"/><rect x="1463.5" y="127.4" width="27.3" height="27" fill="#fff" stroke="#222" stroke-width="1"/><rect x="1463.5" y="127.4" width="27.3" height="4.4" fill="#000"/><rect x="1464.6" y="128.3" width="3" height="3" fill="#fff"/><rect x="1463.5" y="174.3" width="27.3" height="27" fill="#fff" stroke="#222" stroke-width="1"/><rect x="1463.5" y="174.3" width="27.3" height="4.4" fill="#000"/><rect x="1464.6" y="175.20000000000002" width="3" height="3" fill="#fff"/><rect x="1463.5" y="221.4" width="27.3" height="27" fill="#fff" stroke="#222" stroke-width="1"/><rect x="1463.5" y="221.4" width="27.3" height="4.4" fill="#000"/><rect x="1464.6" y="222.3" width="3" height="3" fill="#fff"/><rect x="1463.5" y="277.7" width="27.3" height="27" fill="#fff" stroke="#222" stroke-width="1"/><rect x="1463.5" y="277.7" width="27.3" height="4.4" fill="#000"/><rect x="1464.6" y="278.59999999999997" width="3" height="3" fill="#fff"/><rect x="1463.5" y="323.7" width="27.3" height="27" fill="#fff" stroke="#222" stroke-width="1"/><rect x="1463.5" y="323.7" width="27.3" height="4.4" fill="#000"/><rect x="1464.6" y="324.59999999999997" width="3" height="3" fill="#fff"/><rect x="1463.5" y="369.9" width="27.3" height="27" fill="#fff" stroke="#222" stroke-width="1"/><rect x="1463.5" y="369.9" width="27.3" height="4.4" fill="#000"/><rect x="1464.6" y="370.79999999999995" width="3" height="3" fill="#fff"/><rect x="1463.5" y="425.7" width="27.3" height="27" fill="#fff" stroke="#222" stroke-width="1"/><rect x="1463.5" y="425.7" width="27.3" height="4.4" fill="#000"/><rect x="1464.6" y="426.59999999999997" width="3" height="3" fill="#fff"/><rect x="1463.5" y="472.0" width="27.3" height="27" fill="#fff" stroke="#222" stroke-width="1"/><rect x="1463.5" y="472.0" width="27.3" height="4.4" fill="#000"/><rect x="1464.6" y="472.9" width="3" height="3" fill="#fff"/><path d="M1469.5 137.9L1474 135.9V147.9L1469.5 149.9Z" fill="#8a8a8a" stroke="#444" stroke-width="0.6"/><path d="M1472 137.9L1484 134.9V145.9L1472 148.9Z" fill="#f4f4f4" stroke="#555" stroke-width="0.7"/><path d="M1476 145.9L1480 138.9L1481 144.9Z" fill="none" stroke="#e03030" stroke-width="0.8"/><rect x="1470" y="183.8" width="11.5" height="8" fill="#f6e8b0" stroke="#555" stroke-width="0.7"/><circle cx="1481" cy="192.8" r="4.8" fill="#f6e8b0" fill-opacity="0.8" stroke="#555" stroke-width="0.7"/><rect x="1469" y="230.9" width="16" height="11" rx="2" fill="#f4f4f4" stroke="#b8c8e8" stroke-width="0.9"/><rect x="1467" y="286.2" width="3.5" height="3" fill="#000"/><rect x="1472.5" y="286.0" width="14" height="3.4" fill="none" stroke="#333" stroke-width="0.8"/><rect x="1467" y="291.7" width="3.5" height="3" fill="#000"/><rect x="1472.5" y="291.5" width="14" height="3.4" fill="none" stroke="#333" stroke-width="0.8"/><rect x="1467" y="297.2" width="3.5" height="3" fill="#000"/><rect x="1472.5" y="297.0" width="14" height="3.4" fill="none" stroke="#333" stroke-width="0.8"/><path d="M1469.5 332.2H1485L1479 339.2V346.2L1476 344.2V339.2Z" fill="#bdbdbd" stroke="#555" stroke-width="0.7"/><path d="M1469 378.4L1475 382.4H1485V388.4H1475L1469 392.4Z" fill="#eee" stroke="#444" stroke-width="0.8"/><rect x="1476" y="381.9" width="8" height="7" fill="#9a9a9a"/><path d="M1466 385.4H1489" stroke="#f08080" stroke-width="0.6" stroke-dasharray="1 1"/><path d="M1467 434.2h9M1467 437.2h10M1467 440.2h9M1467 443.2h10" stroke="#777" stroke-width="0.6"/><path d="M1464 448.7H1490" stroke="#333" stroke-width="0.7"/><path d="M1468 450.7h3M1474 450.7h13" stroke="#444" stroke-width="0.6"/><rect x="1471" y="480.5" width="12" height="14.5" rx="1" fill="#c88a2a" stroke="#7a5010" stroke-width="0.6"/><rect x="1472.8" y="482.5" width="8.4" height="11" fill="#f8f8f8"/><rect x="1474.5" y="479.0" width="5" height="3" fill="#999" stroke="#555" stroke-width="0.5"/><rect x="1458.0" y="262.5" width="1" height="1" fill="#888"/><rect x="1460.7" y="262.5" width="1" height="1" fill="#888"/><rect x="1463.4" y="262.5" width="1" height="1" fill="#888"/><rect x="1466.1" y="262.5" width="1" height="1" fill="#888"/><rect x="1468.8" y="262.5" width="1" height="1" fill="#888"/><rect x="1471.5" y="262.5" width="1" height="1" fill="#888"/><rect x="1474.2" y="262.5" width="1" height="1" fill="#888"/><rect x="1476.9" y="262.5" width="1" height="1" fill="#888"/><rect x="1479.6" y="262.5" width="1" height="1" fill="#888"/><rect x="1482.3" y="262.5" width="1" height="1" fill="#888"/><rect x="1485.0" y="262.5" width="1" height="1" fill="#888"/><rect x="1487.7" y="262.5" width="1" height="1" fill="#888"/><rect x="1490.4" y="262.5" width="1" height="1" fill="#888"/><rect x="1493.1" y="262.5" width="1" height="1" fill="#888"/><rect x="1495.8" y="262.5" width="1" height="1" fill="#888"/><rect x="1458.0" y="411.5" width="1" height="1" fill="#888"/><rect x="1460.7" y="411.5" width="1" height="1" fill="#888"/><rect x="1463.4" y="411.5" width="1" height="1" fill="#888"/><rect x="1466.1" y="411.5" width="1" height="1" fill="#888"/><rect x="1468.8" y="411.5" width="1" height="1" fill="#888"/><rect x="1471.5" y="411.5" width="1" height="1" fill="#888"/><rect x="1474.2" y="411.5" width="1" height="1" fill="#888"/><rect x="1476.9" y="411.5" width="1" height="1" fill="#888"/><rect x="1479.6" y="411.5" width="1" height="1" fill="#888"/><rect x="1482.3" y="411.5" width="1" height="1" fill="#888"/><rect x="1485.0" y="411.5" width="1" height="1" fill="#888"/><rect x="1487.7" y="411.5" width="1" height="1" fill="#888"/><rect x="1490.4" y="411.5" width="1" height="1" fill="#888"/><rect x="1493.1" y="411.5" width="1" height="1" fill="#888"/><rect x="1495.8" y="411.5" width="1" height="1" fill="#888"/><defs><radialGradient id="ghalo"><stop offset="0.72" stop-color="#ffffff" stop-opacity="0"/><stop offset="0.84" stop-color="#ffffff" stop-opacity="0.55"/><stop offset="0.90" stop-color="#c4d0dc" stop-opacity="0.7"/><stop offset="0.95" stop-color="#a9bccd" stop-opacity="0.85"/><stop offset="1" stop-color="#c8d4de" stop-opacity="0.1"/></radialGradient></defs><circle cx="1303" cy="425.8" r="39.5" fill="url(#ghalo)"/><path d="M1303.5 425.5V447.5L1308.5 442.5L1312.5 452L1316 450.6L1312 441.3H1318.8Z" fill="#fff" stroke="#000" stroke-width="1.2" stroke-linejoin="round"/></svg></body></html>
